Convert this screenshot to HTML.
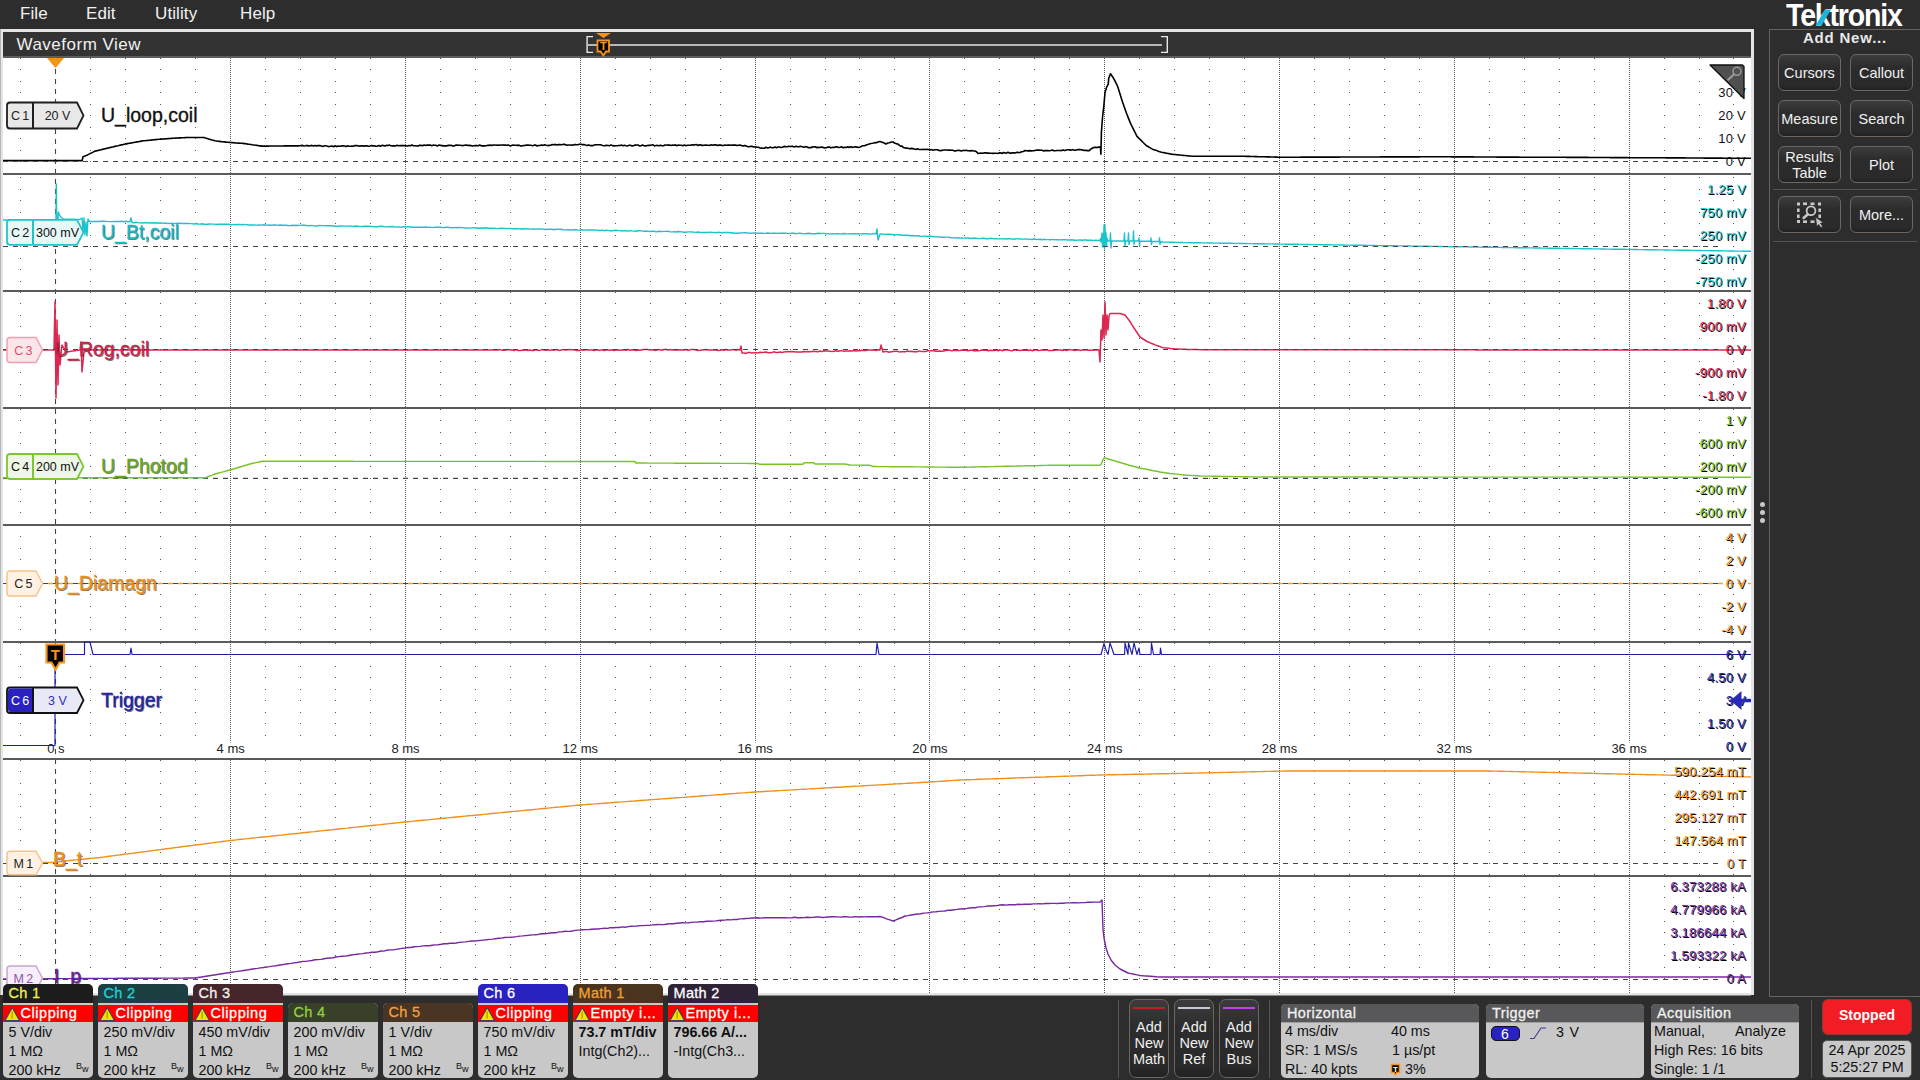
<!DOCTYPE html>
<html><head><meta charset="utf-8"><style>
*{margin:0;padding:0;box-sizing:border-box}
html,body{width:1920px;height:1080px;overflow:hidden;background:#2d2d2d;font-family:"Liberation Sans", sans-serif}
.a{position:absolute}
.menu{position:absolute;top:3px;color:#f2f2f2;font-size:17px;line-height:22px;letter-spacing:0.1px}
</style></head><body>

<div class="menu" style="left:20px">File</div>
<div class="menu" style="left:86px">Edit</div>
<div class="menu" style="left:155px">Utility</div>
<div class="menu" style="left:240px">Help</div>
<div class="a" style="left:0;top:29px;width:1754px;height:966px;background:#e4e4e6;border-left:1px solid #b4b6ba"></div>
<div class="a" style="left:3px;top:32px;width:1748px;height:24px;background:#333"></div>
<div class="a" style="left:3px;top:56px;width:1748px;height:2px;background:#5c5c60"></div>
<div class="a" style="left:16.5px;top:35px;color:#f0f0f0;font-size:17px;line-height:20px;letter-spacing:0.5px">Waveform View</div>
<div class="a" style="left:3px;top:58px;width:1748px;height:937px;background:#fff"></div>
<svg class="a" style="left:0;top:0" width="1920" height="1080" viewBox="0 0 1920 1080" font-family='Liberation Sans, sans-serif'>
<defs><clipPath id="pc"><rect x="3" y="58" width="1748" height="937"/></clipPath></defs>
<g clip-path="url(#pc)">
<path d="M20 58h1v1h-1zM90 58h1v1h-1zM125 58h1v1h-1zM160 58h1v1h-1zM195 58h1v1h-1zM265 58h1v1h-1zM300 58h1v1h-1zM335 58h1v1h-1zM370 58h1v1h-1zM440 58h1v1h-1zM475 58h1v1h-1zM510 58h1v1h-1zM545 58h1v1h-1zM615 58h1v1h-1zM650 58h1v1h-1zM685 58h1v1h-1zM720 58h1v1h-1zM790 58h1v1h-1zM825 58h1v1h-1zM859 58h1v1h-1zM894 58h1v1h-1zM964 58h1v1h-1zM999 58h1v1h-1zM1034 58h1v1h-1zM1069 58h1v1h-1zM1139 58h1v1h-1zM1174 58h1v1h-1zM1209 58h1v1h-1zM1244 58h1v1h-1zM1314 58h1v1h-1zM1349 58h1v1h-1zM1384 58h1v1h-1zM1419 58h1v1h-1zM1489 58h1v1h-1zM1524 58h1v1h-1zM1559 58h1v1h-1zM1594 58h1v1h-1zM1664 58h1v1h-1zM1699 58h1v1h-1zM1733 58h1v1h-1zM20 69h1v1h-1zM90 69h1v1h-1zM125 69h1v1h-1zM160 69h1v1h-1zM195 69h1v1h-1zM265 69h1v1h-1zM300 69h1v1h-1zM335 69h1v1h-1zM370 69h1v1h-1zM440 69h1v1h-1zM475 69h1v1h-1zM510 69h1v1h-1zM545 69h1v1h-1zM615 69h1v1h-1zM650 69h1v1h-1zM685 69h1v1h-1zM720 69h1v1h-1zM790 69h1v1h-1zM825 69h1v1h-1zM859 69h1v1h-1zM894 69h1v1h-1zM964 69h1v1h-1zM999 69h1v1h-1zM1034 69h1v1h-1zM1069 69h1v1h-1zM1139 69h1v1h-1zM1174 69h1v1h-1zM1209 69h1v1h-1zM1244 69h1v1h-1zM1314 69h1v1h-1zM1349 69h1v1h-1zM1384 69h1v1h-1zM1419 69h1v1h-1zM1489 69h1v1h-1zM1524 69h1v1h-1zM1559 69h1v1h-1zM1594 69h1v1h-1zM1664 69h1v1h-1zM1699 69h1v1h-1zM1733 69h1v1h-1zM20 81h1v1h-1zM90 81h1v1h-1zM125 81h1v1h-1zM160 81h1v1h-1zM195 81h1v1h-1zM265 81h1v1h-1zM300 81h1v1h-1zM335 81h1v1h-1zM370 81h1v1h-1zM440 81h1v1h-1zM475 81h1v1h-1zM510 81h1v1h-1zM545 81h1v1h-1zM615 81h1v1h-1zM650 81h1v1h-1zM685 81h1v1h-1zM720 81h1v1h-1zM790 81h1v1h-1zM825 81h1v1h-1zM859 81h1v1h-1zM894 81h1v1h-1zM964 81h1v1h-1zM999 81h1v1h-1zM1034 81h1v1h-1zM1069 81h1v1h-1zM1139 81h1v1h-1zM1174 81h1v1h-1zM1209 81h1v1h-1zM1244 81h1v1h-1zM1314 81h1v1h-1zM1349 81h1v1h-1zM1384 81h1v1h-1zM1419 81h1v1h-1zM1489 81h1v1h-1zM1524 81h1v1h-1zM1559 81h1v1h-1zM1594 81h1v1h-1zM1664 81h1v1h-1zM1699 81h1v1h-1zM1733 81h1v1h-1zM20 92h1v1h-1zM90 92h1v1h-1zM125 92h1v1h-1zM160 92h1v1h-1zM195 92h1v1h-1zM265 92h1v1h-1zM300 92h1v1h-1zM335 92h1v1h-1zM370 92h1v1h-1zM440 92h1v1h-1zM475 92h1v1h-1zM510 92h1v1h-1zM545 92h1v1h-1zM615 92h1v1h-1zM650 92h1v1h-1zM685 92h1v1h-1zM720 92h1v1h-1zM790 92h1v1h-1zM825 92h1v1h-1zM859 92h1v1h-1zM894 92h1v1h-1zM964 92h1v1h-1zM999 92h1v1h-1zM1034 92h1v1h-1zM1069 92h1v1h-1zM1139 92h1v1h-1zM1174 92h1v1h-1zM1209 92h1v1h-1zM1244 92h1v1h-1zM1314 92h1v1h-1zM1349 92h1v1h-1zM1384 92h1v1h-1zM1419 92h1v1h-1zM1489 92h1v1h-1zM1524 92h1v1h-1zM1559 92h1v1h-1zM1594 92h1v1h-1zM1664 92h1v1h-1zM1699 92h1v1h-1zM1733 92h1v1h-1zM20 104h1v1h-1zM90 104h1v1h-1zM125 104h1v1h-1zM160 104h1v1h-1zM195 104h1v1h-1zM265 104h1v1h-1zM300 104h1v1h-1zM335 104h1v1h-1zM370 104h1v1h-1zM440 104h1v1h-1zM475 104h1v1h-1zM510 104h1v1h-1zM545 104h1v1h-1zM615 104h1v1h-1zM650 104h1v1h-1zM685 104h1v1h-1zM720 104h1v1h-1zM790 104h1v1h-1zM825 104h1v1h-1zM859 104h1v1h-1zM894 104h1v1h-1zM964 104h1v1h-1zM999 104h1v1h-1zM1034 104h1v1h-1zM1069 104h1v1h-1zM1139 104h1v1h-1zM1174 104h1v1h-1zM1209 104h1v1h-1zM1244 104h1v1h-1zM1314 104h1v1h-1zM1349 104h1v1h-1zM1384 104h1v1h-1zM1419 104h1v1h-1zM1489 104h1v1h-1zM1524 104h1v1h-1zM1559 104h1v1h-1zM1594 104h1v1h-1zM1664 104h1v1h-1zM1699 104h1v1h-1zM1733 104h1v1h-1zM20 115h1v1h-1zM90 115h1v1h-1zM125 115h1v1h-1zM160 115h1v1h-1zM195 115h1v1h-1zM265 115h1v1h-1zM300 115h1v1h-1zM335 115h1v1h-1zM370 115h1v1h-1zM440 115h1v1h-1zM475 115h1v1h-1zM510 115h1v1h-1zM545 115h1v1h-1zM615 115h1v1h-1zM650 115h1v1h-1zM685 115h1v1h-1zM720 115h1v1h-1zM790 115h1v1h-1zM825 115h1v1h-1zM859 115h1v1h-1zM894 115h1v1h-1zM964 115h1v1h-1zM999 115h1v1h-1zM1034 115h1v1h-1zM1069 115h1v1h-1zM1139 115h1v1h-1zM1174 115h1v1h-1zM1209 115h1v1h-1zM1244 115h1v1h-1zM1314 115h1v1h-1zM1349 115h1v1h-1zM1384 115h1v1h-1zM1419 115h1v1h-1zM1489 115h1v1h-1zM1524 115h1v1h-1zM1559 115h1v1h-1zM1594 115h1v1h-1zM1664 115h1v1h-1zM1699 115h1v1h-1zM1733 115h1v1h-1zM20 127h1v1h-1zM90 127h1v1h-1zM125 127h1v1h-1zM160 127h1v1h-1zM195 127h1v1h-1zM265 127h1v1h-1zM300 127h1v1h-1zM335 127h1v1h-1zM370 127h1v1h-1zM440 127h1v1h-1zM475 127h1v1h-1zM510 127h1v1h-1zM545 127h1v1h-1zM615 127h1v1h-1zM650 127h1v1h-1zM685 127h1v1h-1zM720 127h1v1h-1zM790 127h1v1h-1zM825 127h1v1h-1zM859 127h1v1h-1zM894 127h1v1h-1zM964 127h1v1h-1zM999 127h1v1h-1zM1034 127h1v1h-1zM1069 127h1v1h-1zM1139 127h1v1h-1zM1174 127h1v1h-1zM1209 127h1v1h-1zM1244 127h1v1h-1zM1314 127h1v1h-1zM1349 127h1v1h-1zM1384 127h1v1h-1zM1419 127h1v1h-1zM1489 127h1v1h-1zM1524 127h1v1h-1zM1559 127h1v1h-1zM1594 127h1v1h-1zM1664 127h1v1h-1zM1699 127h1v1h-1zM1733 127h1v1h-1zM20 138h1v1h-1zM90 138h1v1h-1zM125 138h1v1h-1zM160 138h1v1h-1zM195 138h1v1h-1zM265 138h1v1h-1zM300 138h1v1h-1zM335 138h1v1h-1zM370 138h1v1h-1zM440 138h1v1h-1zM475 138h1v1h-1zM510 138h1v1h-1zM545 138h1v1h-1zM615 138h1v1h-1zM650 138h1v1h-1zM685 138h1v1h-1zM720 138h1v1h-1zM790 138h1v1h-1zM825 138h1v1h-1zM859 138h1v1h-1zM894 138h1v1h-1zM964 138h1v1h-1zM999 138h1v1h-1zM1034 138h1v1h-1zM1069 138h1v1h-1zM1139 138h1v1h-1zM1174 138h1v1h-1zM1209 138h1v1h-1zM1244 138h1v1h-1zM1314 138h1v1h-1zM1349 138h1v1h-1zM1384 138h1v1h-1zM1419 138h1v1h-1zM1489 138h1v1h-1zM1524 138h1v1h-1zM1559 138h1v1h-1zM1594 138h1v1h-1zM1664 138h1v1h-1zM1699 138h1v1h-1zM1733 138h1v1h-1zM20 150h1v1h-1zM90 150h1v1h-1zM125 150h1v1h-1zM160 150h1v1h-1zM195 150h1v1h-1zM265 150h1v1h-1zM300 150h1v1h-1zM335 150h1v1h-1zM370 150h1v1h-1zM440 150h1v1h-1zM475 150h1v1h-1zM510 150h1v1h-1zM545 150h1v1h-1zM615 150h1v1h-1zM650 150h1v1h-1zM685 150h1v1h-1zM720 150h1v1h-1zM790 150h1v1h-1zM825 150h1v1h-1zM859 150h1v1h-1zM894 150h1v1h-1zM964 150h1v1h-1zM999 150h1v1h-1zM1034 150h1v1h-1zM1069 150h1v1h-1zM1139 150h1v1h-1zM1174 150h1v1h-1zM1209 150h1v1h-1zM1244 150h1v1h-1zM1314 150h1v1h-1zM1349 150h1v1h-1zM1384 150h1v1h-1zM1419 150h1v1h-1zM1489 150h1v1h-1zM1524 150h1v1h-1zM1559 150h1v1h-1zM1594 150h1v1h-1zM1664 150h1v1h-1zM1699 150h1v1h-1zM1733 150h1v1h-1zM20 161h1v1h-1zM90 161h1v1h-1zM125 161h1v1h-1zM160 161h1v1h-1zM195 161h1v1h-1zM265 161h1v1h-1zM300 161h1v1h-1zM335 161h1v1h-1zM370 161h1v1h-1zM440 161h1v1h-1zM475 161h1v1h-1zM510 161h1v1h-1zM545 161h1v1h-1zM615 161h1v1h-1zM650 161h1v1h-1zM685 161h1v1h-1zM720 161h1v1h-1zM790 161h1v1h-1zM825 161h1v1h-1zM859 161h1v1h-1zM894 161h1v1h-1zM964 161h1v1h-1zM999 161h1v1h-1zM1034 161h1v1h-1zM1069 161h1v1h-1zM1139 161h1v1h-1zM1174 161h1v1h-1zM1209 161h1v1h-1zM1244 161h1v1h-1zM1314 161h1v1h-1zM1349 161h1v1h-1zM1384 161h1v1h-1zM1419 161h1v1h-1zM1489 161h1v1h-1zM1524 161h1v1h-1zM1559 161h1v1h-1zM1594 161h1v1h-1zM1664 161h1v1h-1zM1699 161h1v1h-1zM1733 161h1v1h-1zM20 177h1v1h-1zM90 177h1v1h-1zM125 177h1v1h-1zM160 177h1v1h-1zM195 177h1v1h-1zM265 177h1v1h-1zM300 177h1v1h-1zM335 177h1v1h-1zM370 177h1v1h-1zM440 177h1v1h-1zM475 177h1v1h-1zM510 177h1v1h-1zM545 177h1v1h-1zM615 177h1v1h-1zM650 177h1v1h-1zM685 177h1v1h-1zM720 177h1v1h-1zM790 177h1v1h-1zM825 177h1v1h-1zM859 177h1v1h-1zM894 177h1v1h-1zM964 177h1v1h-1zM999 177h1v1h-1zM1034 177h1v1h-1zM1069 177h1v1h-1zM1139 177h1v1h-1zM1174 177h1v1h-1zM1209 177h1v1h-1zM1244 177h1v1h-1zM1314 177h1v1h-1zM1349 177h1v1h-1zM1384 177h1v1h-1zM1419 177h1v1h-1zM1489 177h1v1h-1zM1524 177h1v1h-1zM1559 177h1v1h-1zM1594 177h1v1h-1zM1664 177h1v1h-1zM1699 177h1v1h-1zM1733 177h1v1h-1zM20 189h1v1h-1zM90 189h1v1h-1zM125 189h1v1h-1zM160 189h1v1h-1zM195 189h1v1h-1zM265 189h1v1h-1zM300 189h1v1h-1zM335 189h1v1h-1zM370 189h1v1h-1zM440 189h1v1h-1zM475 189h1v1h-1zM510 189h1v1h-1zM545 189h1v1h-1zM615 189h1v1h-1zM650 189h1v1h-1zM685 189h1v1h-1zM720 189h1v1h-1zM790 189h1v1h-1zM825 189h1v1h-1zM859 189h1v1h-1zM894 189h1v1h-1zM964 189h1v1h-1zM999 189h1v1h-1zM1034 189h1v1h-1zM1069 189h1v1h-1zM1139 189h1v1h-1zM1174 189h1v1h-1zM1209 189h1v1h-1zM1244 189h1v1h-1zM1314 189h1v1h-1zM1349 189h1v1h-1zM1384 189h1v1h-1zM1419 189h1v1h-1zM1489 189h1v1h-1zM1524 189h1v1h-1zM1559 189h1v1h-1zM1594 189h1v1h-1zM1664 189h1v1h-1zM1699 189h1v1h-1zM1733 189h1v1h-1zM20 200h1v1h-1zM90 200h1v1h-1zM125 200h1v1h-1zM160 200h1v1h-1zM195 200h1v1h-1zM265 200h1v1h-1zM300 200h1v1h-1zM335 200h1v1h-1zM370 200h1v1h-1zM440 200h1v1h-1zM475 200h1v1h-1zM510 200h1v1h-1zM545 200h1v1h-1zM615 200h1v1h-1zM650 200h1v1h-1zM685 200h1v1h-1zM720 200h1v1h-1zM790 200h1v1h-1zM825 200h1v1h-1zM859 200h1v1h-1zM894 200h1v1h-1zM964 200h1v1h-1zM999 200h1v1h-1zM1034 200h1v1h-1zM1069 200h1v1h-1zM1139 200h1v1h-1zM1174 200h1v1h-1zM1209 200h1v1h-1zM1244 200h1v1h-1zM1314 200h1v1h-1zM1349 200h1v1h-1zM1384 200h1v1h-1zM1419 200h1v1h-1zM1489 200h1v1h-1zM1524 200h1v1h-1zM1559 200h1v1h-1zM1594 200h1v1h-1zM1664 200h1v1h-1zM1699 200h1v1h-1zM1733 200h1v1h-1zM20 212h1v1h-1zM90 212h1v1h-1zM125 212h1v1h-1zM160 212h1v1h-1zM195 212h1v1h-1zM265 212h1v1h-1zM300 212h1v1h-1zM335 212h1v1h-1zM370 212h1v1h-1zM440 212h1v1h-1zM475 212h1v1h-1zM510 212h1v1h-1zM545 212h1v1h-1zM615 212h1v1h-1zM650 212h1v1h-1zM685 212h1v1h-1zM720 212h1v1h-1zM790 212h1v1h-1zM825 212h1v1h-1zM859 212h1v1h-1zM894 212h1v1h-1zM964 212h1v1h-1zM999 212h1v1h-1zM1034 212h1v1h-1zM1069 212h1v1h-1zM1139 212h1v1h-1zM1174 212h1v1h-1zM1209 212h1v1h-1zM1244 212h1v1h-1zM1314 212h1v1h-1zM1349 212h1v1h-1zM1384 212h1v1h-1zM1419 212h1v1h-1zM1489 212h1v1h-1zM1524 212h1v1h-1zM1559 212h1v1h-1zM1594 212h1v1h-1zM1664 212h1v1h-1zM1699 212h1v1h-1zM1733 212h1v1h-1zM20 223h1v1h-1zM90 223h1v1h-1zM125 223h1v1h-1zM160 223h1v1h-1zM195 223h1v1h-1zM265 223h1v1h-1zM300 223h1v1h-1zM335 223h1v1h-1zM370 223h1v1h-1zM440 223h1v1h-1zM475 223h1v1h-1zM510 223h1v1h-1zM545 223h1v1h-1zM615 223h1v1h-1zM650 223h1v1h-1zM685 223h1v1h-1zM720 223h1v1h-1zM790 223h1v1h-1zM825 223h1v1h-1zM859 223h1v1h-1zM894 223h1v1h-1zM964 223h1v1h-1zM999 223h1v1h-1zM1034 223h1v1h-1zM1069 223h1v1h-1zM1139 223h1v1h-1zM1174 223h1v1h-1zM1209 223h1v1h-1zM1244 223h1v1h-1zM1314 223h1v1h-1zM1349 223h1v1h-1zM1384 223h1v1h-1zM1419 223h1v1h-1zM1489 223h1v1h-1zM1524 223h1v1h-1zM1559 223h1v1h-1zM1594 223h1v1h-1zM1664 223h1v1h-1zM1699 223h1v1h-1zM1733 223h1v1h-1zM20 235h1v1h-1zM90 235h1v1h-1zM125 235h1v1h-1zM160 235h1v1h-1zM195 235h1v1h-1zM265 235h1v1h-1zM300 235h1v1h-1zM335 235h1v1h-1zM370 235h1v1h-1zM440 235h1v1h-1zM475 235h1v1h-1zM510 235h1v1h-1zM545 235h1v1h-1zM615 235h1v1h-1zM650 235h1v1h-1zM685 235h1v1h-1zM720 235h1v1h-1zM790 235h1v1h-1zM825 235h1v1h-1zM859 235h1v1h-1zM894 235h1v1h-1zM964 235h1v1h-1zM999 235h1v1h-1zM1034 235h1v1h-1zM1069 235h1v1h-1zM1139 235h1v1h-1zM1174 235h1v1h-1zM1209 235h1v1h-1zM1244 235h1v1h-1zM1314 235h1v1h-1zM1349 235h1v1h-1zM1384 235h1v1h-1zM1419 235h1v1h-1zM1489 235h1v1h-1zM1524 235h1v1h-1zM1559 235h1v1h-1zM1594 235h1v1h-1zM1664 235h1v1h-1zM1699 235h1v1h-1zM1733 235h1v1h-1zM20 246h1v1h-1zM90 246h1v1h-1zM125 246h1v1h-1zM160 246h1v1h-1zM195 246h1v1h-1zM265 246h1v1h-1zM300 246h1v1h-1zM335 246h1v1h-1zM370 246h1v1h-1zM440 246h1v1h-1zM475 246h1v1h-1zM510 246h1v1h-1zM545 246h1v1h-1zM615 246h1v1h-1zM650 246h1v1h-1zM685 246h1v1h-1zM720 246h1v1h-1zM790 246h1v1h-1zM825 246h1v1h-1zM859 246h1v1h-1zM894 246h1v1h-1zM964 246h1v1h-1zM999 246h1v1h-1zM1034 246h1v1h-1zM1069 246h1v1h-1zM1139 246h1v1h-1zM1174 246h1v1h-1zM1209 246h1v1h-1zM1244 246h1v1h-1zM1314 246h1v1h-1zM1349 246h1v1h-1zM1384 246h1v1h-1zM1419 246h1v1h-1zM1489 246h1v1h-1zM1524 246h1v1h-1zM1559 246h1v1h-1zM1594 246h1v1h-1zM1664 246h1v1h-1zM1699 246h1v1h-1zM1733 246h1v1h-1zM20 258h1v1h-1zM90 258h1v1h-1zM125 258h1v1h-1zM160 258h1v1h-1zM195 258h1v1h-1zM265 258h1v1h-1zM300 258h1v1h-1zM335 258h1v1h-1zM370 258h1v1h-1zM440 258h1v1h-1zM475 258h1v1h-1zM510 258h1v1h-1zM545 258h1v1h-1zM615 258h1v1h-1zM650 258h1v1h-1zM685 258h1v1h-1zM720 258h1v1h-1zM790 258h1v1h-1zM825 258h1v1h-1zM859 258h1v1h-1zM894 258h1v1h-1zM964 258h1v1h-1zM999 258h1v1h-1zM1034 258h1v1h-1zM1069 258h1v1h-1zM1139 258h1v1h-1zM1174 258h1v1h-1zM1209 258h1v1h-1zM1244 258h1v1h-1zM1314 258h1v1h-1zM1349 258h1v1h-1zM1384 258h1v1h-1zM1419 258h1v1h-1zM1489 258h1v1h-1zM1524 258h1v1h-1zM1559 258h1v1h-1zM1594 258h1v1h-1zM1664 258h1v1h-1zM1699 258h1v1h-1zM1733 258h1v1h-1zM20 269h1v1h-1zM90 269h1v1h-1zM125 269h1v1h-1zM160 269h1v1h-1zM195 269h1v1h-1zM265 269h1v1h-1zM300 269h1v1h-1zM335 269h1v1h-1zM370 269h1v1h-1zM440 269h1v1h-1zM475 269h1v1h-1zM510 269h1v1h-1zM545 269h1v1h-1zM615 269h1v1h-1zM650 269h1v1h-1zM685 269h1v1h-1zM720 269h1v1h-1zM790 269h1v1h-1zM825 269h1v1h-1zM859 269h1v1h-1zM894 269h1v1h-1zM964 269h1v1h-1zM999 269h1v1h-1zM1034 269h1v1h-1zM1069 269h1v1h-1zM1139 269h1v1h-1zM1174 269h1v1h-1zM1209 269h1v1h-1zM1244 269h1v1h-1zM1314 269h1v1h-1zM1349 269h1v1h-1zM1384 269h1v1h-1zM1419 269h1v1h-1zM1489 269h1v1h-1zM1524 269h1v1h-1zM1559 269h1v1h-1zM1594 269h1v1h-1zM1664 269h1v1h-1zM1699 269h1v1h-1zM1733 269h1v1h-1zM20 281h1v1h-1zM90 281h1v1h-1zM125 281h1v1h-1zM160 281h1v1h-1zM195 281h1v1h-1zM265 281h1v1h-1zM300 281h1v1h-1zM335 281h1v1h-1zM370 281h1v1h-1zM440 281h1v1h-1zM475 281h1v1h-1zM510 281h1v1h-1zM545 281h1v1h-1zM615 281h1v1h-1zM650 281h1v1h-1zM685 281h1v1h-1zM720 281h1v1h-1zM790 281h1v1h-1zM825 281h1v1h-1zM859 281h1v1h-1zM894 281h1v1h-1zM964 281h1v1h-1zM999 281h1v1h-1zM1034 281h1v1h-1zM1069 281h1v1h-1zM1139 281h1v1h-1zM1174 281h1v1h-1zM1209 281h1v1h-1zM1244 281h1v1h-1zM1314 281h1v1h-1zM1349 281h1v1h-1zM1384 281h1v1h-1zM1419 281h1v1h-1zM1489 281h1v1h-1zM1524 281h1v1h-1zM1559 281h1v1h-1zM1594 281h1v1h-1zM1664 281h1v1h-1zM1699 281h1v1h-1zM1733 281h1v1h-1zM20 292h1v1h-1zM90 292h1v1h-1zM125 292h1v1h-1zM160 292h1v1h-1zM195 292h1v1h-1zM265 292h1v1h-1zM300 292h1v1h-1zM335 292h1v1h-1zM370 292h1v1h-1zM440 292h1v1h-1zM475 292h1v1h-1zM510 292h1v1h-1zM545 292h1v1h-1zM615 292h1v1h-1zM650 292h1v1h-1zM685 292h1v1h-1zM720 292h1v1h-1zM790 292h1v1h-1zM825 292h1v1h-1zM859 292h1v1h-1zM894 292h1v1h-1zM964 292h1v1h-1zM999 292h1v1h-1zM1034 292h1v1h-1zM1069 292h1v1h-1zM1139 292h1v1h-1zM1174 292h1v1h-1zM1209 292h1v1h-1zM1244 292h1v1h-1zM1314 292h1v1h-1zM1349 292h1v1h-1zM1384 292h1v1h-1zM1419 292h1v1h-1zM1489 292h1v1h-1zM1524 292h1v1h-1zM1559 292h1v1h-1zM1594 292h1v1h-1zM1664 292h1v1h-1zM1699 292h1v1h-1zM1733 292h1v1h-1zM20 303h1v1h-1zM90 303h1v1h-1zM125 303h1v1h-1zM160 303h1v1h-1zM195 303h1v1h-1zM265 303h1v1h-1zM300 303h1v1h-1zM335 303h1v1h-1zM370 303h1v1h-1zM440 303h1v1h-1zM475 303h1v1h-1zM510 303h1v1h-1zM545 303h1v1h-1zM615 303h1v1h-1zM650 303h1v1h-1zM685 303h1v1h-1zM720 303h1v1h-1zM790 303h1v1h-1zM825 303h1v1h-1zM859 303h1v1h-1zM894 303h1v1h-1zM964 303h1v1h-1zM999 303h1v1h-1zM1034 303h1v1h-1zM1069 303h1v1h-1zM1139 303h1v1h-1zM1174 303h1v1h-1zM1209 303h1v1h-1zM1244 303h1v1h-1zM1314 303h1v1h-1zM1349 303h1v1h-1zM1384 303h1v1h-1zM1419 303h1v1h-1zM1489 303h1v1h-1zM1524 303h1v1h-1zM1559 303h1v1h-1zM1594 303h1v1h-1zM1664 303h1v1h-1zM1699 303h1v1h-1zM1733 303h1v1h-1zM20 315h1v1h-1zM90 315h1v1h-1zM125 315h1v1h-1zM160 315h1v1h-1zM195 315h1v1h-1zM265 315h1v1h-1zM300 315h1v1h-1zM335 315h1v1h-1zM370 315h1v1h-1zM440 315h1v1h-1zM475 315h1v1h-1zM510 315h1v1h-1zM545 315h1v1h-1zM615 315h1v1h-1zM650 315h1v1h-1zM685 315h1v1h-1zM720 315h1v1h-1zM790 315h1v1h-1zM825 315h1v1h-1zM859 315h1v1h-1zM894 315h1v1h-1zM964 315h1v1h-1zM999 315h1v1h-1zM1034 315h1v1h-1zM1069 315h1v1h-1zM1139 315h1v1h-1zM1174 315h1v1h-1zM1209 315h1v1h-1zM1244 315h1v1h-1zM1314 315h1v1h-1zM1349 315h1v1h-1zM1384 315h1v1h-1zM1419 315h1v1h-1zM1489 315h1v1h-1zM1524 315h1v1h-1zM1559 315h1v1h-1zM1594 315h1v1h-1zM1664 315h1v1h-1zM1699 315h1v1h-1zM1733 315h1v1h-1zM20 326h1v1h-1zM90 326h1v1h-1zM125 326h1v1h-1zM160 326h1v1h-1zM195 326h1v1h-1zM265 326h1v1h-1zM300 326h1v1h-1zM335 326h1v1h-1zM370 326h1v1h-1zM440 326h1v1h-1zM475 326h1v1h-1zM510 326h1v1h-1zM545 326h1v1h-1zM615 326h1v1h-1zM650 326h1v1h-1zM685 326h1v1h-1zM720 326h1v1h-1zM790 326h1v1h-1zM825 326h1v1h-1zM859 326h1v1h-1zM894 326h1v1h-1zM964 326h1v1h-1zM999 326h1v1h-1zM1034 326h1v1h-1zM1069 326h1v1h-1zM1139 326h1v1h-1zM1174 326h1v1h-1zM1209 326h1v1h-1zM1244 326h1v1h-1zM1314 326h1v1h-1zM1349 326h1v1h-1zM1384 326h1v1h-1zM1419 326h1v1h-1zM1489 326h1v1h-1zM1524 326h1v1h-1zM1559 326h1v1h-1zM1594 326h1v1h-1zM1664 326h1v1h-1zM1699 326h1v1h-1zM1733 326h1v1h-1zM20 338h1v1h-1zM90 338h1v1h-1zM125 338h1v1h-1zM160 338h1v1h-1zM195 338h1v1h-1zM265 338h1v1h-1zM300 338h1v1h-1zM335 338h1v1h-1zM370 338h1v1h-1zM440 338h1v1h-1zM475 338h1v1h-1zM510 338h1v1h-1zM545 338h1v1h-1zM615 338h1v1h-1zM650 338h1v1h-1zM685 338h1v1h-1zM720 338h1v1h-1zM790 338h1v1h-1zM825 338h1v1h-1zM859 338h1v1h-1zM894 338h1v1h-1zM964 338h1v1h-1zM999 338h1v1h-1zM1034 338h1v1h-1zM1069 338h1v1h-1zM1139 338h1v1h-1zM1174 338h1v1h-1zM1209 338h1v1h-1zM1244 338h1v1h-1zM1314 338h1v1h-1zM1349 338h1v1h-1zM1384 338h1v1h-1zM1419 338h1v1h-1zM1489 338h1v1h-1zM1524 338h1v1h-1zM1559 338h1v1h-1zM1594 338h1v1h-1zM1664 338h1v1h-1zM1699 338h1v1h-1zM1733 338h1v1h-1zM20 349h1v1h-1zM90 349h1v1h-1zM125 349h1v1h-1zM160 349h1v1h-1zM195 349h1v1h-1zM265 349h1v1h-1zM300 349h1v1h-1zM335 349h1v1h-1zM370 349h1v1h-1zM440 349h1v1h-1zM475 349h1v1h-1zM510 349h1v1h-1zM545 349h1v1h-1zM615 349h1v1h-1zM650 349h1v1h-1zM685 349h1v1h-1zM720 349h1v1h-1zM790 349h1v1h-1zM825 349h1v1h-1zM859 349h1v1h-1zM894 349h1v1h-1zM964 349h1v1h-1zM999 349h1v1h-1zM1034 349h1v1h-1zM1069 349h1v1h-1zM1139 349h1v1h-1zM1174 349h1v1h-1zM1209 349h1v1h-1zM1244 349h1v1h-1zM1314 349h1v1h-1zM1349 349h1v1h-1zM1384 349h1v1h-1zM1419 349h1v1h-1zM1489 349h1v1h-1zM1524 349h1v1h-1zM1559 349h1v1h-1zM1594 349h1v1h-1zM1664 349h1v1h-1zM1699 349h1v1h-1zM1733 349h1v1h-1zM20 361h1v1h-1zM90 361h1v1h-1zM125 361h1v1h-1zM160 361h1v1h-1zM195 361h1v1h-1zM265 361h1v1h-1zM300 361h1v1h-1zM335 361h1v1h-1zM370 361h1v1h-1zM440 361h1v1h-1zM475 361h1v1h-1zM510 361h1v1h-1zM545 361h1v1h-1zM615 361h1v1h-1zM650 361h1v1h-1zM685 361h1v1h-1zM720 361h1v1h-1zM790 361h1v1h-1zM825 361h1v1h-1zM859 361h1v1h-1zM894 361h1v1h-1zM964 361h1v1h-1zM999 361h1v1h-1zM1034 361h1v1h-1zM1069 361h1v1h-1zM1139 361h1v1h-1zM1174 361h1v1h-1zM1209 361h1v1h-1zM1244 361h1v1h-1zM1314 361h1v1h-1zM1349 361h1v1h-1zM1384 361h1v1h-1zM1419 361h1v1h-1zM1489 361h1v1h-1zM1524 361h1v1h-1zM1559 361h1v1h-1zM1594 361h1v1h-1zM1664 361h1v1h-1zM1699 361h1v1h-1zM1733 361h1v1h-1zM20 372h1v1h-1zM90 372h1v1h-1zM125 372h1v1h-1zM160 372h1v1h-1zM195 372h1v1h-1zM265 372h1v1h-1zM300 372h1v1h-1zM335 372h1v1h-1zM370 372h1v1h-1zM440 372h1v1h-1zM475 372h1v1h-1zM510 372h1v1h-1zM545 372h1v1h-1zM615 372h1v1h-1zM650 372h1v1h-1zM685 372h1v1h-1zM720 372h1v1h-1zM790 372h1v1h-1zM825 372h1v1h-1zM859 372h1v1h-1zM894 372h1v1h-1zM964 372h1v1h-1zM999 372h1v1h-1zM1034 372h1v1h-1zM1069 372h1v1h-1zM1139 372h1v1h-1zM1174 372h1v1h-1zM1209 372h1v1h-1zM1244 372h1v1h-1zM1314 372h1v1h-1zM1349 372h1v1h-1zM1384 372h1v1h-1zM1419 372h1v1h-1zM1489 372h1v1h-1zM1524 372h1v1h-1zM1559 372h1v1h-1zM1594 372h1v1h-1zM1664 372h1v1h-1zM1699 372h1v1h-1zM1733 372h1v1h-1zM20 384h1v1h-1zM90 384h1v1h-1zM125 384h1v1h-1zM160 384h1v1h-1zM195 384h1v1h-1zM265 384h1v1h-1zM300 384h1v1h-1zM335 384h1v1h-1zM370 384h1v1h-1zM440 384h1v1h-1zM475 384h1v1h-1zM510 384h1v1h-1zM545 384h1v1h-1zM615 384h1v1h-1zM650 384h1v1h-1zM685 384h1v1h-1zM720 384h1v1h-1zM790 384h1v1h-1zM825 384h1v1h-1zM859 384h1v1h-1zM894 384h1v1h-1zM964 384h1v1h-1zM999 384h1v1h-1zM1034 384h1v1h-1zM1069 384h1v1h-1zM1139 384h1v1h-1zM1174 384h1v1h-1zM1209 384h1v1h-1zM1244 384h1v1h-1zM1314 384h1v1h-1zM1349 384h1v1h-1zM1384 384h1v1h-1zM1419 384h1v1h-1zM1489 384h1v1h-1zM1524 384h1v1h-1zM1559 384h1v1h-1zM1594 384h1v1h-1zM1664 384h1v1h-1zM1699 384h1v1h-1zM1733 384h1v1h-1zM20 395h1v1h-1zM90 395h1v1h-1zM125 395h1v1h-1zM160 395h1v1h-1zM195 395h1v1h-1zM265 395h1v1h-1zM300 395h1v1h-1zM335 395h1v1h-1zM370 395h1v1h-1zM440 395h1v1h-1zM475 395h1v1h-1zM510 395h1v1h-1zM545 395h1v1h-1zM615 395h1v1h-1zM650 395h1v1h-1zM685 395h1v1h-1zM720 395h1v1h-1zM790 395h1v1h-1zM825 395h1v1h-1zM859 395h1v1h-1zM894 395h1v1h-1zM964 395h1v1h-1zM999 395h1v1h-1zM1034 395h1v1h-1zM1069 395h1v1h-1zM1139 395h1v1h-1zM1174 395h1v1h-1zM1209 395h1v1h-1zM1244 395h1v1h-1zM1314 395h1v1h-1zM1349 395h1v1h-1zM1384 395h1v1h-1zM1419 395h1v1h-1zM1489 395h1v1h-1zM1524 395h1v1h-1zM1559 395h1v1h-1zM1594 395h1v1h-1zM1664 395h1v1h-1zM1699 395h1v1h-1zM1733 395h1v1h-1zM20 409h1v1h-1zM90 409h1v1h-1zM125 409h1v1h-1zM160 409h1v1h-1zM195 409h1v1h-1zM265 409h1v1h-1zM300 409h1v1h-1zM335 409h1v1h-1zM370 409h1v1h-1zM440 409h1v1h-1zM475 409h1v1h-1zM510 409h1v1h-1zM545 409h1v1h-1zM615 409h1v1h-1zM650 409h1v1h-1zM685 409h1v1h-1zM720 409h1v1h-1zM790 409h1v1h-1zM825 409h1v1h-1zM859 409h1v1h-1zM894 409h1v1h-1zM964 409h1v1h-1zM999 409h1v1h-1zM1034 409h1v1h-1zM1069 409h1v1h-1zM1139 409h1v1h-1zM1174 409h1v1h-1zM1209 409h1v1h-1zM1244 409h1v1h-1zM1314 409h1v1h-1zM1349 409h1v1h-1zM1384 409h1v1h-1zM1419 409h1v1h-1zM1489 409h1v1h-1zM1524 409h1v1h-1zM1559 409h1v1h-1zM1594 409h1v1h-1zM1664 409h1v1h-1zM1699 409h1v1h-1zM1733 409h1v1h-1zM20 420h1v1h-1zM90 420h1v1h-1zM125 420h1v1h-1zM160 420h1v1h-1zM195 420h1v1h-1zM265 420h1v1h-1zM300 420h1v1h-1zM335 420h1v1h-1zM370 420h1v1h-1zM440 420h1v1h-1zM475 420h1v1h-1zM510 420h1v1h-1zM545 420h1v1h-1zM615 420h1v1h-1zM650 420h1v1h-1zM685 420h1v1h-1zM720 420h1v1h-1zM790 420h1v1h-1zM825 420h1v1h-1zM859 420h1v1h-1zM894 420h1v1h-1zM964 420h1v1h-1zM999 420h1v1h-1zM1034 420h1v1h-1zM1069 420h1v1h-1zM1139 420h1v1h-1zM1174 420h1v1h-1zM1209 420h1v1h-1zM1244 420h1v1h-1zM1314 420h1v1h-1zM1349 420h1v1h-1zM1384 420h1v1h-1zM1419 420h1v1h-1zM1489 420h1v1h-1zM1524 420h1v1h-1zM1559 420h1v1h-1zM1594 420h1v1h-1zM1664 420h1v1h-1zM1699 420h1v1h-1zM1733 420h1v1h-1zM20 432h1v1h-1zM90 432h1v1h-1zM125 432h1v1h-1zM160 432h1v1h-1zM195 432h1v1h-1zM265 432h1v1h-1zM300 432h1v1h-1zM335 432h1v1h-1zM370 432h1v1h-1zM440 432h1v1h-1zM475 432h1v1h-1zM510 432h1v1h-1zM545 432h1v1h-1zM615 432h1v1h-1zM650 432h1v1h-1zM685 432h1v1h-1zM720 432h1v1h-1zM790 432h1v1h-1zM825 432h1v1h-1zM859 432h1v1h-1zM894 432h1v1h-1zM964 432h1v1h-1zM999 432h1v1h-1zM1034 432h1v1h-1zM1069 432h1v1h-1zM1139 432h1v1h-1zM1174 432h1v1h-1zM1209 432h1v1h-1zM1244 432h1v1h-1zM1314 432h1v1h-1zM1349 432h1v1h-1zM1384 432h1v1h-1zM1419 432h1v1h-1zM1489 432h1v1h-1zM1524 432h1v1h-1zM1559 432h1v1h-1zM1594 432h1v1h-1zM1664 432h1v1h-1zM1699 432h1v1h-1zM1733 432h1v1h-1zM20 443h1v1h-1zM90 443h1v1h-1zM125 443h1v1h-1zM160 443h1v1h-1zM195 443h1v1h-1zM265 443h1v1h-1zM300 443h1v1h-1zM335 443h1v1h-1zM370 443h1v1h-1zM440 443h1v1h-1zM475 443h1v1h-1zM510 443h1v1h-1zM545 443h1v1h-1zM615 443h1v1h-1zM650 443h1v1h-1zM685 443h1v1h-1zM720 443h1v1h-1zM790 443h1v1h-1zM825 443h1v1h-1zM859 443h1v1h-1zM894 443h1v1h-1zM964 443h1v1h-1zM999 443h1v1h-1zM1034 443h1v1h-1zM1069 443h1v1h-1zM1139 443h1v1h-1zM1174 443h1v1h-1zM1209 443h1v1h-1zM1244 443h1v1h-1zM1314 443h1v1h-1zM1349 443h1v1h-1zM1384 443h1v1h-1zM1419 443h1v1h-1zM1489 443h1v1h-1zM1524 443h1v1h-1zM1559 443h1v1h-1zM1594 443h1v1h-1zM1664 443h1v1h-1zM1699 443h1v1h-1zM1733 443h1v1h-1zM20 455h1v1h-1zM90 455h1v1h-1zM125 455h1v1h-1zM160 455h1v1h-1zM195 455h1v1h-1zM265 455h1v1h-1zM300 455h1v1h-1zM335 455h1v1h-1zM370 455h1v1h-1zM440 455h1v1h-1zM475 455h1v1h-1zM510 455h1v1h-1zM545 455h1v1h-1zM615 455h1v1h-1zM650 455h1v1h-1zM685 455h1v1h-1zM720 455h1v1h-1zM790 455h1v1h-1zM825 455h1v1h-1zM859 455h1v1h-1zM894 455h1v1h-1zM964 455h1v1h-1zM999 455h1v1h-1zM1034 455h1v1h-1zM1069 455h1v1h-1zM1139 455h1v1h-1zM1174 455h1v1h-1zM1209 455h1v1h-1zM1244 455h1v1h-1zM1314 455h1v1h-1zM1349 455h1v1h-1zM1384 455h1v1h-1zM1419 455h1v1h-1zM1489 455h1v1h-1zM1524 455h1v1h-1zM1559 455h1v1h-1zM1594 455h1v1h-1zM1664 455h1v1h-1zM1699 455h1v1h-1zM1733 455h1v1h-1zM20 466h1v1h-1zM90 466h1v1h-1zM125 466h1v1h-1zM160 466h1v1h-1zM195 466h1v1h-1zM265 466h1v1h-1zM300 466h1v1h-1zM335 466h1v1h-1zM370 466h1v1h-1zM440 466h1v1h-1zM475 466h1v1h-1zM510 466h1v1h-1zM545 466h1v1h-1zM615 466h1v1h-1zM650 466h1v1h-1zM685 466h1v1h-1zM720 466h1v1h-1zM790 466h1v1h-1zM825 466h1v1h-1zM859 466h1v1h-1zM894 466h1v1h-1zM964 466h1v1h-1zM999 466h1v1h-1zM1034 466h1v1h-1zM1069 466h1v1h-1zM1139 466h1v1h-1zM1174 466h1v1h-1zM1209 466h1v1h-1zM1244 466h1v1h-1zM1314 466h1v1h-1zM1349 466h1v1h-1zM1384 466h1v1h-1zM1419 466h1v1h-1zM1489 466h1v1h-1zM1524 466h1v1h-1zM1559 466h1v1h-1zM1594 466h1v1h-1zM1664 466h1v1h-1zM1699 466h1v1h-1zM1733 466h1v1h-1zM20 478h1v1h-1zM90 478h1v1h-1zM125 478h1v1h-1zM160 478h1v1h-1zM195 478h1v1h-1zM265 478h1v1h-1zM300 478h1v1h-1zM335 478h1v1h-1zM370 478h1v1h-1zM440 478h1v1h-1zM475 478h1v1h-1zM510 478h1v1h-1zM545 478h1v1h-1zM615 478h1v1h-1zM650 478h1v1h-1zM685 478h1v1h-1zM720 478h1v1h-1zM790 478h1v1h-1zM825 478h1v1h-1zM859 478h1v1h-1zM894 478h1v1h-1zM964 478h1v1h-1zM999 478h1v1h-1zM1034 478h1v1h-1zM1069 478h1v1h-1zM1139 478h1v1h-1zM1174 478h1v1h-1zM1209 478h1v1h-1zM1244 478h1v1h-1zM1314 478h1v1h-1zM1349 478h1v1h-1zM1384 478h1v1h-1zM1419 478h1v1h-1zM1489 478h1v1h-1zM1524 478h1v1h-1zM1559 478h1v1h-1zM1594 478h1v1h-1zM1664 478h1v1h-1zM1699 478h1v1h-1zM1733 478h1v1h-1zM20 489h1v1h-1zM90 489h1v1h-1zM125 489h1v1h-1zM160 489h1v1h-1zM195 489h1v1h-1zM265 489h1v1h-1zM300 489h1v1h-1zM335 489h1v1h-1zM370 489h1v1h-1zM440 489h1v1h-1zM475 489h1v1h-1zM510 489h1v1h-1zM545 489h1v1h-1zM615 489h1v1h-1zM650 489h1v1h-1zM685 489h1v1h-1zM720 489h1v1h-1zM790 489h1v1h-1zM825 489h1v1h-1zM859 489h1v1h-1zM894 489h1v1h-1zM964 489h1v1h-1zM999 489h1v1h-1zM1034 489h1v1h-1zM1069 489h1v1h-1zM1139 489h1v1h-1zM1174 489h1v1h-1zM1209 489h1v1h-1zM1244 489h1v1h-1zM1314 489h1v1h-1zM1349 489h1v1h-1zM1384 489h1v1h-1zM1419 489h1v1h-1zM1489 489h1v1h-1zM1524 489h1v1h-1zM1559 489h1v1h-1zM1594 489h1v1h-1zM1664 489h1v1h-1zM1699 489h1v1h-1zM1733 489h1v1h-1zM20 501h1v1h-1zM90 501h1v1h-1zM125 501h1v1h-1zM160 501h1v1h-1zM195 501h1v1h-1zM265 501h1v1h-1zM300 501h1v1h-1zM335 501h1v1h-1zM370 501h1v1h-1zM440 501h1v1h-1zM475 501h1v1h-1zM510 501h1v1h-1zM545 501h1v1h-1zM615 501h1v1h-1zM650 501h1v1h-1zM685 501h1v1h-1zM720 501h1v1h-1zM790 501h1v1h-1zM825 501h1v1h-1zM859 501h1v1h-1zM894 501h1v1h-1zM964 501h1v1h-1zM999 501h1v1h-1zM1034 501h1v1h-1zM1069 501h1v1h-1zM1139 501h1v1h-1zM1174 501h1v1h-1zM1209 501h1v1h-1zM1244 501h1v1h-1zM1314 501h1v1h-1zM1349 501h1v1h-1zM1384 501h1v1h-1zM1419 501h1v1h-1zM1489 501h1v1h-1zM1524 501h1v1h-1zM1559 501h1v1h-1zM1594 501h1v1h-1zM1664 501h1v1h-1zM1699 501h1v1h-1zM1733 501h1v1h-1zM20 512h1v1h-1zM90 512h1v1h-1zM125 512h1v1h-1zM160 512h1v1h-1zM195 512h1v1h-1zM265 512h1v1h-1zM300 512h1v1h-1zM335 512h1v1h-1zM370 512h1v1h-1zM440 512h1v1h-1zM475 512h1v1h-1zM510 512h1v1h-1zM545 512h1v1h-1zM615 512h1v1h-1zM650 512h1v1h-1zM685 512h1v1h-1zM720 512h1v1h-1zM790 512h1v1h-1zM825 512h1v1h-1zM859 512h1v1h-1zM894 512h1v1h-1zM964 512h1v1h-1zM999 512h1v1h-1zM1034 512h1v1h-1zM1069 512h1v1h-1zM1139 512h1v1h-1zM1174 512h1v1h-1zM1209 512h1v1h-1zM1244 512h1v1h-1zM1314 512h1v1h-1zM1349 512h1v1h-1zM1384 512h1v1h-1zM1419 512h1v1h-1zM1489 512h1v1h-1zM1524 512h1v1h-1zM1559 512h1v1h-1zM1594 512h1v1h-1zM1664 512h1v1h-1zM1699 512h1v1h-1zM1733 512h1v1h-1zM20 525h1v1h-1zM90 525h1v1h-1zM125 525h1v1h-1zM160 525h1v1h-1zM195 525h1v1h-1zM265 525h1v1h-1zM300 525h1v1h-1zM335 525h1v1h-1zM370 525h1v1h-1zM440 525h1v1h-1zM475 525h1v1h-1zM510 525h1v1h-1zM545 525h1v1h-1zM615 525h1v1h-1zM650 525h1v1h-1zM685 525h1v1h-1zM720 525h1v1h-1zM790 525h1v1h-1zM825 525h1v1h-1zM859 525h1v1h-1zM894 525h1v1h-1zM964 525h1v1h-1zM999 525h1v1h-1zM1034 525h1v1h-1zM1069 525h1v1h-1zM1139 525h1v1h-1zM1174 525h1v1h-1zM1209 525h1v1h-1zM1244 525h1v1h-1zM1314 525h1v1h-1zM1349 525h1v1h-1zM1384 525h1v1h-1zM1419 525h1v1h-1zM1489 525h1v1h-1zM1524 525h1v1h-1zM1559 525h1v1h-1zM1594 525h1v1h-1zM1664 525h1v1h-1zM1699 525h1v1h-1zM1733 525h1v1h-1zM20 536h1v1h-1zM90 536h1v1h-1zM125 536h1v1h-1zM160 536h1v1h-1zM195 536h1v1h-1zM265 536h1v1h-1zM300 536h1v1h-1zM335 536h1v1h-1zM370 536h1v1h-1zM440 536h1v1h-1zM475 536h1v1h-1zM510 536h1v1h-1zM545 536h1v1h-1zM615 536h1v1h-1zM650 536h1v1h-1zM685 536h1v1h-1zM720 536h1v1h-1zM790 536h1v1h-1zM825 536h1v1h-1zM859 536h1v1h-1zM894 536h1v1h-1zM964 536h1v1h-1zM999 536h1v1h-1zM1034 536h1v1h-1zM1069 536h1v1h-1zM1139 536h1v1h-1zM1174 536h1v1h-1zM1209 536h1v1h-1zM1244 536h1v1h-1zM1314 536h1v1h-1zM1349 536h1v1h-1zM1384 536h1v1h-1zM1419 536h1v1h-1zM1489 536h1v1h-1zM1524 536h1v1h-1zM1559 536h1v1h-1zM1594 536h1v1h-1zM1664 536h1v1h-1zM1699 536h1v1h-1zM1733 536h1v1h-1zM20 548h1v1h-1zM90 548h1v1h-1zM125 548h1v1h-1zM160 548h1v1h-1zM195 548h1v1h-1zM265 548h1v1h-1zM300 548h1v1h-1zM335 548h1v1h-1zM370 548h1v1h-1zM440 548h1v1h-1zM475 548h1v1h-1zM510 548h1v1h-1zM545 548h1v1h-1zM615 548h1v1h-1zM650 548h1v1h-1zM685 548h1v1h-1zM720 548h1v1h-1zM790 548h1v1h-1zM825 548h1v1h-1zM859 548h1v1h-1zM894 548h1v1h-1zM964 548h1v1h-1zM999 548h1v1h-1zM1034 548h1v1h-1zM1069 548h1v1h-1zM1139 548h1v1h-1zM1174 548h1v1h-1zM1209 548h1v1h-1zM1244 548h1v1h-1zM1314 548h1v1h-1zM1349 548h1v1h-1zM1384 548h1v1h-1zM1419 548h1v1h-1zM1489 548h1v1h-1zM1524 548h1v1h-1zM1559 548h1v1h-1zM1594 548h1v1h-1zM1664 548h1v1h-1zM1699 548h1v1h-1zM1733 548h1v1h-1zM20 559h1v1h-1zM90 559h1v1h-1zM125 559h1v1h-1zM160 559h1v1h-1zM195 559h1v1h-1zM265 559h1v1h-1zM300 559h1v1h-1zM335 559h1v1h-1zM370 559h1v1h-1zM440 559h1v1h-1zM475 559h1v1h-1zM510 559h1v1h-1zM545 559h1v1h-1zM615 559h1v1h-1zM650 559h1v1h-1zM685 559h1v1h-1zM720 559h1v1h-1zM790 559h1v1h-1zM825 559h1v1h-1zM859 559h1v1h-1zM894 559h1v1h-1zM964 559h1v1h-1zM999 559h1v1h-1zM1034 559h1v1h-1zM1069 559h1v1h-1zM1139 559h1v1h-1zM1174 559h1v1h-1zM1209 559h1v1h-1zM1244 559h1v1h-1zM1314 559h1v1h-1zM1349 559h1v1h-1zM1384 559h1v1h-1zM1419 559h1v1h-1zM1489 559h1v1h-1zM1524 559h1v1h-1zM1559 559h1v1h-1zM1594 559h1v1h-1zM1664 559h1v1h-1zM1699 559h1v1h-1zM1733 559h1v1h-1zM20 571h1v1h-1zM90 571h1v1h-1zM125 571h1v1h-1zM160 571h1v1h-1zM195 571h1v1h-1zM265 571h1v1h-1zM300 571h1v1h-1zM335 571h1v1h-1zM370 571h1v1h-1zM440 571h1v1h-1zM475 571h1v1h-1zM510 571h1v1h-1zM545 571h1v1h-1zM615 571h1v1h-1zM650 571h1v1h-1zM685 571h1v1h-1zM720 571h1v1h-1zM790 571h1v1h-1zM825 571h1v1h-1zM859 571h1v1h-1zM894 571h1v1h-1zM964 571h1v1h-1zM999 571h1v1h-1zM1034 571h1v1h-1zM1069 571h1v1h-1zM1139 571h1v1h-1zM1174 571h1v1h-1zM1209 571h1v1h-1zM1244 571h1v1h-1zM1314 571h1v1h-1zM1349 571h1v1h-1zM1384 571h1v1h-1zM1419 571h1v1h-1zM1489 571h1v1h-1zM1524 571h1v1h-1zM1559 571h1v1h-1zM1594 571h1v1h-1zM1664 571h1v1h-1zM1699 571h1v1h-1zM1733 571h1v1h-1zM20 583h1v1h-1zM90 583h1v1h-1zM125 583h1v1h-1zM160 583h1v1h-1zM195 583h1v1h-1zM265 583h1v1h-1zM300 583h1v1h-1zM335 583h1v1h-1zM370 583h1v1h-1zM440 583h1v1h-1zM475 583h1v1h-1zM510 583h1v1h-1zM545 583h1v1h-1zM615 583h1v1h-1zM650 583h1v1h-1zM685 583h1v1h-1zM720 583h1v1h-1zM790 583h1v1h-1zM825 583h1v1h-1zM859 583h1v1h-1zM894 583h1v1h-1zM964 583h1v1h-1zM999 583h1v1h-1zM1034 583h1v1h-1zM1069 583h1v1h-1zM1139 583h1v1h-1zM1174 583h1v1h-1zM1209 583h1v1h-1zM1244 583h1v1h-1zM1314 583h1v1h-1zM1349 583h1v1h-1zM1384 583h1v1h-1zM1419 583h1v1h-1zM1489 583h1v1h-1zM1524 583h1v1h-1zM1559 583h1v1h-1zM1594 583h1v1h-1zM1664 583h1v1h-1zM1699 583h1v1h-1zM1733 583h1v1h-1zM20 594h1v1h-1zM90 594h1v1h-1zM125 594h1v1h-1zM160 594h1v1h-1zM195 594h1v1h-1zM265 594h1v1h-1zM300 594h1v1h-1zM335 594h1v1h-1zM370 594h1v1h-1zM440 594h1v1h-1zM475 594h1v1h-1zM510 594h1v1h-1zM545 594h1v1h-1zM615 594h1v1h-1zM650 594h1v1h-1zM685 594h1v1h-1zM720 594h1v1h-1zM790 594h1v1h-1zM825 594h1v1h-1zM859 594h1v1h-1zM894 594h1v1h-1zM964 594h1v1h-1zM999 594h1v1h-1zM1034 594h1v1h-1zM1069 594h1v1h-1zM1139 594h1v1h-1zM1174 594h1v1h-1zM1209 594h1v1h-1zM1244 594h1v1h-1zM1314 594h1v1h-1zM1349 594h1v1h-1zM1384 594h1v1h-1zM1419 594h1v1h-1zM1489 594h1v1h-1zM1524 594h1v1h-1zM1559 594h1v1h-1zM1594 594h1v1h-1zM1664 594h1v1h-1zM1699 594h1v1h-1zM1733 594h1v1h-1zM20 606h1v1h-1zM90 606h1v1h-1zM125 606h1v1h-1zM160 606h1v1h-1zM195 606h1v1h-1zM265 606h1v1h-1zM300 606h1v1h-1zM335 606h1v1h-1zM370 606h1v1h-1zM440 606h1v1h-1zM475 606h1v1h-1zM510 606h1v1h-1zM545 606h1v1h-1zM615 606h1v1h-1zM650 606h1v1h-1zM685 606h1v1h-1zM720 606h1v1h-1zM790 606h1v1h-1zM825 606h1v1h-1zM859 606h1v1h-1zM894 606h1v1h-1zM964 606h1v1h-1zM999 606h1v1h-1zM1034 606h1v1h-1zM1069 606h1v1h-1zM1139 606h1v1h-1zM1174 606h1v1h-1zM1209 606h1v1h-1zM1244 606h1v1h-1zM1314 606h1v1h-1zM1349 606h1v1h-1zM1384 606h1v1h-1zM1419 606h1v1h-1zM1489 606h1v1h-1zM1524 606h1v1h-1zM1559 606h1v1h-1zM1594 606h1v1h-1zM1664 606h1v1h-1zM1699 606h1v1h-1zM1733 606h1v1h-1zM20 617h1v1h-1zM90 617h1v1h-1zM125 617h1v1h-1zM160 617h1v1h-1zM195 617h1v1h-1zM265 617h1v1h-1zM300 617h1v1h-1zM335 617h1v1h-1zM370 617h1v1h-1zM440 617h1v1h-1zM475 617h1v1h-1zM510 617h1v1h-1zM545 617h1v1h-1zM615 617h1v1h-1zM650 617h1v1h-1zM685 617h1v1h-1zM720 617h1v1h-1zM790 617h1v1h-1zM825 617h1v1h-1zM859 617h1v1h-1zM894 617h1v1h-1zM964 617h1v1h-1zM999 617h1v1h-1zM1034 617h1v1h-1zM1069 617h1v1h-1zM1139 617h1v1h-1zM1174 617h1v1h-1zM1209 617h1v1h-1zM1244 617h1v1h-1zM1314 617h1v1h-1zM1349 617h1v1h-1zM1384 617h1v1h-1zM1419 617h1v1h-1zM1489 617h1v1h-1zM1524 617h1v1h-1zM1559 617h1v1h-1zM1594 617h1v1h-1zM1664 617h1v1h-1zM1699 617h1v1h-1zM1733 617h1v1h-1zM20 629h1v1h-1zM90 629h1v1h-1zM125 629h1v1h-1zM160 629h1v1h-1zM195 629h1v1h-1zM265 629h1v1h-1zM300 629h1v1h-1zM335 629h1v1h-1zM370 629h1v1h-1zM440 629h1v1h-1zM475 629h1v1h-1zM510 629h1v1h-1zM545 629h1v1h-1zM615 629h1v1h-1zM650 629h1v1h-1zM685 629h1v1h-1zM720 629h1v1h-1zM790 629h1v1h-1zM825 629h1v1h-1zM859 629h1v1h-1zM894 629h1v1h-1zM964 629h1v1h-1zM999 629h1v1h-1zM1034 629h1v1h-1zM1069 629h1v1h-1zM1139 629h1v1h-1zM1174 629h1v1h-1zM1209 629h1v1h-1zM1244 629h1v1h-1zM1314 629h1v1h-1zM1349 629h1v1h-1zM1384 629h1v1h-1zM1419 629h1v1h-1zM1489 629h1v1h-1zM1524 629h1v1h-1zM1559 629h1v1h-1zM1594 629h1v1h-1zM1664 629h1v1h-1zM1699 629h1v1h-1zM1733 629h1v1h-1zM20 643h1v1h-1zM90 643h1v1h-1zM125 643h1v1h-1zM160 643h1v1h-1zM195 643h1v1h-1zM265 643h1v1h-1zM300 643h1v1h-1zM335 643h1v1h-1zM370 643h1v1h-1zM440 643h1v1h-1zM475 643h1v1h-1zM510 643h1v1h-1zM545 643h1v1h-1zM615 643h1v1h-1zM650 643h1v1h-1zM685 643h1v1h-1zM720 643h1v1h-1zM790 643h1v1h-1zM825 643h1v1h-1zM859 643h1v1h-1zM894 643h1v1h-1zM964 643h1v1h-1zM999 643h1v1h-1zM1034 643h1v1h-1zM1069 643h1v1h-1zM1139 643h1v1h-1zM1174 643h1v1h-1zM1209 643h1v1h-1zM1244 643h1v1h-1zM1314 643h1v1h-1zM1349 643h1v1h-1zM1384 643h1v1h-1zM1419 643h1v1h-1zM1489 643h1v1h-1zM1524 643h1v1h-1zM1559 643h1v1h-1zM1594 643h1v1h-1zM1664 643h1v1h-1zM1699 643h1v1h-1zM1733 643h1v1h-1zM20 654h1v1h-1zM90 654h1v1h-1zM125 654h1v1h-1zM160 654h1v1h-1zM195 654h1v1h-1zM265 654h1v1h-1zM300 654h1v1h-1zM335 654h1v1h-1zM370 654h1v1h-1zM440 654h1v1h-1zM475 654h1v1h-1zM510 654h1v1h-1zM545 654h1v1h-1zM615 654h1v1h-1zM650 654h1v1h-1zM685 654h1v1h-1zM720 654h1v1h-1zM790 654h1v1h-1zM825 654h1v1h-1zM859 654h1v1h-1zM894 654h1v1h-1zM964 654h1v1h-1zM999 654h1v1h-1zM1034 654h1v1h-1zM1069 654h1v1h-1zM1139 654h1v1h-1zM1174 654h1v1h-1zM1209 654h1v1h-1zM1244 654h1v1h-1zM1314 654h1v1h-1zM1349 654h1v1h-1zM1384 654h1v1h-1zM1419 654h1v1h-1zM1489 654h1v1h-1zM1524 654h1v1h-1zM1559 654h1v1h-1zM1594 654h1v1h-1zM1664 654h1v1h-1zM1699 654h1v1h-1zM1733 654h1v1h-1zM20 666h1v1h-1zM90 666h1v1h-1zM125 666h1v1h-1zM160 666h1v1h-1zM195 666h1v1h-1zM265 666h1v1h-1zM300 666h1v1h-1zM335 666h1v1h-1zM370 666h1v1h-1zM440 666h1v1h-1zM475 666h1v1h-1zM510 666h1v1h-1zM545 666h1v1h-1zM615 666h1v1h-1zM650 666h1v1h-1zM685 666h1v1h-1zM720 666h1v1h-1zM790 666h1v1h-1zM825 666h1v1h-1zM859 666h1v1h-1zM894 666h1v1h-1zM964 666h1v1h-1zM999 666h1v1h-1zM1034 666h1v1h-1zM1069 666h1v1h-1zM1139 666h1v1h-1zM1174 666h1v1h-1zM1209 666h1v1h-1zM1244 666h1v1h-1zM1314 666h1v1h-1zM1349 666h1v1h-1zM1384 666h1v1h-1zM1419 666h1v1h-1zM1489 666h1v1h-1zM1524 666h1v1h-1zM1559 666h1v1h-1zM1594 666h1v1h-1zM1664 666h1v1h-1zM1699 666h1v1h-1zM1733 666h1v1h-1zM20 677h1v1h-1zM90 677h1v1h-1zM125 677h1v1h-1zM160 677h1v1h-1zM195 677h1v1h-1zM265 677h1v1h-1zM300 677h1v1h-1zM335 677h1v1h-1zM370 677h1v1h-1zM440 677h1v1h-1zM475 677h1v1h-1zM510 677h1v1h-1zM545 677h1v1h-1zM615 677h1v1h-1zM650 677h1v1h-1zM685 677h1v1h-1zM720 677h1v1h-1zM790 677h1v1h-1zM825 677h1v1h-1zM859 677h1v1h-1zM894 677h1v1h-1zM964 677h1v1h-1zM999 677h1v1h-1zM1034 677h1v1h-1zM1069 677h1v1h-1zM1139 677h1v1h-1zM1174 677h1v1h-1zM1209 677h1v1h-1zM1244 677h1v1h-1zM1314 677h1v1h-1zM1349 677h1v1h-1zM1384 677h1v1h-1zM1419 677h1v1h-1zM1489 677h1v1h-1zM1524 677h1v1h-1zM1559 677h1v1h-1zM1594 677h1v1h-1zM1664 677h1v1h-1zM1699 677h1v1h-1zM1733 677h1v1h-1zM20 689h1v1h-1zM90 689h1v1h-1zM125 689h1v1h-1zM160 689h1v1h-1zM195 689h1v1h-1zM265 689h1v1h-1zM300 689h1v1h-1zM335 689h1v1h-1zM370 689h1v1h-1zM440 689h1v1h-1zM475 689h1v1h-1zM510 689h1v1h-1zM545 689h1v1h-1zM615 689h1v1h-1zM650 689h1v1h-1zM685 689h1v1h-1zM720 689h1v1h-1zM790 689h1v1h-1zM825 689h1v1h-1zM859 689h1v1h-1zM894 689h1v1h-1zM964 689h1v1h-1zM999 689h1v1h-1zM1034 689h1v1h-1zM1069 689h1v1h-1zM1139 689h1v1h-1zM1174 689h1v1h-1zM1209 689h1v1h-1zM1244 689h1v1h-1zM1314 689h1v1h-1zM1349 689h1v1h-1zM1384 689h1v1h-1zM1419 689h1v1h-1zM1489 689h1v1h-1zM1524 689h1v1h-1zM1559 689h1v1h-1zM1594 689h1v1h-1zM1664 689h1v1h-1zM1699 689h1v1h-1zM1733 689h1v1h-1zM20 700h1v1h-1zM90 700h1v1h-1zM125 700h1v1h-1zM160 700h1v1h-1zM195 700h1v1h-1zM265 700h1v1h-1zM300 700h1v1h-1zM335 700h1v1h-1zM370 700h1v1h-1zM440 700h1v1h-1zM475 700h1v1h-1zM510 700h1v1h-1zM545 700h1v1h-1zM615 700h1v1h-1zM650 700h1v1h-1zM685 700h1v1h-1zM720 700h1v1h-1zM790 700h1v1h-1zM825 700h1v1h-1zM859 700h1v1h-1zM894 700h1v1h-1zM964 700h1v1h-1zM999 700h1v1h-1zM1034 700h1v1h-1zM1069 700h1v1h-1zM1139 700h1v1h-1zM1174 700h1v1h-1zM1209 700h1v1h-1zM1244 700h1v1h-1zM1314 700h1v1h-1zM1349 700h1v1h-1zM1384 700h1v1h-1zM1419 700h1v1h-1zM1489 700h1v1h-1zM1524 700h1v1h-1zM1559 700h1v1h-1zM1594 700h1v1h-1zM1664 700h1v1h-1zM1699 700h1v1h-1zM1733 700h1v1h-1zM20 712h1v1h-1zM90 712h1v1h-1zM125 712h1v1h-1zM160 712h1v1h-1zM195 712h1v1h-1zM265 712h1v1h-1zM300 712h1v1h-1zM335 712h1v1h-1zM370 712h1v1h-1zM440 712h1v1h-1zM475 712h1v1h-1zM510 712h1v1h-1zM545 712h1v1h-1zM615 712h1v1h-1zM650 712h1v1h-1zM685 712h1v1h-1zM720 712h1v1h-1zM790 712h1v1h-1zM825 712h1v1h-1zM859 712h1v1h-1zM894 712h1v1h-1zM964 712h1v1h-1zM999 712h1v1h-1zM1034 712h1v1h-1zM1069 712h1v1h-1zM1139 712h1v1h-1zM1174 712h1v1h-1zM1209 712h1v1h-1zM1244 712h1v1h-1zM1314 712h1v1h-1zM1349 712h1v1h-1zM1384 712h1v1h-1zM1419 712h1v1h-1zM1489 712h1v1h-1zM1524 712h1v1h-1zM1559 712h1v1h-1zM1594 712h1v1h-1zM1664 712h1v1h-1zM1699 712h1v1h-1zM1733 712h1v1h-1zM20 723h1v1h-1zM90 723h1v1h-1zM125 723h1v1h-1zM160 723h1v1h-1zM195 723h1v1h-1zM265 723h1v1h-1zM300 723h1v1h-1zM335 723h1v1h-1zM370 723h1v1h-1zM440 723h1v1h-1zM475 723h1v1h-1zM510 723h1v1h-1zM545 723h1v1h-1zM615 723h1v1h-1zM650 723h1v1h-1zM685 723h1v1h-1zM720 723h1v1h-1zM790 723h1v1h-1zM825 723h1v1h-1zM859 723h1v1h-1zM894 723h1v1h-1zM964 723h1v1h-1zM999 723h1v1h-1zM1034 723h1v1h-1zM1069 723h1v1h-1zM1139 723h1v1h-1zM1174 723h1v1h-1zM1209 723h1v1h-1zM1244 723h1v1h-1zM1314 723h1v1h-1zM1349 723h1v1h-1zM1384 723h1v1h-1zM1419 723h1v1h-1zM1489 723h1v1h-1zM1524 723h1v1h-1zM1559 723h1v1h-1zM1594 723h1v1h-1zM1664 723h1v1h-1zM1699 723h1v1h-1zM1733 723h1v1h-1zM20 735h1v1h-1zM90 735h1v1h-1zM125 735h1v1h-1zM160 735h1v1h-1zM195 735h1v1h-1zM265 735h1v1h-1zM300 735h1v1h-1zM335 735h1v1h-1zM370 735h1v1h-1zM440 735h1v1h-1zM475 735h1v1h-1zM510 735h1v1h-1zM545 735h1v1h-1zM615 735h1v1h-1zM650 735h1v1h-1zM685 735h1v1h-1zM720 735h1v1h-1zM790 735h1v1h-1zM825 735h1v1h-1zM859 735h1v1h-1zM894 735h1v1h-1zM964 735h1v1h-1zM999 735h1v1h-1zM1034 735h1v1h-1zM1069 735h1v1h-1zM1139 735h1v1h-1zM1174 735h1v1h-1zM1209 735h1v1h-1zM1244 735h1v1h-1zM1314 735h1v1h-1zM1349 735h1v1h-1zM1384 735h1v1h-1zM1419 735h1v1h-1zM1489 735h1v1h-1zM1524 735h1v1h-1zM1559 735h1v1h-1zM1594 735h1v1h-1zM1664 735h1v1h-1zM1699 735h1v1h-1zM1733 735h1v1h-1zM20 746h1v1h-1zM90 746h1v1h-1zM125 746h1v1h-1zM160 746h1v1h-1zM195 746h1v1h-1zM265 746h1v1h-1zM300 746h1v1h-1zM335 746h1v1h-1zM370 746h1v1h-1zM440 746h1v1h-1zM475 746h1v1h-1zM510 746h1v1h-1zM545 746h1v1h-1zM615 746h1v1h-1zM650 746h1v1h-1zM685 746h1v1h-1zM720 746h1v1h-1zM790 746h1v1h-1zM825 746h1v1h-1zM859 746h1v1h-1zM894 746h1v1h-1zM964 746h1v1h-1zM999 746h1v1h-1zM1034 746h1v1h-1zM1069 746h1v1h-1zM1139 746h1v1h-1zM1174 746h1v1h-1zM1209 746h1v1h-1zM1244 746h1v1h-1zM1314 746h1v1h-1zM1349 746h1v1h-1zM1384 746h1v1h-1zM1419 746h1v1h-1zM1489 746h1v1h-1zM1524 746h1v1h-1zM1559 746h1v1h-1zM1594 746h1v1h-1zM1664 746h1v1h-1zM1699 746h1v1h-1zM1733 746h1v1h-1zM20 760h1v1h-1zM90 760h1v1h-1zM125 760h1v1h-1zM160 760h1v1h-1zM195 760h1v1h-1zM265 760h1v1h-1zM300 760h1v1h-1zM335 760h1v1h-1zM370 760h1v1h-1zM440 760h1v1h-1zM475 760h1v1h-1zM510 760h1v1h-1zM545 760h1v1h-1zM615 760h1v1h-1zM650 760h1v1h-1zM685 760h1v1h-1zM720 760h1v1h-1zM790 760h1v1h-1zM825 760h1v1h-1zM859 760h1v1h-1zM894 760h1v1h-1zM964 760h1v1h-1zM999 760h1v1h-1zM1034 760h1v1h-1zM1069 760h1v1h-1zM1139 760h1v1h-1zM1174 760h1v1h-1zM1209 760h1v1h-1zM1244 760h1v1h-1zM1314 760h1v1h-1zM1349 760h1v1h-1zM1384 760h1v1h-1zM1419 760h1v1h-1zM1489 760h1v1h-1zM1524 760h1v1h-1zM1559 760h1v1h-1zM1594 760h1v1h-1zM1664 760h1v1h-1zM1699 760h1v1h-1zM1733 760h1v1h-1zM20 771h1v1h-1zM90 771h1v1h-1zM125 771h1v1h-1zM160 771h1v1h-1zM195 771h1v1h-1zM265 771h1v1h-1zM300 771h1v1h-1zM335 771h1v1h-1zM370 771h1v1h-1zM440 771h1v1h-1zM475 771h1v1h-1zM510 771h1v1h-1zM545 771h1v1h-1zM615 771h1v1h-1zM650 771h1v1h-1zM685 771h1v1h-1zM720 771h1v1h-1zM790 771h1v1h-1zM825 771h1v1h-1zM859 771h1v1h-1zM894 771h1v1h-1zM964 771h1v1h-1zM999 771h1v1h-1zM1034 771h1v1h-1zM1069 771h1v1h-1zM1139 771h1v1h-1zM1174 771h1v1h-1zM1209 771h1v1h-1zM1244 771h1v1h-1zM1314 771h1v1h-1zM1349 771h1v1h-1zM1384 771h1v1h-1zM1419 771h1v1h-1zM1489 771h1v1h-1zM1524 771h1v1h-1zM1559 771h1v1h-1zM1594 771h1v1h-1zM1664 771h1v1h-1zM1699 771h1v1h-1zM1733 771h1v1h-1zM20 783h1v1h-1zM90 783h1v1h-1zM125 783h1v1h-1zM160 783h1v1h-1zM195 783h1v1h-1zM265 783h1v1h-1zM300 783h1v1h-1zM335 783h1v1h-1zM370 783h1v1h-1zM440 783h1v1h-1zM475 783h1v1h-1zM510 783h1v1h-1zM545 783h1v1h-1zM615 783h1v1h-1zM650 783h1v1h-1zM685 783h1v1h-1zM720 783h1v1h-1zM790 783h1v1h-1zM825 783h1v1h-1zM859 783h1v1h-1zM894 783h1v1h-1zM964 783h1v1h-1zM999 783h1v1h-1zM1034 783h1v1h-1zM1069 783h1v1h-1zM1139 783h1v1h-1zM1174 783h1v1h-1zM1209 783h1v1h-1zM1244 783h1v1h-1zM1314 783h1v1h-1zM1349 783h1v1h-1zM1384 783h1v1h-1zM1419 783h1v1h-1zM1489 783h1v1h-1zM1524 783h1v1h-1zM1559 783h1v1h-1zM1594 783h1v1h-1zM1664 783h1v1h-1zM1699 783h1v1h-1zM1733 783h1v1h-1zM20 794h1v1h-1zM90 794h1v1h-1zM125 794h1v1h-1zM160 794h1v1h-1zM195 794h1v1h-1zM265 794h1v1h-1zM300 794h1v1h-1zM335 794h1v1h-1zM370 794h1v1h-1zM440 794h1v1h-1zM475 794h1v1h-1zM510 794h1v1h-1zM545 794h1v1h-1zM615 794h1v1h-1zM650 794h1v1h-1zM685 794h1v1h-1zM720 794h1v1h-1zM790 794h1v1h-1zM825 794h1v1h-1zM859 794h1v1h-1zM894 794h1v1h-1zM964 794h1v1h-1zM999 794h1v1h-1zM1034 794h1v1h-1zM1069 794h1v1h-1zM1139 794h1v1h-1zM1174 794h1v1h-1zM1209 794h1v1h-1zM1244 794h1v1h-1zM1314 794h1v1h-1zM1349 794h1v1h-1zM1384 794h1v1h-1zM1419 794h1v1h-1zM1489 794h1v1h-1zM1524 794h1v1h-1zM1559 794h1v1h-1zM1594 794h1v1h-1zM1664 794h1v1h-1zM1699 794h1v1h-1zM1733 794h1v1h-1zM20 806h1v1h-1zM90 806h1v1h-1zM125 806h1v1h-1zM160 806h1v1h-1zM195 806h1v1h-1zM265 806h1v1h-1zM300 806h1v1h-1zM335 806h1v1h-1zM370 806h1v1h-1zM440 806h1v1h-1zM475 806h1v1h-1zM510 806h1v1h-1zM545 806h1v1h-1zM615 806h1v1h-1zM650 806h1v1h-1zM685 806h1v1h-1zM720 806h1v1h-1zM790 806h1v1h-1zM825 806h1v1h-1zM859 806h1v1h-1zM894 806h1v1h-1zM964 806h1v1h-1zM999 806h1v1h-1zM1034 806h1v1h-1zM1069 806h1v1h-1zM1139 806h1v1h-1zM1174 806h1v1h-1zM1209 806h1v1h-1zM1244 806h1v1h-1zM1314 806h1v1h-1zM1349 806h1v1h-1zM1384 806h1v1h-1zM1419 806h1v1h-1zM1489 806h1v1h-1zM1524 806h1v1h-1zM1559 806h1v1h-1zM1594 806h1v1h-1zM1664 806h1v1h-1zM1699 806h1v1h-1zM1733 806h1v1h-1zM20 817h1v1h-1zM90 817h1v1h-1zM125 817h1v1h-1zM160 817h1v1h-1zM195 817h1v1h-1zM265 817h1v1h-1zM300 817h1v1h-1zM335 817h1v1h-1zM370 817h1v1h-1zM440 817h1v1h-1zM475 817h1v1h-1zM510 817h1v1h-1zM545 817h1v1h-1zM615 817h1v1h-1zM650 817h1v1h-1zM685 817h1v1h-1zM720 817h1v1h-1zM790 817h1v1h-1zM825 817h1v1h-1zM859 817h1v1h-1zM894 817h1v1h-1zM964 817h1v1h-1zM999 817h1v1h-1zM1034 817h1v1h-1zM1069 817h1v1h-1zM1139 817h1v1h-1zM1174 817h1v1h-1zM1209 817h1v1h-1zM1244 817h1v1h-1zM1314 817h1v1h-1zM1349 817h1v1h-1zM1384 817h1v1h-1zM1419 817h1v1h-1zM1489 817h1v1h-1zM1524 817h1v1h-1zM1559 817h1v1h-1zM1594 817h1v1h-1zM1664 817h1v1h-1zM1699 817h1v1h-1zM1733 817h1v1h-1zM20 829h1v1h-1zM90 829h1v1h-1zM125 829h1v1h-1zM160 829h1v1h-1zM195 829h1v1h-1zM265 829h1v1h-1zM300 829h1v1h-1zM335 829h1v1h-1zM370 829h1v1h-1zM440 829h1v1h-1zM475 829h1v1h-1zM510 829h1v1h-1zM545 829h1v1h-1zM615 829h1v1h-1zM650 829h1v1h-1zM685 829h1v1h-1zM720 829h1v1h-1zM790 829h1v1h-1zM825 829h1v1h-1zM859 829h1v1h-1zM894 829h1v1h-1zM964 829h1v1h-1zM999 829h1v1h-1zM1034 829h1v1h-1zM1069 829h1v1h-1zM1139 829h1v1h-1zM1174 829h1v1h-1zM1209 829h1v1h-1zM1244 829h1v1h-1zM1314 829h1v1h-1zM1349 829h1v1h-1zM1384 829h1v1h-1zM1419 829h1v1h-1zM1489 829h1v1h-1zM1524 829h1v1h-1zM1559 829h1v1h-1zM1594 829h1v1h-1zM1664 829h1v1h-1zM1699 829h1v1h-1zM1733 829h1v1h-1zM20 840h1v1h-1zM90 840h1v1h-1zM125 840h1v1h-1zM160 840h1v1h-1zM195 840h1v1h-1zM265 840h1v1h-1zM300 840h1v1h-1zM335 840h1v1h-1zM370 840h1v1h-1zM440 840h1v1h-1zM475 840h1v1h-1zM510 840h1v1h-1zM545 840h1v1h-1zM615 840h1v1h-1zM650 840h1v1h-1zM685 840h1v1h-1zM720 840h1v1h-1zM790 840h1v1h-1zM825 840h1v1h-1zM859 840h1v1h-1zM894 840h1v1h-1zM964 840h1v1h-1zM999 840h1v1h-1zM1034 840h1v1h-1zM1069 840h1v1h-1zM1139 840h1v1h-1zM1174 840h1v1h-1zM1209 840h1v1h-1zM1244 840h1v1h-1zM1314 840h1v1h-1zM1349 840h1v1h-1zM1384 840h1v1h-1zM1419 840h1v1h-1zM1489 840h1v1h-1zM1524 840h1v1h-1zM1559 840h1v1h-1zM1594 840h1v1h-1zM1664 840h1v1h-1zM1699 840h1v1h-1zM1733 840h1v1h-1zM20 852h1v1h-1zM90 852h1v1h-1zM125 852h1v1h-1zM160 852h1v1h-1zM195 852h1v1h-1zM265 852h1v1h-1zM300 852h1v1h-1zM335 852h1v1h-1zM370 852h1v1h-1zM440 852h1v1h-1zM475 852h1v1h-1zM510 852h1v1h-1zM545 852h1v1h-1zM615 852h1v1h-1zM650 852h1v1h-1zM685 852h1v1h-1zM720 852h1v1h-1zM790 852h1v1h-1zM825 852h1v1h-1zM859 852h1v1h-1zM894 852h1v1h-1zM964 852h1v1h-1zM999 852h1v1h-1zM1034 852h1v1h-1zM1069 852h1v1h-1zM1139 852h1v1h-1zM1174 852h1v1h-1zM1209 852h1v1h-1zM1244 852h1v1h-1zM1314 852h1v1h-1zM1349 852h1v1h-1zM1384 852h1v1h-1zM1419 852h1v1h-1zM1489 852h1v1h-1zM1524 852h1v1h-1zM1559 852h1v1h-1zM1594 852h1v1h-1zM1664 852h1v1h-1zM1699 852h1v1h-1zM1733 852h1v1h-1zM20 863h1v1h-1zM90 863h1v1h-1zM125 863h1v1h-1zM160 863h1v1h-1zM195 863h1v1h-1zM265 863h1v1h-1zM300 863h1v1h-1zM335 863h1v1h-1zM370 863h1v1h-1zM440 863h1v1h-1zM475 863h1v1h-1zM510 863h1v1h-1zM545 863h1v1h-1zM615 863h1v1h-1zM650 863h1v1h-1zM685 863h1v1h-1zM720 863h1v1h-1zM790 863h1v1h-1zM825 863h1v1h-1zM859 863h1v1h-1zM894 863h1v1h-1zM964 863h1v1h-1zM999 863h1v1h-1zM1034 863h1v1h-1zM1069 863h1v1h-1zM1139 863h1v1h-1zM1174 863h1v1h-1zM1209 863h1v1h-1zM1244 863h1v1h-1zM1314 863h1v1h-1zM1349 863h1v1h-1zM1384 863h1v1h-1zM1419 863h1v1h-1zM1489 863h1v1h-1zM1524 863h1v1h-1zM1559 863h1v1h-1zM1594 863h1v1h-1zM1664 863h1v1h-1zM1699 863h1v1h-1zM1733 863h1v1h-1zM20 874h1v1h-1zM90 874h1v1h-1zM125 874h1v1h-1zM160 874h1v1h-1zM195 874h1v1h-1zM265 874h1v1h-1zM300 874h1v1h-1zM335 874h1v1h-1zM370 874h1v1h-1zM440 874h1v1h-1zM475 874h1v1h-1zM510 874h1v1h-1zM545 874h1v1h-1zM615 874h1v1h-1zM650 874h1v1h-1zM685 874h1v1h-1zM720 874h1v1h-1zM790 874h1v1h-1zM825 874h1v1h-1zM859 874h1v1h-1zM894 874h1v1h-1zM964 874h1v1h-1zM999 874h1v1h-1zM1034 874h1v1h-1zM1069 874h1v1h-1zM1139 874h1v1h-1zM1174 874h1v1h-1zM1209 874h1v1h-1zM1244 874h1v1h-1zM1314 874h1v1h-1zM1349 874h1v1h-1zM1384 874h1v1h-1zM1419 874h1v1h-1zM1489 874h1v1h-1zM1524 874h1v1h-1zM1559 874h1v1h-1zM1594 874h1v1h-1zM1664 874h1v1h-1zM1699 874h1v1h-1zM1733 874h1v1h-1zM20 886h1v1h-1zM90 886h1v1h-1zM125 886h1v1h-1zM160 886h1v1h-1zM195 886h1v1h-1zM265 886h1v1h-1zM300 886h1v1h-1zM335 886h1v1h-1zM370 886h1v1h-1zM440 886h1v1h-1zM475 886h1v1h-1zM510 886h1v1h-1zM545 886h1v1h-1zM615 886h1v1h-1zM650 886h1v1h-1zM685 886h1v1h-1zM720 886h1v1h-1zM790 886h1v1h-1zM825 886h1v1h-1zM859 886h1v1h-1zM894 886h1v1h-1zM964 886h1v1h-1zM999 886h1v1h-1zM1034 886h1v1h-1zM1069 886h1v1h-1zM1139 886h1v1h-1zM1174 886h1v1h-1zM1209 886h1v1h-1zM1244 886h1v1h-1zM1314 886h1v1h-1zM1349 886h1v1h-1zM1384 886h1v1h-1zM1419 886h1v1h-1zM1489 886h1v1h-1zM1524 886h1v1h-1zM1559 886h1v1h-1zM1594 886h1v1h-1zM1664 886h1v1h-1zM1699 886h1v1h-1zM1733 886h1v1h-1zM20 897h1v1h-1zM90 897h1v1h-1zM125 897h1v1h-1zM160 897h1v1h-1zM195 897h1v1h-1zM265 897h1v1h-1zM300 897h1v1h-1zM335 897h1v1h-1zM370 897h1v1h-1zM440 897h1v1h-1zM475 897h1v1h-1zM510 897h1v1h-1zM545 897h1v1h-1zM615 897h1v1h-1zM650 897h1v1h-1zM685 897h1v1h-1zM720 897h1v1h-1zM790 897h1v1h-1zM825 897h1v1h-1zM859 897h1v1h-1zM894 897h1v1h-1zM964 897h1v1h-1zM999 897h1v1h-1zM1034 897h1v1h-1zM1069 897h1v1h-1zM1139 897h1v1h-1zM1174 897h1v1h-1zM1209 897h1v1h-1zM1244 897h1v1h-1zM1314 897h1v1h-1zM1349 897h1v1h-1zM1384 897h1v1h-1zM1419 897h1v1h-1zM1489 897h1v1h-1zM1524 897h1v1h-1zM1559 897h1v1h-1zM1594 897h1v1h-1zM1664 897h1v1h-1zM1699 897h1v1h-1zM1733 897h1v1h-1zM20 909h1v1h-1zM90 909h1v1h-1zM125 909h1v1h-1zM160 909h1v1h-1zM195 909h1v1h-1zM265 909h1v1h-1zM300 909h1v1h-1zM335 909h1v1h-1zM370 909h1v1h-1zM440 909h1v1h-1zM475 909h1v1h-1zM510 909h1v1h-1zM545 909h1v1h-1zM615 909h1v1h-1zM650 909h1v1h-1zM685 909h1v1h-1zM720 909h1v1h-1zM790 909h1v1h-1zM825 909h1v1h-1zM859 909h1v1h-1zM894 909h1v1h-1zM964 909h1v1h-1zM999 909h1v1h-1zM1034 909h1v1h-1zM1069 909h1v1h-1zM1139 909h1v1h-1zM1174 909h1v1h-1zM1209 909h1v1h-1zM1244 909h1v1h-1zM1314 909h1v1h-1zM1349 909h1v1h-1zM1384 909h1v1h-1zM1419 909h1v1h-1zM1489 909h1v1h-1zM1524 909h1v1h-1zM1559 909h1v1h-1zM1594 909h1v1h-1zM1664 909h1v1h-1zM1699 909h1v1h-1zM1733 909h1v1h-1zM20 921h1v1h-1zM90 921h1v1h-1zM125 921h1v1h-1zM160 921h1v1h-1zM195 921h1v1h-1zM265 921h1v1h-1zM300 921h1v1h-1zM335 921h1v1h-1zM370 921h1v1h-1zM440 921h1v1h-1zM475 921h1v1h-1zM510 921h1v1h-1zM545 921h1v1h-1zM615 921h1v1h-1zM650 921h1v1h-1zM685 921h1v1h-1zM720 921h1v1h-1zM790 921h1v1h-1zM825 921h1v1h-1zM859 921h1v1h-1zM894 921h1v1h-1zM964 921h1v1h-1zM999 921h1v1h-1zM1034 921h1v1h-1zM1069 921h1v1h-1zM1139 921h1v1h-1zM1174 921h1v1h-1zM1209 921h1v1h-1zM1244 921h1v1h-1zM1314 921h1v1h-1zM1349 921h1v1h-1zM1384 921h1v1h-1zM1419 921h1v1h-1zM1489 921h1v1h-1zM1524 921h1v1h-1zM1559 921h1v1h-1zM1594 921h1v1h-1zM1664 921h1v1h-1zM1699 921h1v1h-1zM1733 921h1v1h-1zM20 932h1v1h-1zM90 932h1v1h-1zM125 932h1v1h-1zM160 932h1v1h-1zM195 932h1v1h-1zM265 932h1v1h-1zM300 932h1v1h-1zM335 932h1v1h-1zM370 932h1v1h-1zM440 932h1v1h-1zM475 932h1v1h-1zM510 932h1v1h-1zM545 932h1v1h-1zM615 932h1v1h-1zM650 932h1v1h-1zM685 932h1v1h-1zM720 932h1v1h-1zM790 932h1v1h-1zM825 932h1v1h-1zM859 932h1v1h-1zM894 932h1v1h-1zM964 932h1v1h-1zM999 932h1v1h-1zM1034 932h1v1h-1zM1069 932h1v1h-1zM1139 932h1v1h-1zM1174 932h1v1h-1zM1209 932h1v1h-1zM1244 932h1v1h-1zM1314 932h1v1h-1zM1349 932h1v1h-1zM1384 932h1v1h-1zM1419 932h1v1h-1zM1489 932h1v1h-1zM1524 932h1v1h-1zM1559 932h1v1h-1zM1594 932h1v1h-1zM1664 932h1v1h-1zM1699 932h1v1h-1zM1733 932h1v1h-1zM20 944h1v1h-1zM90 944h1v1h-1zM125 944h1v1h-1zM160 944h1v1h-1zM195 944h1v1h-1zM265 944h1v1h-1zM300 944h1v1h-1zM335 944h1v1h-1zM370 944h1v1h-1zM440 944h1v1h-1zM475 944h1v1h-1zM510 944h1v1h-1zM545 944h1v1h-1zM615 944h1v1h-1zM650 944h1v1h-1zM685 944h1v1h-1zM720 944h1v1h-1zM790 944h1v1h-1zM825 944h1v1h-1zM859 944h1v1h-1zM894 944h1v1h-1zM964 944h1v1h-1zM999 944h1v1h-1zM1034 944h1v1h-1zM1069 944h1v1h-1zM1139 944h1v1h-1zM1174 944h1v1h-1zM1209 944h1v1h-1zM1244 944h1v1h-1zM1314 944h1v1h-1zM1349 944h1v1h-1zM1384 944h1v1h-1zM1419 944h1v1h-1zM1489 944h1v1h-1zM1524 944h1v1h-1zM1559 944h1v1h-1zM1594 944h1v1h-1zM1664 944h1v1h-1zM1699 944h1v1h-1zM1733 944h1v1h-1zM20 955h1v1h-1zM90 955h1v1h-1zM125 955h1v1h-1zM160 955h1v1h-1zM195 955h1v1h-1zM265 955h1v1h-1zM300 955h1v1h-1zM335 955h1v1h-1zM370 955h1v1h-1zM440 955h1v1h-1zM475 955h1v1h-1zM510 955h1v1h-1zM545 955h1v1h-1zM615 955h1v1h-1zM650 955h1v1h-1zM685 955h1v1h-1zM720 955h1v1h-1zM790 955h1v1h-1zM825 955h1v1h-1zM859 955h1v1h-1zM894 955h1v1h-1zM964 955h1v1h-1zM999 955h1v1h-1zM1034 955h1v1h-1zM1069 955h1v1h-1zM1139 955h1v1h-1zM1174 955h1v1h-1zM1209 955h1v1h-1zM1244 955h1v1h-1zM1314 955h1v1h-1zM1349 955h1v1h-1zM1384 955h1v1h-1zM1419 955h1v1h-1zM1489 955h1v1h-1zM1524 955h1v1h-1zM1559 955h1v1h-1zM1594 955h1v1h-1zM1664 955h1v1h-1zM1699 955h1v1h-1zM1733 955h1v1h-1zM20 967h1v1h-1zM90 967h1v1h-1zM125 967h1v1h-1zM160 967h1v1h-1zM195 967h1v1h-1zM265 967h1v1h-1zM300 967h1v1h-1zM335 967h1v1h-1zM370 967h1v1h-1zM440 967h1v1h-1zM475 967h1v1h-1zM510 967h1v1h-1zM545 967h1v1h-1zM615 967h1v1h-1zM650 967h1v1h-1zM685 967h1v1h-1zM720 967h1v1h-1zM790 967h1v1h-1zM825 967h1v1h-1zM859 967h1v1h-1zM894 967h1v1h-1zM964 967h1v1h-1zM999 967h1v1h-1zM1034 967h1v1h-1zM1069 967h1v1h-1zM1139 967h1v1h-1zM1174 967h1v1h-1zM1209 967h1v1h-1zM1244 967h1v1h-1zM1314 967h1v1h-1zM1349 967h1v1h-1zM1384 967h1v1h-1zM1419 967h1v1h-1zM1489 967h1v1h-1zM1524 967h1v1h-1zM1559 967h1v1h-1zM1594 967h1v1h-1zM1664 967h1v1h-1zM1699 967h1v1h-1zM1733 967h1v1h-1zM20 978h1v1h-1zM90 978h1v1h-1zM125 978h1v1h-1zM160 978h1v1h-1zM195 978h1v1h-1zM265 978h1v1h-1zM300 978h1v1h-1zM335 978h1v1h-1zM370 978h1v1h-1zM440 978h1v1h-1zM475 978h1v1h-1zM510 978h1v1h-1zM545 978h1v1h-1zM615 978h1v1h-1zM650 978h1v1h-1zM685 978h1v1h-1zM720 978h1v1h-1zM790 978h1v1h-1zM825 978h1v1h-1zM859 978h1v1h-1zM894 978h1v1h-1zM964 978h1v1h-1zM999 978h1v1h-1zM1034 978h1v1h-1zM1069 978h1v1h-1zM1139 978h1v1h-1zM1174 978h1v1h-1zM1209 978h1v1h-1zM1244 978h1v1h-1zM1314 978h1v1h-1zM1349 978h1v1h-1zM1384 978h1v1h-1zM1419 978h1v1h-1zM1489 978h1v1h-1zM1524 978h1v1h-1zM1559 978h1v1h-1zM1594 978h1v1h-1zM1664 978h1v1h-1zM1699 978h1v1h-1zM1733 978h1v1h-1z" fill="#555"/>
<line x1="230.5" y1="58" x2="230.5" y2="995" stroke="#555" stroke-width="1" stroke-dasharray="1 1"/>
<line x1="405.5" y1="58" x2="405.5" y2="995" stroke="#555" stroke-width="1" stroke-dasharray="1 1"/>
<line x1="580.5" y1="58" x2="580.5" y2="995" stroke="#555" stroke-width="1" stroke-dasharray="1 1"/>
<line x1="755.5" y1="58" x2="755.5" y2="995" stroke="#555" stroke-width="1" stroke-dasharray="1 1"/>
<line x1="929.5" y1="58" x2="929.5" y2="995" stroke="#555" stroke-width="1" stroke-dasharray="1 1"/>
<line x1="1104.5" y1="58" x2="1104.5" y2="995" stroke="#555" stroke-width="1" stroke-dasharray="1 1"/>
<line x1="1279.5" y1="58" x2="1279.5" y2="995" stroke="#555" stroke-width="1" stroke-dasharray="1 1"/>
<line x1="1454.5" y1="58" x2="1454.5" y2="995" stroke="#555" stroke-width="1" stroke-dasharray="1 1"/>
<line x1="1629.5" y1="58" x2="1629.5" y2="995" stroke="#555" stroke-width="1" stroke-dasharray="1 1"/>
<rect x="3" y="742.5" width="1748" height="15" fill="#fff"/>
<line x1="55.5" y1="58" x2="55.5" y2="995" stroke="#444" stroke-width="1.1" stroke-dasharray="5 5" stroke-dashoffset="-1"/>
<rect x="3" y="173" width="1748" height="2" fill="#5a5a5a"/>
<rect x="3" y="290" width="1748" height="2" fill="#5a5a5a"/>
<rect x="3" y="407" width="1748" height="2" fill="#5a5a5a"/>
<rect x="3" y="524" width="1748" height="2" fill="#5a5a5a"/>
<rect x="3" y="641" width="1748" height="2" fill="#5a5a5a"/>
<rect x="3" y="758" width="1748" height="2" fill="#5a5a5a"/>
<rect x="3" y="875" width="1748" height="2" fill="#5a5a5a"/>
</g>
<g clip-path="url(#pc)">
<line x1="3" y1="478.3" x2="1720" y2="478.3" stroke="#444" stroke-width="1.2" stroke-dasharray="5 5"/>
<path d="M3.0 160.6 L4.5 160.6 L6.0 160.6 L7.6 160.6 L9.1 160.6 L10.6 160.6 L12.1 160.6 L13.7 160.6 L15.2 160.6 L16.7 160.6 L18.2 160.6 L19.8 160.6 L21.3 160.6 L22.8 160.6 L24.3 160.6 L25.8 160.6 L27.4 160.6 L28.9 160.6 L30.4 160.6 L31.9 160.6 L33.5 160.6 L35.0 160.6 L36.5 160.6 L38.0 160.6 L39.6 160.6 L41.1 160.6 L42.6 160.6 L44.1 160.6 L45.6 160.6 L47.2 160.6 L48.7 160.6 L50.2 160.6 L51.7 160.6 L53.3 160.6 L54.8 160.6 L56.3 160.6 L57.8 160.6 L59.4 160.6 L60.9 160.6 L62.4 160.6 L63.9 160.6 L65.4 160.6 L67.0 160.6 L68.5 160.6 L70.0 160.6 L71.5 160.6 L73.1 160.6 L74.6 160.6 L76.1 160.6 L77.6 160.6 L79.2 160.6 L80.7 160.6 L82.2 160.6 L83.0 156.7 L85.0 155.9 L86.9 155.2 L88.5 154.4 L90.0 153.6 L91.6 152.9 L93.1 152.1 L94.7 151.3 L96.3 150.9 L97.8 150.5 L99.4 150.1 L100.9 149.8 L102.5 149.4 L104.0 149.0 L105.6 148.6 L107.2 148.2 L108.7 147.9 L110.3 147.5 L111.9 147.1 L113.4 146.8 L115.0 146.4 L116.6 146.0 L118.1 145.7 L119.7 145.3 L121.3 144.9 L122.8 144.6 L124.4 144.2 L126.0 143.9 L127.5 143.6 L129.1 143.3 L130.6 143.1 L132.2 142.8 L133.8 142.5 L135.3 142.2 L136.9 141.9 L138.4 141.7 L140.0 141.4 L141.5 141.1 L143.1 140.8 L144.7 140.7 L146.2 140.5 L147.8 140.4 L149.4 140.2 L150.9 140.1 L152.5 139.9 L154.0 139.8 L155.6 139.6 L157.2 139.5 L158.7 139.3 L160.3 139.2 L161.9 139.1 L163.4 139.0 L165.0 138.9 L166.6 138.8 L168.1 138.6 L169.7 138.5 L171.2 138.4 L172.8 138.3 L174.4 138.2 L175.9 138.1 L177.5 138.0 L179.1 137.9 L180.6 137.9 L182.2 137.8 L183.8 137.7 L185.3 137.6 L186.9 137.5 L188.5 137.5 L190.0 137.5 L191.6 137.5 L193.1 137.5 L194.7 137.5 L196.2 137.5 L197.8 137.5 L199.3 137.5 L200.9 137.5 L202.4 137.5 L204.0 137.5 L205.6 138.0 L207.1 138.4 L208.7 138.9 L210.3 139.4 L211.9 139.9 L213.4 140.3 L215.0 140.8 L216.6 141.0 L218.1 141.2 L219.7 141.4 L221.2 141.6 L222.8 141.7 L224.4 141.9 L225.9 142.1 L227.5 142.3 L229.1 142.4 L230.6 142.5 L232.2 142.6 L233.7 142.7 L235.2 142.9 L236.8 143.0 L238.3 143.1 L239.9 143.2 L241.4 143.3 L243.0 143.4 L244.6 143.6 L246.2 143.8 L247.7 144.1 L249.3 144.3 L250.9 144.5 L252.4 144.8 L254.0 145.0 L255.6 145.2 L257.2 145.4 L258.8 145.7 L260.3 145.9 L261.9 146.1 L263.4 146.1 L264.9 146.1 L266.4 146.1 L267.9 146.1 L269.4 146.0 L270.9 146.0 L272.4 146.0 L274.0 146.0 L275.5 146.0 L277.0 146.0 L278.5 146.0 L280.0 146.0 L281.5 146.0 L283.0 146.0 L284.5 145.9 L286.0 145.9 L287.5 145.9 L289.0 145.9 L290.5 145.9 L292.0 145.9 L293.5 145.9 L295.1 145.9 L296.6 145.9 L298.1 145.9 L299.6 145.8 L301.1 145.6 L302.6 145.4 L304.1 146.0 L305.6 145.8 L307.2 145.4 L308.7 145.9 L310.3 145.7 L311.9 145.4 L313.4 145.9 L315.0 145.4 L316.5 145.9 L318.1 145.5 L319.7 145.6 L321.2 145.9 L322.8 146.4 L324.4 145.7 L325.9 145.8 L327.5 146.3 L329.1 146.6 L330.6 146.2 L332.2 146.1 L333.7 146.7 L335.3 145.7 L336.9 146.6 L338.4 146.0 L340.0 146.3 L341.5 145.9 L343.0 145.8 L344.5 146.0 L346.0 146.6 L347.5 145.8 L349.0 146.3 L350.5 146.3 L352.0 146.0 L353.5 146.2 L355.0 145.6 L356.5 145.6 L358.0 145.7 L359.5 146.2 L361.0 145.9 L362.5 145.8 L364.0 146.1 L365.5 145.9 L367.0 145.7 L368.5 146.2 L370.0 146.1 L371.5 145.6 L373.0 145.9 L374.5 145.9 L376.0 146.2 L377.5 146.1 L379.0 145.5 L380.5 146.3 L382.0 145.3 L383.5 145.6 L385.0 146.0 L386.5 145.3 L388.0 145.6 L389.5 145.1 L391.0 145.8 L392.5 145.9 L394.0 145.7 L395.5 146.0 L397.0 145.3 L398.5 145.7 L400.0 145.5 L401.5 145.6 L403.0 145.6 L404.5 145.5 L406.0 145.9 L407.5 146.0 L409.0 145.5 L410.5 145.7 L412.0 145.0 L413.5 145.7 L415.1 145.7 L416.6 146.0 L418.1 145.9 L419.6 145.3 L421.1 145.4 L422.6 145.7 L424.1 145.0 L425.6 145.5 L427.1 145.1 L428.6 145.1 L430.1 145.0 L431.6 145.8 L433.1 145.1 L434.6 145.2 L436.1 145.4 L437.6 145.9 L439.1 145.0 L440.6 145.4 L442.2 145.6 L443.7 145.9 L445.2 145.9 L446.7 145.9 L448.2 145.3 L449.7 145.4 L451.2 145.3 L452.7 145.9 L454.2 146.0 L455.7 145.1 L457.2 145.1 L458.7 145.2 L460.2 145.2 L461.7 145.5 L463.2 145.6 L464.7 145.2 L466.2 145.0 L467.7 145.4 L469.2 145.4 L470.8 145.6 L472.3 146.0 L473.8 145.7 L475.3 145.5 L476.8 145.6 L478.3 145.7 L479.8 145.0 L481.3 145.9 L482.8 145.8 L484.3 145.9 L485.8 145.8 L487.3 145.4 L488.8 145.4 L490.3 145.1 L491.8 145.6 L493.3 145.0 L494.8 145.0 L496.3 145.2 L497.8 145.1 L499.4 145.3 L500.9 145.0 L502.4 145.0 L503.9 145.1 L505.4 145.1 L506.9 145.3 L508.4 145.0 L509.9 145.9 L511.4 145.6 L512.9 145.1 L514.4 145.2 L515.9 145.3 L517.4 145.4 L518.9 145.1 L520.4 145.9 L521.9 146.0 L523.4 145.5 L524.9 145.5 L526.5 145.0 L528.0 145.1 L529.5 145.3 L531.0 145.2 L532.5 145.9 L534.0 145.1 L535.5 145.0 L537.0 146.0 L538.5 145.5 L540.0 145.5 L541.5 145.0 L543.1 145.4 L544.6 144.7 L546.2 145.2 L547.7 145.6 L549.2 145.4 L550.8 145.2 L552.3 144.6 L553.8 144.7 L555.4 144.4 L556.9 145.0 L558.5 144.6 L560.0 144.5 L561.5 144.8 L563.0 144.4 L564.5 144.3 L566.0 144.9 L567.5 145.2 L569.0 145.0 L570.5 145.0 L572.0 145.1 L573.5 145.0 L575.0 144.4 L576.5 144.8 L578.0 144.6 L579.5 144.3 L581.0 144.3 L582.5 144.6 L584.0 144.6 L585.5 145.1 L587.0 145.5 L588.5 144.9 L590.0 145.5 L591.5 145.6 L593.0 145.6 L594.5 144.9 L596.0 144.8 L597.5 144.8 L599.0 144.8 L600.5 144.8 L602.0 145.3 L603.5 145.7 L605.0 145.6 L606.5 145.3 L608.0 145.5 L609.5 145.7 L611.0 144.9 L612.5 145.6 L614.0 145.9 L615.5 145.7 L617.0 145.7 L618.5 145.5 L620.0 145.5 L621.5 145.1 L623.0 145.8 L624.5 145.3 L626.0 145.8 L627.5 146.0 L629.0 145.3 L630.5 145.3 L632.0 145.9 L633.5 145.7 L635.0 145.1 L636.5 145.0 L638.0 145.0 L639.5 145.9 L641.0 145.7 L642.5 145.0 L644.0 145.8 L645.5 145.9 L647.0 145.6 L648.5 145.2 L650.0 145.4 L651.5 145.0 L653.0 144.8 L654.5 145.9 L656.0 145.5 L657.5 145.4 L659.0 145.8 L660.5 145.3 L662.0 145.7 L663.5 145.7 L665.0 145.0 L666.5 145.0 L668.0 145.1 L669.5 145.0 L671.0 145.4 L672.5 145.0 L674.0 145.2 L675.5 144.9 L677.0 145.7 L678.5 145.1 L680.0 145.2 L681.5 145.3 L683.0 145.7 L684.5 145.1 L686.0 145.7 L687.5 145.2 L689.0 145.2 L690.5 145.2 L692.0 144.7 L693.5 145.1 L695.0 144.8 L696.5 144.6 L698.0 145.5 L699.5 144.8 L701.0 145.1 L702.5 145.4 L704.0 145.2 L705.5 145.0 L707.0 145.2 L708.5 145.2 L710.0 145.4 L711.5 144.7 L713.0 145.2 L714.5 144.8 L716.0 144.9 L717.5 145.4 L719.0 145.1 L720.5 145.1 L722.0 145.4 L723.5 145.5 L725.0 145.0 L726.5 145.2 L728.0 145.1 L729.5 145.1 L731.0 145.2 L732.5 145.0 L734.0 145.1 L735.5 145.0 L737.0 145.5 L738.5 145.2 L740.0 145.0 L741.5 145.6 L743.1 145.9 L744.6 145.4 L746.2 146.0 L747.7 146.6 L749.2 146.8 L750.8 146.2 L752.3 146.4 L753.8 147.0 L755.4 146.8 L756.9 147.3 L758.5 147.3 L760.0 148.0 L761.5 148.1 L763.0 148.2 L764.5 148.2 L766.0 147.3 L767.5 147.9 L769.0 147.7 L770.5 147.1 L772.0 147.8 L773.5 147.8 L775.0 146.9 L776.5 147.7 L778.0 147.0 L779.5 147.0 L781.0 147.5 L782.5 147.2 L784.0 146.4 L785.5 146.6 L787.0 146.7 L788.5 146.4 L790.0 146.5 L791.5 146.2 L793.0 146.4 L794.5 146.9 L796.0 146.2 L797.5 146.8 L799.0 146.7 L800.5 146.3 L802.0 146.7 L803.5 147.1 L805.0 147.0 L806.5 146.6 L808.0 147.6 L809.5 147.5 L811.0 147.7 L812.5 146.8 L814.0 147.0 L815.5 146.8 L817.0 147.7 L818.5 147.2 L820.0 147.5 L821.5 147.1 L823.1 147.4 L824.6 147.9 L826.2 147.8 L827.7 147.1 L829.2 147.0 L830.8 147.8 L832.3 147.4 L833.8 147.5 L835.4 146.9 L836.9 146.8 L838.5 147.5 L840.0 147.2 L841.5 146.8 L843.1 147.7 L844.6 147.3 L846.2 147.5 L847.7 146.7 L849.2 147.5 L850.8 146.6 L852.3 147.5 L853.8 147.0 L855.4 146.9 L856.9 147.1 L858.5 147.5 L860.0 147.0 L861.5 146.3 L863.1 145.7 L864.6 145.8 L866.2 145.0 L867.7 144.5 L869.2 144.1 L870.8 143.5 L872.3 143.3 L873.8 143.0 L875.4 142.6 L876.9 142.6 L878.5 141.7 L880.0 141.5 L881.5 142.1 L883.0 142.4 L884.5 143.2 L886.0 144.0 L887.8 143.0 L889.5 142.7 L891.2 142.0 L893.0 142.0 L894.5 143.0 L896.0 143.6 L897.5 143.9 L899.0 145.0 L900.5 146.2 L902.0 146.1 L903.5 147.6 L905.0 148.0 L906.6 148.1 L908.1 148.2 L909.7 148.7 L911.2 148.4 L912.8 148.6 L914.4 149.0 L915.9 149.4 L917.5 148.8 L919.1 149.5 L920.6 149.5 L922.2 149.5 L923.8 149.4 L925.3 149.5 L926.9 149.3 L928.4 149.5 L930.0 150.0 L931.5 149.6 L933.0 150.3 L934.5 149.8 L936.0 149.7 L937.5 149.7 L939.0 150.5 L940.5 150.6 L942.0 150.4 L943.5 150.0 L945.0 150.0 L946.5 150.0 L948.0 150.3 L949.5 149.9 L951.0 150.3 L952.5 150.1 L954.0 150.9 L955.5 150.9 L957.0 150.5 L958.5 150.2 L960.0 150.5 L961.5 151.1 L963.0 150.4 L964.5 150.5 L966.0 150.2 L967.5 150.6 L969.0 150.8 L970.5 150.9 L972.0 150.6 L973.5 151.0 L975.0 151.0 L976.5 151.7 L978.0 153.5 L979.5 153.2 L981.0 153.0 L982.5 153.3 L984.0 152.9 L985.5 152.8 L987.0 153.1 L988.5 153.0 L990.0 153.3 L991.5 153.2 L993.0 153.4 L994.5 153.3 L996.0 153.3 L997.5 153.5 L999.0 152.9 L1000.5 152.8 L1002.0 153.5 L1003.5 152.5 L1005.0 153.1 L1006.5 153.0 L1008.0 152.3 L1009.5 153.1 L1011.0 153.1 L1012.5 152.8 L1014.0 152.9 L1015.5 153.0 L1017.0 152.2 L1018.5 152.6 L1020.0 152.5 L1021.7 151.8 L1023.3 151.5 L1025.0 150.5 L1026.5 150.8 L1028.0 150.9 L1029.6 150.6 L1031.1 150.9 L1032.6 150.7 L1034.1 150.7 L1035.7 150.2 L1037.2 150.0 L1038.7 150.1 L1040.2 150.3 L1041.7 150.1 L1043.3 150.9 L1044.8 150.6 L1046.3 150.6 L1047.8 150.6 L1049.3 150.7 L1050.9 150.5 L1052.4 150.0 L1053.9 150.8 L1055.4 150.8 L1057.0 150.5 L1058.5 150.5 L1060.0 150.5 L1061.5 150.6 L1063.1 149.9 L1064.6 150.6 L1066.2 150.0 L1067.7 149.7 L1069.2 149.8 L1070.8 150.3 L1072.3 149.6 L1073.8 150.1 L1075.4 150.3 L1076.9 149.7 L1078.5 149.5 L1080.0 149.6 L1081.5 149.7 L1083.1 150.1 L1084.6 150.4 L1086.1 150.4 L1087.7 150.6 L1089.2 150.6 L1090.7 149.1 L1092.2 148.2 L1093.7 147.6 L1095.4 147.2 L1097.1 147.6 L1098.7 147.0 L1100.4 147.1 L1100.9 154.2 L1101.4 132.3 L1102.6 116.5 L1103.9 105.3 L1105.0 92.6 L1106.5 87.5 L1108.3 83.9 L1108.7 78.3 L1110.5 73.7 L1112.0 76.0 L1113.6 78.3 L1115.7 82.4 L1117.7 86.5 L1119.4 91.9 L1121.1 97.4 L1122.8 102.8 L1124.8 108.4 L1126.8 114.0 L1128.8 119.1 L1130.9 124.2 L1132.4 127.2 L1134.0 130.3 L1135.5 133.3 L1137.0 136.4 L1138.5 137.9 L1140.1 139.4 L1141.6 140.9 L1143.1 142.5 L1144.7 144.0 L1146.2 145.5 L1148.0 146.5 L1149.8 147.6 L1151.5 148.6 L1153.3 149.6 L1154.9 150.1 L1156.6 150.6 L1158.2 151.2 L1159.9 151.7 L1161.5 152.2 L1163.2 152.5 L1164.9 152.9 L1166.6 153.2 L1168.3 153.5 L1170.0 153.9 L1171.7 154.2 L1173.4 154.4 L1175.1 154.5 L1176.8 154.7 L1178.4 154.9 L1180.1 155.0 L1181.8 155.2 L1183.5 155.4 L1185.2 155.5 L1186.9 155.7 L1188.6 155.9 L1190.3 156.0 L1192.0 156.2 L1193.5 156.2 L1195.0 156.2 L1196.5 156.2 L1198.0 156.2 L1199.5 156.2 L1201.0 156.2 L1202.5 156.2 L1204.0 156.2 L1205.5 156.2 L1207.0 156.2 L1208.5 156.2 L1210.0 156.2 L1211.5 156.2 L1213.0 156.2 L1214.5 156.2 L1216.0 156.2 L1217.5 156.2 L1219.0 156.2 L1220.5 156.2 L1222.0 156.2 L1223.5 156.2 L1225.0 156.2 L1226.5 156.2 L1228.0 156.2 L1229.5 156.2 L1231.0 156.2 L1232.5 156.2 L1234.0 156.2 L1235.5 156.2 L1237.0 156.2 L1238.5 156.2 L1240.0 156.2 L1241.5 156.2 L1243.1 156.3 L1244.6 156.3 L1246.2 156.4 L1247.7 156.4 L1249.2 156.4 L1250.8 156.5 L1252.3 156.5 L1253.8 156.5 L1255.4 156.6 L1256.9 156.6 L1258.5 156.7 L1260.0 156.7 L1261.5 156.7 L1263.1 156.8 L1264.6 156.8 L1266.2 156.9 L1267.7 156.9 L1269.2 156.9 L1270.8 157.0 L1272.3 157.0 L1273.8 157.0 L1275.4 157.1 L1276.9 157.1 L1278.5 157.2 L1280.0 157.2 L1281.5 157.2 L1283.0 157.2 L1284.5 157.2 L1286.0 157.2 L1287.5 157.2 L1289.1 157.2 L1290.6 157.2 L1292.1 157.2 L1293.6 157.2 L1295.1 157.2 L1296.6 157.2 L1298.1 157.2 L1299.6 157.2 L1301.1 157.1 L1302.6 157.1 L1304.2 157.1 L1305.7 157.1 L1307.2 157.1 L1308.7 157.1 L1310.2 157.1 L1311.7 157.1 L1313.2 157.1 L1314.7 157.1 L1316.2 157.1 L1317.7 157.1 L1319.2 157.1 L1320.8 157.1 L1322.3 157.1 L1323.8 157.1 L1325.3 157.1 L1326.8 157.1 L1328.3 157.1 L1329.8 157.1 L1331.3 157.1 L1332.8 157.1 L1334.3 157.1 L1335.8 157.1 L1337.4 157.1 L1338.9 157.1 L1340.4 157.0 L1341.9 157.0 L1343.4 157.0 L1344.9 157.0 L1346.4 157.0 L1347.9 157.0 L1349.4 157.0 L1350.9 157.0 L1352.5 157.0 L1354.0 157.0 L1355.5 157.0 L1357.0 157.0 L1358.5 157.0 L1360.0 157.0 L1361.5 157.0 L1363.0 157.0 L1364.5 157.0 L1366.0 157.0 L1367.5 157.0 L1369.1 157.0 L1370.6 157.0 L1372.1 157.0 L1373.6 157.0 L1375.1 157.0 L1376.6 157.0 L1378.1 157.0 L1379.6 157.0 L1381.1 156.9 L1382.6 156.9 L1384.2 156.9 L1385.7 156.9 L1387.2 156.9 L1388.7 156.9 L1390.2 156.9 L1391.7 156.9 L1393.2 156.9 L1394.7 156.9 L1396.2 156.9 L1397.7 156.9 L1399.2 156.9 L1400.8 156.9 L1402.3 156.9 L1403.8 156.9 L1405.3 156.9 L1406.8 156.9 L1408.3 156.9 L1409.8 156.9 L1411.3 156.9 L1412.8 156.9 L1414.3 156.9 L1415.8 156.9 L1417.4 156.9 L1418.9 156.9 L1420.4 156.8 L1421.9 156.8 L1423.4 156.8 L1424.9 156.8 L1426.4 156.8 L1427.9 156.8 L1429.4 156.8 L1430.9 156.8 L1432.5 156.8 L1434.0 156.8 L1435.5 156.8 L1437.0 156.8 L1438.5 156.8 L1440.0 156.8 L1441.5 156.8 L1443.0 156.8 L1444.5 156.8 L1446.0 156.8 L1447.5 156.8 L1449.1 156.8 L1450.6 156.8 L1452.1 156.9 L1453.6 156.9 L1455.1 156.9 L1456.6 156.9 L1458.1 156.9 L1459.6 156.9 L1461.1 156.9 L1462.6 156.9 L1464.2 156.9 L1465.7 156.9 L1467.2 156.9 L1468.7 156.9 L1470.2 156.9 L1471.7 156.9 L1473.2 156.9 L1474.7 157.0 L1476.2 157.0 L1477.7 157.0 L1479.2 157.0 L1480.8 157.0 L1482.3 157.0 L1483.8 157.0 L1485.3 157.0 L1486.8 157.0 L1488.3 157.0 L1489.8 157.0 L1491.3 157.0 L1492.8 157.0 L1494.3 157.0 L1495.8 157.0 L1497.4 157.1 L1498.9 157.1 L1500.4 157.1 L1501.9 157.1 L1503.4 157.1 L1504.9 157.1 L1506.4 157.1 L1507.9 157.1 L1509.4 157.1 L1510.9 157.1 L1512.5 157.1 L1514.0 157.1 L1515.5 157.1 L1517.0 157.1 L1518.5 157.1 L1520.0 157.2 L1521.5 157.2 L1523.0 157.2 L1524.5 157.2 L1526.0 157.2 L1527.5 157.2 L1529.1 157.2 L1530.6 157.2 L1532.1 157.2 L1533.6 157.2 L1535.1 157.2 L1536.6 157.2 L1538.1 157.2 L1539.6 157.2 L1541.1 157.2 L1542.6 157.2 L1544.2 157.3 L1545.7 157.3 L1547.2 157.3 L1548.7 157.3 L1550.2 157.3 L1551.7 157.3 L1553.2 157.3 L1554.7 157.3 L1556.2 157.3 L1557.7 157.3 L1559.2 157.3 L1560.8 157.3 L1562.3 157.3 L1563.8 157.3 L1565.3 157.3 L1566.8 157.4 L1568.3 157.4 L1569.8 157.4 L1571.3 157.4 L1572.8 157.4 L1574.3 157.4 L1575.8 157.4 L1577.4 157.4 L1578.9 157.4 L1580.4 157.4 L1581.9 157.4 L1583.4 157.4 L1584.9 157.4 L1586.4 157.4 L1587.9 157.4 L1589.4 157.5 L1590.9 157.5 L1592.5 157.5 L1594.0 157.5 L1595.5 157.5 L1597.0 157.5 L1598.5 157.5 L1600.0 157.5 L1601.5 157.5 L1603.0 157.5 L1604.5 157.5 L1606.0 157.5 L1607.5 157.5 L1609.1 157.5 L1610.6 157.6 L1612.1 157.6 L1613.6 157.6 L1615.1 157.6 L1616.6 157.6 L1618.1 157.6 L1619.6 157.6 L1621.1 157.6 L1622.7 157.6 L1624.2 157.6 L1625.7 157.6 L1627.2 157.6 L1628.7 157.7 L1630.2 157.7 L1631.7 157.7 L1633.2 157.7 L1634.7 157.7 L1636.2 157.7 L1637.8 157.7 L1639.3 157.7 L1640.8 157.7 L1642.3 157.7 L1643.8 157.7 L1645.3 157.7 L1646.8 157.7 L1648.3 157.8 L1649.8 157.8 L1651.3 157.8 L1652.8 157.8 L1654.4 157.8 L1655.9 157.8 L1657.4 157.8 L1658.9 157.8 L1660.4 157.8 L1661.9 157.8 L1663.4 157.8 L1664.9 157.8 L1666.4 157.9 L1668.0 157.9 L1669.5 157.9 L1671.0 157.9 L1672.5 157.9 L1674.0 157.9 L1675.5 157.9 L1677.0 157.9 L1678.5 157.9 L1680.0 157.9 L1681.5 157.9 L1683.0 157.9 L1684.6 157.9 L1686.1 158.0 L1687.6 158.0 L1689.1 158.0 L1690.6 158.0 L1692.1 158.0 L1693.6 158.0 L1695.1 158.0 L1696.6 158.0 L1698.2 158.0 L1699.7 158.0 L1701.2 158.0 L1702.7 158.0 L1704.2 158.1 L1705.7 158.1 L1707.2 158.1 L1708.7 158.1 L1710.2 158.1 L1711.7 158.1 L1713.2 158.1 L1714.8 158.1 L1716.3 158.1 L1717.8 158.1 L1719.3 158.1 L1720.8 158.1 L1722.3 158.1 L1723.8 158.2 L1725.3 158.2 L1726.8 158.2 L1728.3 158.2 L1729.9 158.2 L1731.4 158.2 L1732.9 158.2 L1734.4 158.2 L1735.9 158.2 L1737.4 158.2 L1738.9 158.2 L1740.4 158.2 L1741.9 158.3 L1743.5 158.3 L1745.0 158.3 L1746.5 158.3 L1748.0 158.3 L1749.5 158.3 L1751.0 158.3" fill="none" stroke="#000" stroke-width="1.60" stroke-linejoin="round"/>
<path d="M3.0 220.0 L5.0 220.0 L7.1 220.0 L9.1 220.0 L11.2 220.0 L13.2 220.0 L15.2 220.0 L17.3 220.0 L19.3 220.0 L21.3 220.0 L23.4 220.0 L25.4 220.0 L27.5 220.0 L29.5 220.0 L31.5 220.0 L33.6 220.0 L35.6 220.0 L37.7 220.0 L39.7 220.0 L41.7 220.0 L43.8 220.0 L45.8 220.0 L47.8 220.0 L49.9 220.0 L51.9 220.0 L54.0 220.0 L56.0 220.0 L56.3 184.0 L56.7 220.0 L58.0 220.0 L58.3 212.0 L60.0 216.0 L63.0 219.0 L65.1 219.1 L67.2 219.1 L69.4 219.2 L71.5 219.2 L73.6 219.3 L75.8 219.4 L77.9 219.4 L80.0 219.5 L82.0 218.0 L83.0 232.0 L84.0 218.0 L85.0 235.0 L86.0 222.0 L87.0 236.0 L88.0 219.0 L89.0 221.0 L90.0 221.5 L92.0 221.5 L94.0 221.5 L96.0 221.5 L98.0 221.5 L100.0 221.5 L102.0 221.2 L104.0 221.2 L106.0 221.4 L108.0 221.6 L110.0 221.6 L112.0 221.6 L114.0 221.4 L116.0 221.5 L118.0 221.5 L120.0 221.5 L122.0 221.3 L124.0 221.7 L126.0 221.3 L128.0 221.8 L130.0 221.5 L131.0 218.0 L132.0 222.5 L134.0 222.8 L136.0 222.3 L138.0 222.6 L140.0 222.9 L142.0 223.0 L144.0 222.7 L146.0 222.6 L148.0 222.7 L150.0 223.1 L152.0 222.7 L154.0 223.0 L156.0 222.8 L158.0 223.0 L160.0 223.3 L162.0 222.9 L164.0 223.3 L166.0 223.2 L168.0 223.5 L170.0 223.4 L172.0 223.2 L174.0 223.6 L176.0 223.4 L178.0 223.2 L180.0 223.2 L182.0 223.5 L184.0 223.5 L186.0 223.5 L188.0 223.4 L190.0 223.6 L192.0 223.6 L194.0 224.0 L196.0 223.5 L198.0 224.0 L200.0 224.1 L202.0 223.7 L204.0 224.2 L206.0 224.1 L208.0 224.3 L210.0 224.0 L212.0 224.1 L214.0 224.1 L216.0 224.5 L218.0 224.3 L220.0 224.2 L222.0 224.3 L224.0 224.2 L226.0 224.1 L228.0 224.2 L230.0 224.5 L232.0 224.7 L234.0 224.4 L236.0 224.8 L238.0 224.5 L240.0 224.5 L242.0 224.7 L244.0 224.5 L246.0 224.6 L248.0 225.0 L250.0 225.0 L252.0 225.0 L254.0 224.9 L256.0 225.1 L258.0 225.2 L260.0 224.9 L262.0 225.1 L264.0 224.7 L266.0 225.1 L268.0 225.0 L270.0 225.2 L272.0 225.2 L274.0 225.0 L276.0 224.9 L278.0 225.4 L280.0 225.0 L282.0 225.2 L284.0 225.2 L286.0 225.2 L288.0 225.5 L290.0 225.6 L292.0 225.2 L294.0 225.5 L296.0 225.3 L298.0 225.5 L300.0 225.4 L302.0 225.3 L304.0 225.3 L306.0 225.4 L308.0 225.8 L310.0 225.6 L312.0 225.5 L314.0 225.9 L316.0 226.0 L318.0 225.7 L320.0 225.5 L322.0 225.6 L324.0 225.6 L326.0 225.7 L328.0 225.6 L330.0 225.7 L332.0 225.8 L334.0 226.0 L336.0 226.2 L338.0 226.2 L340.0 226.0 L342.0 226.0 L344.0 226.1 L346.0 226.1 L348.0 226.1 L350.0 225.9 L352.0 226.1 L354.0 226.5 L356.0 226.0 L358.0 226.3 L360.0 226.4 L362.0 226.6 L364.0 226.2 L366.0 226.3 L368.0 226.3 L370.0 226.4 L372.0 226.5 L374.0 226.8 L376.0 226.8 L378.0 226.8 L380.0 226.3 L382.0 226.3 L384.0 226.8 L386.0 226.9 L388.0 226.7 L390.0 226.8 L392.0 226.5 L394.0 226.7 L396.0 227.1 L398.0 227.0 L400.0 227.1 L402.0 227.2 L404.0 226.8 L406.0 226.7 L408.0 226.8 L410.0 227.0 L412.0 227.2 L414.0 227.3 L416.0 227.2 L418.0 227.2 L420.0 227.3 L422.0 227.2 L424.0 227.2 L426.0 227.0 L428.0 227.4 L430.0 227.1 L432.0 227.6 L434.0 227.4 L436.0 227.3 L438.0 227.2 L440.0 227.3 L442.0 227.5 L444.0 227.6 L446.0 227.3 L448.0 227.3 L450.0 227.6 L452.0 227.7 L454.0 227.6 L456.0 227.5 L458.0 227.8 L460.0 227.4 L462.0 227.6 L464.0 227.8 L466.0 228.1 L468.0 227.9 L470.0 228.1 L472.0 227.9 L474.0 227.8 L476.0 227.8 L478.0 228.2 L480.0 228.0 L482.0 228.2 L484.0 228.0 L486.0 227.8 L488.0 228.2 L490.0 228.3 L492.0 228.2 L494.0 228.1 L496.0 228.4 L498.0 228.6 L500.0 228.2 L502.0 228.1 L504.0 228.4 L506.0 228.5 L508.0 228.6 L510.0 228.4 L512.0 228.8 L514.0 228.8 L516.0 228.7 L518.0 228.6 L520.0 229.1 L522.0 228.7 L524.0 229.0 L526.0 228.7 L528.0 228.8 L530.0 229.1 L532.0 228.9 L534.0 229.3 L536.0 229.1 L538.0 228.9 L540.0 229.0 L542.0 229.1 L544.0 229.3 L546.0 229.5 L548.0 229.1 L550.0 229.3 L552.0 229.2 L554.0 229.7 L556.0 229.2 L558.0 229.2 L560.0 229.3 L562.0 229.5 L564.0 229.9 L566.0 229.9 L568.0 229.8 L570.0 230.0 L572.0 230.0 L574.0 229.7 L576.0 229.7 L578.0 230.1 L580.0 230.1 L582.0 229.7 L584.0 230.1 L586.0 230.0 L588.0 230.0 L590.0 230.0 L592.0 230.0 L594.0 229.9 L596.0 230.1 L598.0 230.2 L600.0 230.6 L602.0 230.1 L604.0 230.7 L606.0 230.2 L608.0 230.4 L610.0 230.7 L612.0 230.7 L614.0 230.5 L616.0 230.3 L618.0 230.6 L620.0 230.6 L622.0 231.0 L624.0 230.6 L626.0 230.7 L628.0 231.1 L630.0 230.6 L632.0 230.9 L634.0 231.1 L636.0 231.2 L638.0 230.8 L640.0 230.8 L642.0 230.9 L644.0 231.4 L646.0 231.0 L648.0 231.4 L650.0 231.5 L652.0 231.2 L654.0 231.2 L656.0 231.7 L658.0 231.5 L660.0 231.3 L662.0 231.6 L664.0 231.4 L666.0 231.4 L668.0 231.3 L670.0 231.8 L672.0 231.9 L674.0 231.8 L676.0 232.0 L678.0 231.5 L680.0 231.7 L682.0 231.9 L684.0 232.2 L686.0 232.2 L688.0 231.9 L690.0 231.9 L692.0 232.0 L694.0 232.1 L696.0 232.4 L698.0 232.0 L700.0 232.4 L702.0 232.4 L704.0 232.5 L706.0 232.5 L708.0 232.4 L710.0 232.3 L712.0 232.4 L714.0 232.4 L716.0 232.7 L718.0 232.3 L720.0 232.4 L722.0 232.8 L724.0 232.5 L726.0 232.5 L728.0 232.5 L730.0 232.8 L732.0 232.7 L734.0 233.2 L736.0 233.2 L738.0 233.3 L740.0 233.0 L742.0 232.9 L744.0 232.8 L746.0 232.8 L748.0 233.1 L750.0 233.2 L752.0 233.1 L754.0 232.9 L756.0 233.1 L758.0 233.2 L760.0 233.3 L762.0 233.3 L764.0 233.4 L766.0 233.3 L768.0 233.0 L770.0 233.4 L772.0 233.1 L774.0 233.3 L776.0 233.2 L778.0 233.4 L780.0 233.1 L782.0 233.2 L784.0 233.2 L786.0 233.1 L788.0 233.6 L790.0 233.4 L792.0 233.3 L794.0 233.3 L796.0 233.7 L798.0 233.4 L800.0 233.3 L802.0 233.6 L804.0 233.6 L806.0 233.8 L808.0 233.3 L810.0 233.5 L812.0 233.7 L814.0 233.7 L816.0 233.8 L818.0 233.3 L820.0 233.5 L822.0 233.4 L824.0 233.4 L826.0 233.9 L828.0 233.7 L830.0 233.9 L832.0 233.6 L834.0 233.9 L836.0 233.7 L838.0 233.6 L840.0 233.9 L842.0 234.0 L844.0 233.5 L846.0 233.8 L848.0 233.9 L850.0 233.6 L852.0 233.7 L854.0 233.6 L856.0 233.7 L858.0 233.7 L860.0 233.9 L862.0 234.0 L864.0 233.7 L866.0 233.6 L868.0 233.8 L870.0 234.1 L872.0 233.8 L874.0 233.9 L876.0 234.0 L877.0 229.0 L878.0 240.0 L880.0 234.0 L882.0 233.9 L884.0 234.4 L886.0 234.3 L888.0 234.1 L890.0 234.3 L892.0 234.5 L894.0 234.7 L896.0 234.9 L898.0 234.7 L900.0 234.8 L902.0 235.2 L904.0 235.1 L906.0 235.2 L908.0 235.3 L910.0 235.8 L912.0 235.5 L914.0 235.7 L916.0 235.7 L918.0 235.8 L920.0 236.2 L922.0 236.4 L924.0 236.1 L926.0 236.1 L928.0 236.5 L930.0 236.3 L932.0 236.3 L934.0 236.9 L936.0 236.8 L938.0 237.1 L940.0 236.9 L942.0 237.3 L944.0 237.2 L946.0 237.1 L948.0 237.1 L950.0 237.5 L952.0 237.7 L954.0 237.9 L956.0 237.6 L958.0 238.0 L960.0 238.0 L962.0 238.0 L964.0 238.1 L966.0 237.9 L968.0 238.0 L970.0 238.2 L972.0 238.5 L974.0 238.0 L976.0 238.3 L978.0 238.5 L980.0 238.6 L982.0 238.2 L984.0 238.2 L986.0 238.7 L988.0 238.8 L990.0 238.5 L992.0 238.3 L994.0 238.9 L996.0 238.6 L998.0 238.9 L1000.0 238.8 L1002.0 238.9 L1004.0 238.6 L1006.0 239.0 L1008.0 238.7 L1010.0 238.8 L1012.0 239.1 L1014.0 239.2 L1016.0 238.8 L1018.0 238.9 L1020.0 239.0 L1022.0 239.1 L1024.0 239.1 L1026.0 239.0 L1028.0 239.1 L1030.0 239.4 L1032.0 239.5 L1034.0 239.0 L1036.0 239.4 L1038.0 239.5 L1040.0 239.2 L1042.0 239.7 L1044.0 239.3 L1046.0 239.6 L1048.0 239.6 L1050.0 239.7 L1052.0 239.5 L1054.0 239.6 L1056.0 239.8 L1058.0 239.7 L1060.0 239.9 L1062.0 239.8 L1064.0 239.8 L1066.0 239.6 L1068.0 240.0 L1070.0 240.0 L1072.0 239.8 L1074.0 240.2 L1076.0 240.2 L1078.0 240.1 L1080.0 240.0 L1082.0 240.2 L1084.0 240.0 L1086.0 240.0 L1088.0 240.2 L1090.0 240.1 L1092.0 240.3 L1094.0 240.4 L1096.0 240.2 L1098.0 240.5 L1100.0 240.5 L1100.5 238.5 L1101.0 242.0 L1101.5 240.5 L1102.0 233.0 L1102.5 247.0 L1103.0 234.0 L1103.5 246.0 L1104.0 225.0 L1104.5 249.0 L1105.0 225.0 L1105.5 245.0 L1106.0 233.0 L1106.5 246.0 L1107.0 238.0 L1108.0 241.0 L1110.0 241.0 L1110.5 233.0 L1111.0 248.0 L1111.5 241.0 L1113.6 241.0 L1115.7 241.0 L1117.8 241.0 L1119.8 241.0 L1121.9 241.0 L1124.0 241.0 L1124.5 233.0 L1125.0 246.0 L1125.5 241.0 L1128.0 241.0 L1128.5 233.0 L1129.0 244.5 L1129.5 241.0 L1133.0 241.0 L1133.5 231.0 L1134.0 244.5 L1134.5 241.0 L1136.5 241.0 L1138.5 241.0 L1139.0 238.0 L1139.5 246.0 L1140.0 241.2 L1142.1 241.2 L1144.2 241.2 L1146.3 241.3 L1148.4 241.3 L1150.5 241.3 L1151.0 238.0 L1151.5 244.5 L1152.0 241.5 L1154.3 241.5 L1156.7 241.5 L1159.0 241.5 L1159.5 238.0 L1160.0 244.5 L1160.5 241.8 L1163.0 242.0 L1165.1 242.1 L1167.2 242.1 L1169.4 242.2 L1171.5 242.2 L1173.6 242.3 L1175.8 242.4 L1177.9 242.4 L1180.0 242.5 L1182.0 242.5 L1184.0 242.6 L1186.0 242.6 L1188.0 242.6 L1190.0 242.7 L1192.0 242.7 L1194.0 242.7 L1196.0 242.8 L1198.0 242.8 L1200.0 242.8 L1202.0 242.9 L1204.0 242.9 L1206.0 242.9 L1208.0 243.0 L1210.0 243.0 L1212.0 243.0 L1214.0 243.1 L1216.0 243.1 L1218.0 243.1 L1220.0 243.2 L1222.0 243.2 L1224.0 243.2 L1226.0 243.2 L1228.0 243.3 L1230.0 243.3 L1232.0 243.3 L1234.0 243.4 L1236.0 243.4 L1238.0 243.4 L1240.0 243.5 L1242.0 243.5 L1244.0 243.5 L1246.0 243.5 L1248.0 243.6 L1250.0 243.6 L1252.0 243.6 L1254.0 243.7 L1256.0 243.7 L1258.0 243.7 L1260.0 243.8 L1262.0 243.8 L1264.0 243.8 L1266.0 243.9 L1268.0 243.9 L1270.0 243.9 L1272.0 243.9 L1274.0 244.0 L1276.0 244.0 L1278.0 244.0 L1280.0 244.1 L1282.0 244.1 L1284.0 244.1 L1286.0 244.2 L1288.0 244.2 L1290.0 244.2 L1292.0 244.2 L1294.0 244.3 L1296.0 244.3 L1298.0 244.3 L1300.0 244.4 L1302.0 244.4 L1304.0 244.4 L1306.0 244.5 L1308.0 244.5 L1310.0 244.5 L1312.0 244.6 L1314.0 244.6 L1316.0 244.6 L1318.0 244.6 L1320.0 244.7 L1322.0 244.7 L1324.0 244.7 L1326.0 244.8 L1328.0 244.8 L1330.0 244.8 L1332.0 244.9 L1334.0 244.9 L1336.0 244.9 L1338.0 244.9 L1340.0 245.0 L1342.0 245.0 L1344.0 245.0 L1346.0 245.1 L1348.0 245.1 L1350.0 245.1 L1352.0 245.2 L1354.0 245.2 L1356.0 245.2 L1358.0 245.3 L1360.0 245.3 L1362.0 245.3 L1364.0 245.3 L1366.0 245.4 L1368.0 245.4 L1370.0 245.4 L1372.0 245.5 L1374.0 245.5 L1376.0 245.5 L1378.0 245.6 L1380.0 245.6 L1382.0 245.6 L1384.0 245.6 L1386.0 245.7 L1388.0 245.7 L1390.0 245.7 L1392.0 245.8 L1394.0 245.8 L1396.0 245.8 L1398.0 245.9 L1400.0 245.9 L1402.0 245.9 L1404.0 246.0 L1406.0 246.0 L1408.0 246.0 L1410.0 246.0 L1412.0 246.1 L1414.0 246.1 L1416.0 246.1 L1418.0 246.2 L1420.0 246.2 L1422.0 246.2 L1424.0 246.3 L1426.0 246.3 L1428.0 246.3 L1430.0 246.3 L1432.0 246.4 L1434.0 246.4 L1436.0 246.4 L1438.0 246.5 L1440.0 246.5 L1442.0 246.5 L1444.0 246.6 L1446.0 246.6 L1448.0 246.6 L1450.0 246.7 L1452.0 246.7 L1454.0 246.7 L1456.1 246.7 L1458.1 246.8 L1460.1 246.8 L1462.1 246.8 L1464.1 246.9 L1466.1 246.9 L1468.1 246.9 L1470.1 247.0 L1472.1 247.0 L1474.1 247.0 L1476.1 247.1 L1478.1 247.1 L1480.1 247.1 L1482.1 247.2 L1484.1 247.2 L1486.1 247.2 L1488.2 247.2 L1490.2 247.3 L1492.2 247.3 L1494.2 247.3 L1496.2 247.4 L1498.2 247.4 L1500.2 247.4 L1502.2 247.5 L1504.2 247.5 L1506.2 247.5 L1508.2 247.6 L1510.2 247.6 L1512.2 247.6 L1514.2 247.6 L1516.2 247.7 L1518.3 247.7 L1520.3 247.7 L1522.3 247.8 L1524.3 247.8 L1526.3 247.8 L1528.3 247.9 L1530.3 247.9 L1532.3 247.9 L1534.3 248.0 L1536.3 248.0 L1538.3 248.0 L1540.3 248.0 L1542.3 248.1 L1544.3 248.1 L1546.3 248.1 L1548.3 248.2 L1550.4 248.2 L1552.4 248.2 L1554.4 248.3 L1556.4 248.3 L1558.4 248.3 L1560.4 248.4 L1562.4 248.4 L1564.4 248.4 L1566.4 248.5 L1568.4 248.5 L1570.4 248.5 L1572.4 248.5 L1574.4 248.6 L1576.4 248.6 L1578.4 248.6 L1580.5 248.7 L1582.5 248.7 L1584.5 248.7 L1586.5 248.8 L1588.5 248.8 L1590.5 248.8 L1592.5 248.9 L1594.5 248.9 L1596.5 248.9 L1598.5 248.9 L1600.5 249.0 L1602.5 249.0 L1604.5 249.0 L1606.5 249.1 L1608.5 249.1 L1610.5 249.1 L1612.6 249.2 L1614.6 249.2 L1616.6 249.2 L1618.6 249.3 L1620.6 249.3 L1622.6 249.3 L1624.6 249.3 L1626.6 249.4 L1628.6 249.4 L1630.6 249.4 L1632.6 249.5 L1634.6 249.5 L1636.6 249.5 L1638.6 249.6 L1640.6 249.6 L1642.7 249.6 L1644.7 249.7 L1646.7 249.7 L1648.7 249.7 L1650.7 249.8 L1652.7 249.8 L1654.7 249.8 L1656.7 249.8 L1658.7 249.9 L1660.7 249.9 L1662.7 249.9 L1664.7 250.0 L1666.7 250.0 L1668.7 250.0 L1670.7 250.1 L1672.7 250.1 L1674.8 250.1 L1676.8 250.2 L1678.8 250.2 L1680.8 250.2 L1682.8 250.2 L1684.8 250.3 L1686.8 250.3 L1688.8 250.3 L1690.8 250.4 L1692.8 250.4 L1694.8 250.4 L1696.8 250.5 L1698.8 250.5 L1700.8 250.5 L1702.8 250.6 L1704.9 250.6 L1706.9 250.6 L1708.9 250.6 L1710.9 250.7 L1712.9 250.7 L1714.9 250.7 L1716.9 250.8 L1718.9 250.8 L1720.9 250.8 L1722.9 250.9 L1724.9 250.9 L1726.9 250.9 L1728.9 251.0 L1730.9 251.0 L1732.9 251.0 L1734.9 251.1 L1737.0 251.1 L1739.0 251.1 L1741.0 251.1 L1743.0 251.2 L1745.0 251.2 L1747.0 251.2 L1749.0 251.3 L1751.0 251.3" fill="none" stroke="#1cc3cc" stroke-width="1.40" stroke-linejoin="round"/>
<path d="M3.0 350.0 L5.0 350.0 L7.1 350.0 L9.1 350.0 L11.2 350.0 L13.2 350.0 L15.2 350.0 L17.3 350.0 L19.3 350.0 L21.4 350.0 L23.4 350.0 L25.4 350.0 L27.5 350.0 L29.5 350.0 L31.6 350.0 L33.6 350.0 L35.6 350.0 L37.7 350.0 L39.7 350.0 L41.8 350.0 L43.8 350.0 L45.8 350.0 L47.9 350.0 L49.9 350.0 L52.0 350.0 L54.0 350.0 L55.0 302.0 L56.0 398.0 L57.0 320.0 L58.0 385.0 L59.0 335.0 L60.0 365.0 L62.0 345.0 L64.0 348.5 L66.0 352.0 L68.0 351.7 L70.0 351.4 L72.0 351.1 L74.0 350.9 L76.0 350.6 L78.0 350.3 L80.0 350.0 L81.0 342.0 L82.0 372.0 L84.0 352.0 L86.0 351.3 L88.0 350.7 L90.0 350.0 L92.0 350.0 L94.0 350.0 L96.0 350.0 L98.0 350.0 L100.0 350.0 L102.0 350.0 L104.0 350.0 L106.0 350.0 L108.0 350.0 L110.0 350.0 L112.0 350.0 L114.0 350.0 L116.0 350.0 L118.0 350.0 L120.0 350.0 L122.0 350.0 L124.0 350.0 L126.0 350.0 L128.0 350.0 L130.0 350.0 L132.0 350.0 L134.0 350.0 L136.0 350.0 L138.0 350.0 L140.0 350.0 L142.0 350.0 L144.0 350.0 L146.0 350.0 L148.0 350.0 L150.0 350.0 L152.0 350.0 L154.0 350.0 L156.0 350.0 L158.0 350.0 L160.0 350.0 L162.0 350.0 L164.0 350.0 L166.0 350.0 L168.0 350.0 L170.0 350.0 L172.0 350.0 L174.0 350.0 L176.0 350.0 L178.0 350.0 L180.0 350.0 L182.0 350.0 L184.0 350.0 L186.0 350.0 L188.0 350.0 L190.0 350.0 L192.0 350.0 L194.0 350.0 L196.0 350.0 L198.0 350.0 L200.0 350.0 L202.0 350.0 L204.0 350.0 L206.0 350.0 L208.0 350.0 L210.0 350.0 L212.0 350.0 L214.0 350.0 L216.0 350.0 L218.0 350.0 L220.0 350.0 L222.0 350.0 L224.0 350.0 L226.0 350.0 L228.0 350.0 L230.0 350.0 L232.0 350.0 L234.0 350.0 L236.0 350.0 L238.0 350.0 L240.0 350.0 L242.0 350.0 L244.0 350.0 L246.0 350.0 L248.0 350.0 L250.0 350.0 L252.0 350.0 L254.0 350.0 L256.0 350.0 L258.0 350.0 L260.0 350.0 L262.0 350.0 L264.0 350.0 L266.0 350.0 L268.0 350.0 L270.0 350.0 L272.0 350.0 L274.0 350.0 L276.0 350.0 L278.0 350.0 L280.0 350.0 L282.0 350.0 L284.0 350.0 L286.0 350.0 L288.0 350.0 L290.0 350.0 L292.0 350.0 L294.0 350.0 L296.0 350.0 L298.0 350.0 L300.0 350.0 L302.0 350.0 L304.0 350.0 L306.0 350.0 L308.0 350.0 L310.0 350.0 L312.0 350.0 L314.0 350.0 L316.0 350.0 L318.0 350.0 L320.0 350.0 L322.0 350.0 L324.0 350.0 L326.0 350.0 L328.0 350.0 L330.0 350.0 L332.0 350.0 L334.0 350.0 L336.0 350.0 L338.0 350.0 L340.0 350.0 L342.0 350.0 L344.0 350.0 L346.0 350.0 L348.0 350.0 L350.0 350.0 L352.0 350.0 L354.0 350.0 L356.0 350.0 L358.0 350.0 L360.0 350.0 L362.0 350.0 L364.0 350.0 L366.0 350.0 L368.0 350.0 L370.0 350.0 L372.0 350.0 L374.0 350.0 L376.0 350.0 L378.0 350.0 L380.0 350.0 L382.0 350.0 L384.0 350.0 L386.0 350.0 L388.0 350.0 L390.0 350.0 L392.0 350.0 L394.0 350.0 L396.0 350.0 L398.0 350.0 L400.0 350.0 L402.0 350.0 L404.0 350.0 L406.0 350.0 L408.0 350.0 L410.0 350.0 L412.0 350.0 L414.0 350.0 L416.0 350.0 L418.0 350.0 L420.0 350.0 L422.0 350.0 L424.0 350.0 L426.0 350.0 L428.0 350.0 L430.0 350.0 L432.0 350.0 L434.0 350.0 L436.0 350.0 L438.0 350.0 L440.0 350.0 L442.0 350.0 L444.0 350.0 L446.0 350.0 L448.0 350.0 L450.0 350.0 L452.0 350.0 L454.0 350.0 L456.0 350.0 L458.0 350.0 L460.0 350.0 L462.0 350.0 L464.0 350.0 L466.0 350.0 L468.0 350.0 L470.0 350.0 L472.0 350.0 L474.0 350.0 L476.0 350.0 L478.0 350.0 L480.0 350.0 L482.0 350.0 L484.0 350.0 L486.0 350.0 L488.0 350.0 L490.0 350.0 L492.0 350.0 L494.0 350.0 L496.0 350.0 L498.0 350.0 L500.0 349.6 L502.0 350.2 L504.0 350.3 L506.0 350.0 L508.0 349.6 L510.0 350.0 L512.0 349.9 L514.0 350.5 L516.0 349.6 L518.0 350.4 L520.0 350.5 L522.0 350.2 L524.0 350.3 L526.0 349.7 L528.0 350.5 L530.0 350.0 L532.0 350.5 L534.0 350.4 L536.0 349.7 L538.0 350.3 L540.0 350.4 L542.0 349.6 L544.0 349.9 L546.0 350.3 L548.0 349.7 L550.0 350.4 L552.0 349.8 L554.0 350.3 L556.0 349.6 L558.0 350.0 L560.0 350.4 L562.0 349.7 L564.0 349.8 L566.0 350.0 L568.0 349.8 L570.0 349.5 L572.0 349.7 L574.0 349.7 L576.0 350.4 L578.0 350.2 L580.0 350.4 L582.0 349.7 L584.0 350.3 L586.0 349.6 L588.0 350.0 L590.0 350.1 L592.0 349.9 L594.0 350.4 L596.0 350.1 L598.0 350.1 L600.0 350.4 L602.0 349.6 L604.0 350.5 L606.0 350.1 L608.0 349.9 L610.0 350.3 L612.0 349.8 L614.0 350.5 L616.0 350.1 L618.0 349.9 L620.0 350.3 L622.0 349.9 L624.0 349.7 L626.0 350.2 L628.0 349.5 L630.0 350.3 L632.0 349.8 L634.0 350.1 L636.0 350.5 L638.0 350.1 L640.0 350.2 L642.0 349.8 L644.0 349.5 L646.0 349.5 L648.0 349.6 L650.0 350.1 L652.0 349.9 L654.0 350.0 L656.0 350.4 L658.0 349.6 L660.0 349.7 L662.0 350.2 L664.0 349.5 L666.0 349.5 L668.0 349.9 L670.0 349.6 L672.0 349.9 L674.0 349.7 L676.0 350.1 L678.0 350.1 L680.0 349.7 L682.0 350.1 L684.0 350.0 L686.0 349.6 L688.0 350.4 L690.0 349.7 L692.0 349.6 L694.0 349.6 L696.0 350.1 L698.0 350.4 L700.0 350.3 L702.0 349.9 L704.0 349.8 L706.0 349.5 L708.0 350.1 L710.0 350.1 L712.0 349.9 L714.0 350.1 L716.0 349.9 L718.0 350.4 L720.0 350.2 L722.0 349.7 L724.0 350.4 L726.0 349.5 L728.0 350.0 L730.0 349.9 L732.0 349.7 L734.0 349.6 L736.0 350.3 L738.0 349.5 L740.0 350.0 L741.0 346.0 L742.0 353.0 L744.0 353.0 L746.0 353.4 L748.0 352.5 L750.0 352.5 L752.0 352.9 L754.0 352.7 L756.0 352.8 L758.0 353.0 L760.0 352.3 L762.0 352.4 L764.0 352.3 L766.0 352.0 L768.0 352.8 L770.0 352.7 L772.0 352.6 L774.0 351.8 L776.0 352.6 L778.0 352.5 L780.0 352.1 L782.0 352.4 L784.0 352.0 L786.0 351.8 L788.0 351.6 L790.0 351.7 L792.0 351.5 L794.0 351.7 L796.0 352.1 L798.0 352.0 L800.0 352.1 L802.0 351.9 L804.0 351.4 L806.0 351.7 L808.0 351.5 L810.0 351.8 L812.0 351.5 L814.0 351.2 L816.0 351.5 L818.0 351.8 L820.0 351.0 L822.0 351.6 L824.0 350.7 L826.0 350.9 L828.0 350.9 L830.0 351.3 L832.0 351.5 L834.0 351.2 L836.0 350.8 L838.0 351.3 L840.0 350.7 L842.0 350.6 L844.0 351.2 L846.0 350.9 L848.0 350.9 L850.0 350.8 L852.0 351.1 L854.0 350.5 L856.0 350.9 L858.0 350.7 L860.0 350.8 L862.0 350.3 L864.0 350.6 L866.0 350.4 L868.0 350.1 L870.0 349.9 L872.0 350.3 L874.0 349.7 L876.0 350.5 L878.0 349.7 L880.0 350.0 L881.0 345.0 L883.0 352.0 L885.0 351.5 L887.1 351.5 L889.1 352.3 L891.1 351.7 L893.1 351.4 L895.2 351.3 L897.2 351.3 L899.2 351.9 L901.2 351.8 L903.3 351.8 L905.3 351.8 L907.3 351.1 L909.3 351.6 L911.4 351.3 L913.4 351.7 L915.4 351.7 L917.4 351.7 L919.5 350.9 L921.5 351.6 L923.5 351.6 L925.6 351.6 L927.6 350.7 L929.6 350.8 L931.6 350.7 L933.7 350.5 L935.7 351.3 L937.7 351.2 L939.7 351.0 L941.8 351.2 L943.8 350.9 L945.8 350.6 L947.8 350.3 L949.9 350.3 L951.9 350.9 L953.9 350.3 L955.9 350.4 L958.0 350.5 L960.0 350.5 L962.0 350.0 L964.0 350.2 L966.0 350.3 L968.1 350.7 L970.1 350.3 L972.1 350.3 L974.1 350.9 L976.1 350.4 L978.1 350.8 L980.1 350.5 L982.2 350.0 L984.2 350.3 L986.2 350.3 L988.2 350.7 L990.2 350.2 L992.2 350.6 L994.2 350.4 L996.3 350.1 L998.3 350.7 L1000.3 349.9 L1002.3 350.7 L1004.3 350.0 L1006.3 349.8 L1008.3 350.0 L1010.4 350.6 L1012.4 350.8 L1014.4 349.8 L1016.4 350.3 L1018.4 350.3 L1020.4 350.6 L1022.4 350.0 L1024.5 350.3 L1026.5 350.1 L1028.5 350.6 L1030.5 350.0 L1032.5 350.7 L1034.5 350.0 L1036.6 349.9 L1038.6 350.4 L1040.6 350.2 L1042.6 349.8 L1044.6 350.3 L1046.6 349.8 L1048.6 350.5 L1050.7 350.4 L1052.7 350.5 L1054.7 350.3 L1056.7 350.0 L1058.7 350.0 L1060.7 350.0 L1062.7 350.5 L1064.8 349.7 L1066.8 350.5 L1068.8 349.6 L1070.8 349.8 L1072.8 349.9 L1074.8 350.5 L1076.8 350.1 L1078.9 350.0 L1080.9 350.4 L1082.9 349.8 L1084.9 350.0 L1086.9 350.1 L1088.9 350.3 L1090.9 350.3 L1093.0 350.2 L1095.0 349.9 L1097.0 349.8 L1099.0 350.0 L1100.0 362.0 L1101.0 330.0 L1102.0 340.0 L1103.0 315.0 L1104.0 338.0 L1105.0 302.0 L1106.0 335.0 L1107.0 315.0 L1108.0 330.0 L1109.0 316.0 L1110.0 313.5 L1112.0 313.5 L1114.0 313.5 L1116.0 313.5 L1118.0 313.5 L1120.0 313.5 L1122.5 314.2 L1125.0 315.0 L1127.5 318.2 L1130.0 321.5 L1132.0 324.8 L1134.0 328.0 L1136.0 331.0 L1138.0 334.0 L1140.0 337.0 L1142.3 338.5 L1144.7 340.0 L1147.0 341.5 L1149.0 342.3 L1151.0 343.2 L1153.0 344.0 L1155.2 344.9 L1157.5 345.7 L1159.8 346.5 L1162.0 347.4 L1164.2 347.7 L1166.3 347.9 L1168.5 348.2 L1170.7 348.5 L1172.8 348.7 L1175.0 349.0 L1177.1 349.1 L1179.2 349.1 L1181.2 349.2 L1183.3 349.2 L1185.4 349.3 L1187.5 349.4 L1189.6 349.4 L1191.7 349.5 L1193.8 349.5 L1195.8 349.6 L1197.9 349.6 L1200.0 349.7 L1202.0 349.7 L1204.0 349.7 L1206.0 349.7 L1208.0 349.7 L1210.0 349.7 L1212.0 349.7 L1214.0 349.7 L1216.0 349.7 L1218.0 349.7 L1220.0 349.7 L1222.0 349.7 L1224.0 349.7 L1226.0 349.7 L1228.1 349.7 L1230.1 349.7 L1232.1 349.7 L1234.1 349.7 L1236.1 349.7 L1238.1 349.7 L1240.1 349.7 L1242.1 349.7 L1244.1 349.7 L1246.1 349.7 L1248.1 349.7 L1250.1 349.7 L1252.1 349.7 L1254.1 349.7 L1256.1 349.7 L1258.1 349.7 L1260.1 349.7 L1262.1 349.7 L1264.1 349.7 L1266.1 349.7 L1268.1 349.7 L1270.1 349.7 L1272.1 349.7 L1274.1 349.7 L1276.1 349.7 L1278.1 349.7 L1280.1 349.7 L1282.1 349.7 L1284.2 349.7 L1286.2 349.7 L1288.2 349.7 L1290.2 349.7 L1292.2 349.8 L1294.2 349.8 L1296.2 349.8 L1298.2 349.8 L1300.2 349.8 L1302.2 349.8 L1304.2 349.8 L1306.2 349.8 L1308.2 349.8 L1310.2 349.8 L1312.2 349.8 L1314.2 349.8 L1316.2 349.8 L1318.2 349.8 L1320.2 349.8 L1322.2 349.8 L1324.2 349.8 L1326.2 349.8 L1328.2 349.8 L1330.2 349.8 L1332.2 349.8 L1334.2 349.8 L1336.2 349.8 L1338.3 349.8 L1340.3 349.8 L1342.3 349.8 L1344.3 349.8 L1346.3 349.8 L1348.3 349.8 L1350.3 349.8 L1352.3 349.8 L1354.3 349.8 L1356.3 349.8 L1358.3 349.8 L1360.3 349.8 L1362.3 349.8 L1364.3 349.8 L1366.3 349.8 L1368.3 349.8 L1370.3 349.8 L1372.3 349.8 L1374.3 349.8 L1376.3 349.8 L1378.3 349.8 L1380.3 349.8 L1382.3 349.8 L1384.3 349.8 L1386.3 349.8 L1388.3 349.8 L1390.3 349.8 L1392.3 349.8 L1394.4 349.8 L1396.4 349.8 L1398.4 349.8 L1400.4 349.8 L1402.4 349.8 L1404.4 349.8 L1406.4 349.8 L1408.4 349.8 L1410.4 349.8 L1412.4 349.8 L1414.4 349.8 L1416.4 349.8 L1418.4 349.8 L1420.4 349.8 L1422.4 349.8 L1424.4 349.8 L1426.4 349.8 L1428.4 349.8 L1430.4 349.8 L1432.4 349.8 L1434.4 349.8 L1436.4 349.8 L1438.4 349.8 L1440.4 349.8 L1442.4 349.8 L1444.4 349.8 L1446.4 349.8 L1448.5 349.8 L1450.5 349.8 L1452.5 349.8 L1454.5 349.8 L1456.5 349.8 L1458.5 349.8 L1460.5 349.8 L1462.5 349.8 L1464.5 349.8 L1466.5 349.8 L1468.5 349.8 L1470.5 349.8 L1472.5 349.8 L1474.5 349.8 L1476.5 349.9 L1478.5 349.9 L1480.5 349.9 L1482.5 349.9 L1484.5 349.9 L1486.5 349.9 L1488.5 349.9 L1490.5 349.9 L1492.5 349.9 L1494.5 349.9 L1496.5 349.9 L1498.5 349.9 L1500.5 349.9 L1502.5 349.9 L1504.6 349.9 L1506.6 349.9 L1508.6 349.9 L1510.6 349.9 L1512.6 349.9 L1514.6 349.9 L1516.6 349.9 L1518.6 349.9 L1520.6 349.9 L1522.6 349.9 L1524.6 349.9 L1526.6 349.9 L1528.6 349.9 L1530.6 349.9 L1532.6 349.9 L1534.6 349.9 L1536.6 349.9 L1538.6 349.9 L1540.6 349.9 L1542.6 349.9 L1544.6 349.9 L1546.6 349.9 L1548.6 349.9 L1550.6 349.9 L1552.6 349.9 L1554.6 349.9 L1556.6 349.9 L1558.7 349.9 L1560.7 349.9 L1562.7 349.9 L1564.7 349.9 L1566.7 349.9 L1568.7 349.9 L1570.7 349.9 L1572.7 349.9 L1574.7 349.9 L1576.7 349.9 L1578.7 349.9 L1580.7 349.9 L1582.7 349.9 L1584.7 349.9 L1586.7 349.9 L1588.7 349.9 L1590.7 349.9 L1592.7 349.9 L1594.7 349.9 L1596.7 349.9 L1598.7 349.9 L1600.7 349.9 L1602.7 349.9 L1604.7 349.9 L1606.7 349.9 L1608.7 349.9 L1610.7 349.9 L1612.7 349.9 L1614.8 349.9 L1616.8 349.9 L1618.8 349.9 L1620.8 349.9 L1622.8 349.9 L1624.8 349.9 L1626.8 349.9 L1628.8 349.9 L1630.8 349.9 L1632.8 349.9 L1634.8 349.9 L1636.8 349.9 L1638.8 349.9 L1640.8 349.9 L1642.8 349.9 L1644.8 349.9 L1646.8 349.9 L1648.8 349.9 L1650.8 349.9 L1652.8 349.9 L1654.8 349.9 L1656.8 349.9 L1658.8 349.9 L1660.8 350.0 L1662.8 350.0 L1664.8 350.0 L1666.8 350.0 L1668.9 350.0 L1670.9 350.0 L1672.9 350.0 L1674.9 350.0 L1676.9 350.0 L1678.9 350.0 L1680.9 350.0 L1682.9 350.0 L1684.9 350.0 L1686.9 350.0 L1688.9 350.0 L1690.9 350.0 L1692.9 350.0 L1694.9 350.0 L1696.9 350.0 L1698.9 350.0 L1700.9 350.0 L1702.9 350.0 L1704.9 350.0 L1706.9 350.0 L1708.9 350.0 L1710.9 350.0 L1712.9 350.0 L1714.9 350.0 L1716.9 350.0 L1718.9 350.0 L1720.9 350.0 L1722.9 350.0 L1725.0 350.0 L1727.0 350.0 L1729.0 350.0 L1731.0 350.0 L1733.0 350.0 L1735.0 350.0 L1737.0 350.0 L1739.0 350.0 L1741.0 350.0 L1743.0 350.0 L1745.0 350.0 L1747.0 350.0 L1749.0 350.0 L1751.0 350.0" fill="none" stroke="#dc2850" stroke-width="1.50" stroke-linejoin="round"/>
<path d="M3.0 477.8 L6.0 477.8 L9.0 477.8 L12.0 477.8 L15.1 477.8 L18.1 477.8 L21.1 477.8 L24.1 477.8 L27.1 477.8 L30.1 477.8 L33.1 477.8 L36.2 477.8 L39.2 477.8 L42.2 477.8 L45.2 477.8 L48.2 477.8 L51.2 477.8 L54.3 477.8 L57.3 477.8 L60.3 477.8 L63.3 477.8 L66.3 477.8 L69.3 477.8 L72.3 477.8 L75.4 477.8 L78.4 477.8 L81.4 477.8 L84.4 477.8 L87.4 477.8 L90.4 477.8 L93.4 477.8 L96.5 477.8 L99.5 477.8 L102.5 477.8 L105.5 477.8 L108.5 477.8 L111.5 477.8 L114.6 477.8 L117.6 477.8 L120.6 477.8 L123.6 477.8 L126.6 477.8 L129.6 477.8 L132.6 477.8 L135.7 477.8 L138.7 477.8 L141.7 477.8 L144.7 477.8 L147.7 477.8 L150.7 477.8 L153.7 477.8 L156.8 477.8 L159.8 477.8 L162.8 477.8 L165.8 477.8 L168.8 477.8 L171.8 477.8 L174.9 477.8 L177.9 477.8 L180.9 477.8 L183.9 477.8 L186.9 477.8 L189.9 477.8 L192.9 477.8 L196.0 477.8 L199.0 477.8 L202.0 477.8 L205.0 477.8 L208.3 476.5 L211.7 475.3 L215.0 474.0 L218.0 473.2 L221.0 472.4 L224.0 471.6 L227.0 470.8 L230.0 470.0 L233.3 469.0 L236.7 468.0 L240.0 467.0 L243.3 466.0 L246.7 465.0 L250.0 464.0 L253.0 463.3 L256.0 462.6 L259.0 462.0 L262.0 461.3 L265.0 461.3 L268.0 461.3 L271.0 461.3 L274.0 461.3 L277.0 461.3 L280.0 461.3 L283.1 461.3 L286.1 461.3 L289.1 461.3 L292.1 461.3 L295.1 461.3 L298.1 461.3 L301.1 461.3 L304.1 461.3 L307.1 461.3 L310.1 461.3 L313.1 461.3 L316.1 461.3 L319.2 461.3 L322.2 461.3 L325.2 461.3 L328.2 461.3 L331.2 461.3 L334.2 461.3 L337.2 461.3 L340.2 461.3 L343.2 461.3 L346.2 461.3 L349.2 461.3 L352.2 461.3 L355.2 461.4 L358.3 461.4 L361.3 461.4 L364.3 461.4 L367.3 461.4 L370.3 461.4 L373.3 461.4 L376.3 461.4 L379.3 461.4 L382.3 461.4 L385.3 461.4 L388.3 461.4 L391.3 461.4 L394.4 461.4 L397.4 461.4 L400.4 461.4 L403.4 461.4 L406.4 461.4 L409.4 461.4 L412.4 461.4 L415.4 461.4 L418.4 461.4 L421.4 461.4 L424.4 461.4 L427.4 461.4 L430.5 461.4 L433.5 461.4 L436.5 461.4 L439.5 461.4 L442.5 461.4 L445.5 461.4 L448.5 461.4 L451.5 461.4 L454.5 461.4 L457.5 461.4 L460.5 461.4 L463.5 461.4 L466.5 461.4 L469.6 461.4 L472.6 461.4 L475.6 461.4 L478.6 461.4 L481.6 461.4 L484.6 461.4 L487.6 461.4 L490.6 461.4 L493.6 461.4 L496.6 461.4 L499.6 461.4 L502.6 461.4 L505.7 461.4 L508.7 461.4 L511.7 461.4 L514.7 461.4 L517.7 461.4 L520.7 461.4 L523.7 461.4 L526.7 461.4 L529.7 461.4 L532.7 461.4 L535.7 461.4 L538.7 461.4 L541.8 461.4 L544.8 461.5 L547.8 461.5 L550.8 461.5 L553.8 461.5 L556.8 461.5 L559.8 461.5 L562.8 461.5 L565.8 461.5 L568.8 461.5 L571.8 461.5 L574.8 461.5 L577.8 461.5 L580.9 461.5 L583.9 461.5 L586.9 461.5 L589.9 461.5 L592.9 461.5 L595.9 461.5 L598.9 461.5 L601.9 461.5 L604.9 461.5 L607.9 461.5 L610.9 461.5 L613.9 461.5 L617.0 461.5 L620.0 461.5 L623.0 461.5 L626.0 461.5 L629.0 461.5 L632.0 461.5 L635.0 461.5 L636.0 463.0 L639.0 463.0 L642.1 463.0 L645.1 463.0 L648.2 463.1 L651.2 463.1 L654.3 463.1 L657.4 463.1 L660.4 463.1 L663.5 463.1 L666.5 463.1 L669.5 463.1 L672.6 463.1 L675.6 463.2 L678.7 463.2 L681.8 463.2 L684.8 463.2 L687.9 463.2 L690.9 463.2 L694.0 463.2 L697.0 463.2 L700.0 463.3 L703.1 463.3 L706.1 463.3 L709.2 463.3 L712.2 463.3 L715.3 463.3 L718.4 463.3 L721.4 463.4 L724.5 463.4 L727.5 463.4 L730.5 463.4 L733.6 463.4 L736.6 463.4 L739.7 463.4 L742.8 463.4 L745.8 463.4 L748.9 463.5 L751.9 463.5 L755.0 463.5 L758.0 463.5 L759.0 464.2 L762.1 464.2 L765.3 464.2 L768.4 464.2 L771.6 464.2 L774.7 464.2 L777.9 464.2 L781.0 464.2 L784.1 464.2 L787.3 464.2 L790.4 464.2 L793.6 464.2 L796.7 464.2 L799.9 464.2 L803.0 464.2 L804.0 462.8 L807.3 462.8 L810.7 462.8 L814.0 462.8 L815.0 464.0 L818.0 464.0 L821.0 464.0 L824.0 464.0 L827.0 464.0 L830.0 464.0 L833.0 464.0 L836.0 464.0 L839.0 464.0 L842.0 464.0 L845.0 464.0 L850.0 465.0 L853.3 465.1 L856.7 465.1 L860.0 465.1 L863.3 465.2 L866.7 465.2 L870.0 465.3 L873.0 466.5 L876.0 466.5 L879.0 466.6 L882.0 466.6 L885.0 466.6 L888.0 466.6 L891.0 466.7 L894.0 466.7 L897.0 466.7 L900.0 466.7 L903.0 466.8 L906.0 466.8 L909.0 466.8 L912.0 466.8 L915.0 466.9 L918.0 466.9 L921.0 466.9 L924.0 466.9 L927.0 467.0 L930.0 467.0 L933.0 467.0 L936.0 467.1 L939.0 467.1 L942.0 467.1 L945.0 467.1 L948.0 467.2 L951.0 467.2 L954.0 467.2 L957.0 467.3 L960.0 467.3 L963.0 467.2 L966.0 467.2 L969.0 467.1 L972.0 467.0 L975.0 467.0 L978.0 466.9 L981.0 466.8 L984.0 466.8 L987.0 466.7 L990.0 466.6 L993.0 466.6 L996.0 466.5 L999.0 466.4 L1002.0 466.4 L1005.0 466.3 L1008.0 466.2 L1011.0 466.2 L1014.0 466.1 L1017.0 466.0 L1020.0 466.0 L1023.0 465.9 L1026.0 465.8 L1029.0 465.8 L1032.0 465.7 L1035.0 465.6 L1038.0 465.6 L1041.0 465.5 L1044.0 465.4 L1047.0 465.4 L1050.0 465.3 L1053.1 465.3 L1056.2 465.3 L1059.4 465.3 L1062.5 465.3 L1065.6 465.3 L1068.8 465.3 L1071.9 465.3 L1075.0 465.3 L1078.1 465.3 L1081.2 465.3 L1084.4 465.3 L1087.5 465.3 L1090.6 465.3 L1093.8 465.3 L1096.9 465.3 L1100.0 465.3 L1101.0 464.5 L1103.5 458.5 L1105.0 458.0 L1110.0 459.5 L1113.3 460.5 L1116.7 461.5 L1120.0 462.5 L1123.3 463.5 L1126.7 464.5 L1130.0 465.5 L1133.3 466.3 L1136.7 467.2 L1140.0 468.0 L1143.3 468.7 L1146.7 469.3 L1150.0 470.0 L1153.3 470.7 L1156.7 471.3 L1160.0 472.0 L1163.3 472.5 L1166.7 473.0 L1170.0 473.5 L1173.0 473.8 L1176.0 474.1 L1179.0 474.4 L1182.0 474.7 L1185.0 475.0 L1188.0 475.2 L1191.0 475.4 L1194.0 475.6 L1197.0 475.8 L1200.0 476.0 L1203.0 476.1 L1206.0 476.1 L1209.0 476.1 L1212.0 476.2 L1215.0 476.2 L1218.0 476.3 L1221.0 476.4 L1224.0 476.4 L1227.0 476.4 L1230.0 476.5 L1233.0 476.6 L1236.0 476.6 L1239.0 476.6 L1242.0 476.7 L1245.0 476.8 L1248.0 476.8 L1251.0 476.9 L1254.0 476.9 L1257.0 476.9 L1260.0 477.0 L1263.0 477.0 L1266.0 477.0 L1269.0 477.0 L1272.0 477.0 L1275.1 477.0 L1278.1 477.0 L1281.1 477.0 L1284.1 477.0 L1287.1 477.0 L1290.1 477.0 L1293.1 477.0 L1296.1 477.0 L1299.2 477.0 L1302.2 477.0 L1305.2 477.0 L1308.2 477.0 L1311.2 477.0 L1314.2 477.0 L1317.2 477.0 L1320.2 477.0 L1323.3 477.0 L1326.3 477.0 L1329.3 477.0 L1332.3 477.0 L1335.3 477.0 L1338.3 477.0 L1341.3 477.0 L1344.3 477.0 L1347.4 477.0 L1350.4 477.0 L1353.4 477.0 L1356.4 477.0 L1359.4 477.0 L1362.4 477.0 L1365.4 477.0 L1368.4 477.0 L1371.5 477.0 L1374.5 477.0 L1377.5 477.0 L1380.5 477.0 L1383.5 477.1 L1386.5 477.1 L1389.5 477.1 L1392.5 477.1 L1395.6 477.1 L1398.6 477.1 L1401.6 477.1 L1404.6 477.1 L1407.6 477.1 L1410.6 477.1 L1413.6 477.1 L1416.6 477.1 L1419.7 477.1 L1422.7 477.1 L1425.7 477.1 L1428.7 477.1 L1431.7 477.1 L1434.7 477.1 L1437.7 477.1 L1440.7 477.1 L1443.7 477.1 L1446.8 477.1 L1449.8 477.1 L1452.8 477.1 L1455.8 477.1 L1458.8 477.1 L1461.8 477.1 L1464.8 477.1 L1467.8 477.1 L1470.9 477.1 L1473.9 477.1 L1476.9 477.1 L1479.9 477.1 L1482.9 477.1 L1485.9 477.1 L1488.9 477.1 L1491.9 477.1 L1495.0 477.1 L1498.0 477.1 L1501.0 477.1 L1504.0 477.1 L1507.0 477.1 L1510.0 477.1 L1513.0 477.1 L1516.0 477.1 L1519.1 477.1 L1522.1 477.1 L1525.1 477.1 L1528.1 477.1 L1531.1 477.1 L1534.1 477.1 L1537.1 477.1 L1540.1 477.1 L1543.2 477.1 L1546.2 477.1 L1549.2 477.1 L1552.2 477.1 L1555.2 477.1 L1558.2 477.1 L1561.2 477.1 L1564.2 477.1 L1567.3 477.1 L1570.3 477.1 L1573.3 477.1 L1576.3 477.1 L1579.3 477.1 L1582.3 477.1 L1585.3 477.1 L1588.3 477.1 L1591.3 477.1 L1594.4 477.1 L1597.4 477.1 L1600.4 477.1 L1603.4 477.1 L1606.4 477.1 L1609.4 477.1 L1612.4 477.1 L1615.4 477.1 L1618.5 477.1 L1621.5 477.1 L1624.5 477.1 L1627.5 477.1 L1630.5 477.2 L1633.5 477.2 L1636.5 477.2 L1639.5 477.2 L1642.6 477.2 L1645.6 477.2 L1648.6 477.2 L1651.6 477.2 L1654.6 477.2 L1657.6 477.2 L1660.6 477.2 L1663.6 477.2 L1666.7 477.2 L1669.7 477.2 L1672.7 477.2 L1675.7 477.2 L1678.7 477.2 L1681.7 477.2 L1684.7 477.2 L1687.7 477.2 L1690.8 477.2 L1693.8 477.2 L1696.8 477.2 L1699.8 477.2 L1702.8 477.2 L1705.8 477.2 L1708.8 477.2 L1711.8 477.2 L1714.9 477.2 L1717.9 477.2 L1720.9 477.2 L1723.9 477.2 L1726.9 477.2 L1729.9 477.2 L1732.9 477.2 L1735.9 477.2 L1739.0 477.2 L1742.0 477.2 L1745.0 477.2 L1748.0 477.2 L1751.0 477.2" fill="none" stroke="#78c428" stroke-width="1.40" stroke-linejoin="round"/>
<line x1="3" y1="583.5" x2="1751" y2="583.5" stroke="#f0a030" stroke-width="1.3" stroke-dasharray="5 5" stroke-dashoffset="5"/>
<path d="M3.0 745.5 L6.1 745.5 L9.1 745.5 L12.2 745.5 L15.2 745.5 L18.3 745.5 L21.4 745.5 L24.4 745.5 L27.5 745.5 L30.5 745.5 L33.6 745.5 L36.6 745.5 L39.7 745.5 L42.8 745.5 L45.8 745.5 L48.9 745.5 L51.9 745.5 L55.0 745.5 L55.0 654.5 L58.3 654.5 L61.6 654.5 L64.8 654.5 L68.1 654.5 L71.4 654.5 L74.7 654.5 L77.9 654.5 L81.2 654.5 L84.5 654.5 L84.5 642.0 L90.0 642.0 L93.0 654.5 L96.1 654.5 L99.2 654.5 L102.2 654.5 L105.3 654.5 L108.4 654.5 L111.5 654.5 L114.6 654.5 L117.7 654.5 L120.8 654.5 L123.8 654.5 L126.9 654.5 L130.0 654.5 L131.0 648.0 L132.0 654.5 L135.0 654.5 L138.0 654.5 L141.0 654.5 L144.0 654.5 L147.0 654.5 L150.0 654.5 L153.0 654.5 L156.0 654.5 L159.0 654.5 L162.0 654.5 L165.0 654.5 L168.0 654.5 L171.0 654.5 L174.0 654.5 L177.0 654.5 L180.0 654.5 L183.0 654.5 L186.0 654.5 L189.0 654.5 L192.0 654.5 L195.0 654.5 L198.0 654.5 L201.0 654.5 L204.0 654.5 L207.0 654.5 L210.0 654.5 L213.0 654.5 L216.0 654.5 L219.0 654.5 L222.0 654.5 L225.0 654.5 L228.0 654.5 L231.0 654.5 L234.0 654.5 L237.0 654.5 L240.0 654.5 L243.0 654.5 L246.0 654.5 L249.0 654.5 L252.0 654.5 L255.0 654.5 L258.0 654.5 L261.0 654.5 L264.0 654.5 L267.0 654.5 L270.0 654.5 L273.0 654.5 L276.0 654.5 L279.0 654.5 L282.0 654.5 L285.0 654.5 L288.0 654.5 L291.0 654.5 L294.0 654.5 L297.0 654.5 L300.0 654.5 L303.0 654.5 L306.0 654.5 L309.0 654.5 L312.0 654.5 L315.0 654.5 L318.0 654.5 L321.0 654.5 L324.0 654.5 L327.0 654.5 L330.0 654.5 L333.0 654.5 L336.0 654.5 L339.0 654.5 L342.0 654.5 L345.0 654.5 L348.0 654.5 L351.0 654.5 L354.0 654.5 L357.0 654.5 L360.0 654.5 L363.0 654.5 L366.0 654.5 L369.0 654.5 L372.0 654.5 L375.0 654.5 L378.0 654.5 L381.0 654.5 L384.0 654.5 L387.0 654.5 L390.0 654.5 L393.0 654.5 L396.0 654.5 L399.0 654.5 L402.0 654.5 L405.0 654.5 L408.0 654.5 L411.0 654.5 L414.0 654.5 L417.0 654.5 L420.0 654.5 L423.0 654.5 L426.0 654.5 L429.0 654.5 L432.0 654.5 L435.0 654.5 L438.0 654.5 L441.0 654.5 L444.0 654.5 L447.0 654.5 L450.0 654.5 L453.0 654.5 L456.0 654.5 L459.0 654.5 L462.0 654.5 L465.0 654.5 L468.0 654.5 L471.0 654.5 L474.0 654.5 L477.0 654.5 L480.0 654.5 L483.0 654.5 L486.0 654.5 L489.0 654.5 L492.0 654.5 L495.0 654.5 L498.0 654.5 L501.0 654.5 L504.0 654.5 L507.0 654.5 L510.0 654.5 L513.0 654.5 L516.0 654.5 L519.0 654.5 L522.0 654.5 L525.0 654.5 L528.0 654.5 L531.0 654.5 L534.0 654.5 L537.0 654.5 L540.0 654.5 L543.0 654.5 L546.0 654.5 L549.0 654.5 L552.0 654.5 L555.0 654.5 L558.0 654.5 L561.0 654.5 L564.0 654.5 L567.0 654.5 L570.0 654.5 L573.0 654.5 L576.0 654.5 L579.0 654.5 L582.0 654.5 L585.0 654.5 L588.0 654.5 L591.0 654.5 L594.0 654.5 L597.0 654.5 L600.0 654.5 L603.0 654.5 L606.0 654.5 L609.0 654.5 L612.0 654.5 L615.0 654.5 L618.0 654.5 L621.0 654.5 L624.0 654.5 L627.0 654.5 L630.0 654.5 L633.0 654.5 L636.0 654.5 L639.0 654.5 L642.0 654.5 L645.0 654.5 L648.0 654.5 L651.0 654.5 L654.0 654.5 L657.0 654.5 L660.0 654.5 L663.0 654.5 L666.0 654.5 L669.0 654.5 L672.0 654.5 L675.0 654.5 L678.0 654.5 L681.0 654.5 L684.0 654.5 L687.0 654.5 L690.0 654.5 L693.0 654.5 L696.0 654.5 L699.0 654.5 L702.0 654.5 L705.0 654.5 L708.0 654.5 L711.0 654.5 L714.0 654.5 L717.0 654.5 L720.0 654.5 L723.0 654.5 L726.0 654.5 L729.0 654.5 L732.0 654.5 L735.0 654.5 L738.0 654.5 L741.0 654.5 L744.0 654.5 L747.0 654.5 L750.0 654.5 L753.0 654.5 L756.0 654.5 L759.0 654.5 L762.0 654.5 L765.0 654.5 L768.0 654.5 L771.0 654.5 L774.0 654.5 L777.0 654.5 L780.0 654.5 L783.0 654.5 L786.0 654.5 L789.0 654.5 L792.0 654.5 L795.0 654.5 L798.0 654.5 L801.0 654.5 L804.0 654.5 L807.0 654.5 L810.0 654.5 L813.0 654.5 L816.0 654.5 L819.0 654.5 L822.0 654.5 L825.0 654.5 L828.0 654.5 L831.0 654.5 L834.0 654.5 L837.0 654.5 L840.0 654.5 L843.0 654.5 L846.0 654.5 L849.0 654.5 L852.0 654.5 L855.0 654.5 L858.0 654.5 L861.0 654.5 L864.0 654.5 L867.0 654.5 L870.0 654.5 L873.0 654.5 L876.0 654.5 L877.0 643.0 L879.0 654.5 L882.0 654.5 L885.0 654.5 L888.0 654.5 L891.0 654.5 L894.0 654.5 L897.0 654.5 L900.0 654.5 L903.0 654.5 L906.0 654.5 L909.0 654.5 L912.0 654.5 L915.0 654.5 L918.0 654.5 L921.0 654.5 L924.0 654.5 L927.0 654.5 L930.0 654.5 L933.0 654.5 L936.0 654.5 L939.0 654.5 L942.0 654.5 L945.0 654.5 L948.0 654.5 L951.0 654.5 L954.0 654.5 L957.0 654.5 L960.0 654.5 L963.0 654.5 L966.0 654.5 L969.0 654.5 L972.0 654.5 L975.0 654.5 L978.0 654.5 L981.0 654.5 L984.0 654.5 L987.0 654.5 L990.0 654.5 L993.0 654.5 L996.0 654.5 L999.0 654.5 L1002.0 654.5 L1005.0 654.5 L1008.0 654.5 L1011.0 654.5 L1014.0 654.5 L1017.0 654.5 L1020.0 654.5 L1023.0 654.5 L1026.0 654.5 L1029.0 654.5 L1032.0 654.5 L1035.0 654.5 L1038.0 654.5 L1041.0 654.5 L1044.0 654.5 L1047.0 654.5 L1050.0 654.5 L1053.0 654.5 L1056.0 654.5 L1059.0 654.5 L1062.0 654.5 L1065.0 654.5 L1068.0 654.5 L1071.0 654.5 L1074.0 654.5 L1077.0 654.5 L1080.0 654.5 L1083.0 654.5 L1086.0 654.5 L1089.0 654.5 L1092.0 654.5 L1095.0 654.5 L1098.0 654.5 L1101.0 654.5 L1104.0 643.5 L1106.0 650.0 L1108.0 654.5 L1110.0 643.0 L1114.0 654.5 L1117.5 654.5 L1121.1 654.5 L1124.6 654.5 L1125.0 643.0 L1128.0 654.5 L1128.5 643.0 L1132.0 654.5 L1134.0 643.0 L1137.0 654.5 L1139.0 648.0 L1140.0 654.5 L1143.7 654.5 L1147.3 654.5 L1151.0 654.5 L1151.5 643.0 L1153.5 654.5 L1156.8 654.5 L1160.0 654.5 L1160.5 648.0 L1161.5 654.5 L1164.5 654.5 L1167.5 654.5 L1170.5 654.5 L1173.5 654.5 L1176.5 654.5 L1179.5 654.5 L1182.6 654.5 L1185.6 654.5 L1188.6 654.5 L1191.6 654.5 L1194.6 654.5 L1197.6 654.5 L1200.6 654.5 L1203.6 654.5 L1206.6 654.5 L1209.6 654.5 L1212.6 654.5 L1215.6 654.5 L1218.6 654.5 L1221.7 654.5 L1224.7 654.5 L1227.7 654.5 L1230.7 654.5 L1233.7 654.5 L1236.7 654.5 L1239.7 654.5 L1242.7 654.5 L1245.7 654.5 L1248.7 654.5 L1251.7 654.5 L1254.7 654.5 L1257.7 654.5 L1260.8 654.5 L1263.8 654.5 L1266.8 654.5 L1269.8 654.5 L1272.8 654.5 L1275.8 654.5 L1278.8 654.5 L1281.8 654.5 L1284.8 654.5 L1287.8 654.5 L1290.8 654.5 L1293.8 654.5 L1296.8 654.5 L1299.9 654.5 L1302.9 654.5 L1305.9 654.5 L1308.9 654.5 L1311.9 654.5 L1314.9 654.5 L1317.9 654.5 L1320.9 654.5 L1323.9 654.5 L1326.9 654.5 L1329.9 654.5 L1332.9 654.5 L1335.9 654.5 L1339.0 654.5 L1342.0 654.5 L1345.0 654.5 L1348.0 654.5 L1351.0 654.5 L1354.0 654.5 L1357.0 654.5 L1360.0 654.5 L1363.0 654.5 L1366.0 654.5 L1369.0 654.5 L1372.0 654.5 L1375.0 654.5 L1378.1 654.5 L1381.1 654.5 L1384.1 654.5 L1387.1 654.5 L1390.1 654.5 L1393.1 654.5 L1396.1 654.5 L1399.1 654.5 L1402.1 654.5 L1405.1 654.5 L1408.1 654.5 L1411.1 654.5 L1414.1 654.5 L1417.2 654.5 L1420.2 654.5 L1423.2 654.5 L1426.2 654.5 L1429.2 654.5 L1432.2 654.5 L1435.2 654.5 L1438.2 654.5 L1441.2 654.5 L1444.2 654.5 L1447.2 654.5 L1450.2 654.5 L1453.2 654.5 L1456.2 654.5 L1459.3 654.5 L1462.3 654.5 L1465.3 654.5 L1468.3 654.5 L1471.3 654.5 L1474.3 654.5 L1477.3 654.5 L1480.3 654.5 L1483.3 654.5 L1486.3 654.5 L1489.3 654.5 L1492.3 654.5 L1495.3 654.5 L1498.4 654.5 L1501.4 654.5 L1504.4 654.5 L1507.4 654.5 L1510.4 654.5 L1513.4 654.5 L1516.4 654.5 L1519.4 654.5 L1522.4 654.5 L1525.4 654.5 L1528.4 654.5 L1531.4 654.5 L1534.4 654.5 L1537.5 654.5 L1540.5 654.5 L1543.5 654.5 L1546.5 654.5 L1549.5 654.5 L1552.5 654.5 L1555.5 654.5 L1558.5 654.5 L1561.5 654.5 L1564.5 654.5 L1567.5 654.5 L1570.5 654.5 L1573.5 654.5 L1576.6 654.5 L1579.6 654.5 L1582.6 654.5 L1585.6 654.5 L1588.6 654.5 L1591.6 654.5 L1594.6 654.5 L1597.6 654.5 L1600.6 654.5 L1603.6 654.5 L1606.6 654.5 L1609.6 654.5 L1612.6 654.5 L1615.7 654.5 L1618.7 654.5 L1621.7 654.5 L1624.7 654.5 L1627.7 654.5 L1630.7 654.5 L1633.7 654.5 L1636.7 654.5 L1639.7 654.5 L1642.7 654.5 L1645.7 654.5 L1648.7 654.5 L1651.7 654.5 L1654.8 654.5 L1657.8 654.5 L1660.8 654.5 L1663.8 654.5 L1666.8 654.5 L1669.8 654.5 L1672.8 654.5 L1675.8 654.5 L1678.8 654.5 L1681.8 654.5 L1684.8 654.5 L1687.8 654.5 L1690.8 654.5 L1693.9 654.5 L1696.9 654.5 L1699.9 654.5 L1702.9 654.5 L1705.9 654.5 L1708.9 654.5 L1711.9 654.5 L1714.9 654.5 L1717.9 654.5 L1720.9 654.5 L1723.9 654.5 L1726.9 654.5 L1729.9 654.5 L1733.0 654.5 L1736.0 654.5 L1739.0 654.5 L1742.0 654.5 L1745.0 654.5 L1748.0 654.5 L1751.0 654.5" fill="none" stroke="#1c1ca8" stroke-width="1.15" stroke-linejoin="round"/>
<path d="M42.0 862.5 L45.7 862.5 L49.3 862.5 L53.0 862.5 L56.4 862.1 L59.8 861.7 L63.2 861.3 L66.6 860.9 L70.0 860.5 L73.0 860.2 L76.0 859.9 L79.0 859.6 L82.0 859.3 L85.0 859.0 L88.0 858.7 L91.0 858.4 L94.0 858.1 L97.0 857.8 L100.0 857.5 L103.0 857.1 L106.0 856.7 L109.1 856.3 L112.1 855.9 L115.1 855.5 L118.1 855.1 L121.2 854.7 L124.2 854.3 L127.2 853.9 L130.2 853.5 L133.3 853.2 L136.3 852.8 L139.3 852.4 L142.3 852.0 L145.3 851.6 L148.4 851.2 L151.4 850.8 L154.4 850.4 L157.4 850.0 L160.5 849.6 L163.5 849.2 L166.5 848.8 L169.5 848.4 L172.6 848.0 L175.6 847.6 L178.6 847.2 L181.6 846.8 L184.7 846.4 L187.7 846.0 L190.7 845.6 L193.7 845.2 L196.7 844.8 L199.8 844.5 L202.8 844.1 L205.8 843.7 L208.8 843.3 L211.9 842.9 L214.9 842.5 L217.9 842.1 L220.9 841.7 L224.0 841.3 L227.0 840.9 L230.0 840.5 L233.0 840.2 L236.0 839.9 L239.1 839.5 L242.1 839.2 L245.1 838.9 L248.1 838.6 L251.1 838.3 L254.1 837.9 L257.2 837.6 L260.2 837.3 L263.2 837.0 L266.2 836.7 L269.2 836.4 L272.2 836.0 L275.3 835.7 L278.3 835.4 L281.3 835.1 L284.3 834.8 L287.3 834.4 L290.3 834.1 L293.4 833.8 L296.4 833.5 L299.4 833.2 L302.4 832.8 L305.4 832.5 L308.4 832.2 L311.5 831.9 L314.5 831.6 L317.5 831.2 L320.5 830.9 L323.5 830.6 L326.6 830.3 L329.6 830.0 L332.6 829.7 L335.6 829.3 L338.6 829.0 L341.6 828.7 L344.7 828.4 L347.7 828.1 L350.7 827.7 L353.7 827.4 L356.7 827.1 L359.7 826.8 L362.8 826.5 L365.8 826.1 L368.8 825.8 L371.8 825.5 L374.8 825.2 L377.8 824.9 L380.9 824.6 L383.9 824.2 L386.9 823.9 L389.9 823.6 L392.9 823.3 L395.9 823.0 L399.0 822.6 L402.0 822.3 L405.0 822.0 L408.0 821.7 L411.0 821.4 L414.1 821.1 L417.1 820.8 L420.1 820.5 L423.1 820.2 L426.1 819.9 L429.1 819.7 L432.2 819.4 L435.2 819.1 L438.2 818.8 L441.2 818.5 L444.2 818.2 L447.2 817.9 L450.3 817.6 L453.3 817.3 L456.3 817.0 L459.3 816.7 L462.3 816.4 L465.3 816.1 L468.4 815.8 L471.4 815.6 L474.4 815.3 L477.4 815.0 L480.4 814.7 L483.4 814.4 L486.5 814.1 L489.5 813.8 L492.5 813.5 L495.5 813.2 L498.5 812.9 L501.6 812.6 L504.6 812.3 L507.6 812.0 L510.6 811.7 L513.6 811.4 L516.6 811.2 L519.7 810.9 L522.7 810.6 L525.7 810.3 L528.7 810.0 L531.7 809.7 L534.7 809.4 L537.8 809.1 L540.8 808.8 L543.8 808.5 L546.8 808.2 L549.8 807.9 L552.8 807.6 L555.9 807.3 L558.9 807.1 L561.9 806.8 L564.9 806.5 L567.9 806.2 L570.9 805.9 L574.0 805.6 L577.0 805.3 L580.0 805.0 L583.0 804.8 L586.0 804.6 L589.1 804.3 L592.1 804.1 L595.1 803.9 L598.1 803.7 L601.1 803.4 L604.1 803.2 L607.2 803.0 L610.2 802.8 L613.2 802.5 L616.2 802.3 L619.2 802.1 L622.2 801.9 L625.3 801.6 L628.3 801.4 L631.3 801.2 L634.3 801.0 L637.3 800.7 L640.3 800.5 L643.4 800.3 L646.4 800.1 L649.4 799.8 L652.4 799.6 L655.4 799.4 L658.4 799.2 L661.5 798.9 L664.5 798.7 L667.5 798.5 L670.5 798.3 L673.5 798.1 L676.6 797.8 L679.6 797.6 L682.6 797.4 L685.6 797.2 L688.6 796.9 L691.6 796.7 L694.7 796.5 L697.7 796.3 L700.7 796.0 L703.7 795.8 L706.7 795.6 L709.7 795.4 L712.8 795.1 L715.8 794.9 L718.8 794.7 L721.8 794.5 L724.8 794.2 L727.8 794.0 L730.9 793.8 L733.9 793.6 L736.9 793.3 L739.9 793.1 L742.9 792.9 L745.9 792.7 L749.0 792.4 L752.0 792.2 L755.0 792.0 L758.0 791.8 L761.0 791.7 L764.1 791.5 L767.1 791.3 L770.1 791.1 L773.1 791.0 L776.1 790.8 L779.1 790.6 L782.2 790.4 L785.2 790.3 L788.2 790.1 L791.2 789.9 L794.2 789.8 L797.2 789.6 L800.3 789.4 L803.3 789.2 L806.3 789.1 L809.3 788.9 L812.3 788.7 L815.3 788.6 L818.4 788.4 L821.4 788.2 L824.4 788.0 L827.4 787.9 L830.4 787.7 L833.4 787.5 L836.5 787.3 L839.5 787.2 L842.5 787.0 L845.5 786.8 L848.5 786.7 L851.6 786.5 L854.6 786.3 L857.6 786.1 L860.6 786.0 L863.6 785.8 L866.6 785.6 L869.7 785.4 L872.7 785.3 L875.7 785.1 L878.7 784.9 L881.7 784.8 L884.7 784.6 L887.8 784.4 L890.8 784.2 L893.8 784.1 L896.8 783.9 L899.8 783.7 L902.8 783.6 L905.9 783.4 L908.9 783.2 L911.9 783.0 L914.9 782.9 L917.9 782.7 L920.9 782.5 L924.0 782.3 L927.0 782.2 L930.0 782.0 L933.0 781.8 L936.0 781.6 L939.0 781.4 L942.0 781.2 L945.0 781.0 L948.0 780.8 L951.0 780.6 L954.0 780.4 L957.0 780.2 L960.0 780.0 L963.0 779.9 L966.1 779.8 L969.1 779.7 L972.2 779.6 L975.2 779.5 L978.3 779.3 L981.3 779.2 L984.3 779.1 L987.4 779.0 L990.4 778.9 L993.5 778.8 L996.5 778.7 L999.6 778.6 L1002.6 778.5 L1005.7 778.4 L1008.7 778.3 L1011.7 778.2 L1014.8 778.0 L1017.8 777.9 L1020.9 777.8 L1023.9 777.7 L1027.0 777.6 L1030.0 777.5 L1033.0 777.4 L1036.1 777.3 L1039.1 777.2 L1042.2 777.1 L1045.2 777.0 L1048.3 776.8 L1051.3 776.7 L1054.3 776.6 L1057.4 776.5 L1060.4 776.4 L1063.5 776.3 L1066.5 776.2 L1069.6 776.1 L1072.6 776.0 L1075.7 775.9 L1078.7 775.8 L1081.7 775.7 L1084.8 775.5 L1087.8 775.4 L1090.9 775.3 L1093.9 775.2 L1097.0 775.1 L1100.0 775.0 L1103.0 774.9 L1106.1 774.9 L1109.1 774.8 L1112.1 774.8 L1115.2 774.7 L1118.2 774.6 L1121.2 774.6 L1124.2 774.5 L1127.3 774.5 L1130.3 774.4 L1133.3 774.3 L1136.4 774.3 L1139.4 774.2 L1142.4 774.2 L1145.5 774.1 L1148.5 774.0 L1151.5 774.0 L1154.5 773.9 L1157.6 773.8 L1160.6 773.8 L1163.6 773.7 L1166.7 773.7 L1169.7 773.6 L1172.7 773.5 L1175.8 773.5 L1178.8 773.4 L1181.8 773.4 L1184.8 773.3 L1187.9 773.2 L1190.9 773.2 L1193.9 773.1 L1197.0 773.1 L1200.0 773.0 L1203.0 772.9 L1206.1 772.9 L1209.1 772.8 L1212.1 772.7 L1215.2 772.6 L1218.2 772.6 L1221.2 772.5 L1224.3 772.4 L1227.3 772.4 L1230.4 772.3 L1233.4 772.2 L1236.4 772.1 L1239.5 772.1 L1242.5 772.0 L1245.5 771.9 L1248.6 771.9 L1251.6 771.8 L1254.6 771.7 L1257.7 771.6 L1260.7 771.6 L1263.8 771.5 L1266.8 771.4 L1269.8 771.4 L1272.9 771.3 L1275.9 771.2 L1278.9 771.1 L1282.0 771.1 L1285.0 771.0 L1288.0 771.0 L1291.0 771.0 L1294.0 771.0 L1297.1 771.0 L1300.1 771.0 L1303.1 771.0 L1306.1 771.0 L1309.1 771.0 L1312.1 771.0 L1315.1 771.0 L1318.2 771.0 L1321.2 771.0 L1324.2 771.0 L1327.2 771.0 L1330.2 771.0 L1333.2 771.0 L1336.2 771.0 L1339.3 771.0 L1342.3 771.0 L1345.3 771.0 L1348.3 771.0 L1351.3 771.0 L1354.3 771.0 L1357.4 771.0 L1360.4 771.0 L1363.4 771.0 L1366.4 771.0 L1369.4 771.0 L1372.4 771.0 L1375.4 771.0 L1378.5 771.0 L1381.5 771.0 L1384.5 771.0 L1387.5 771.0 L1390.5 771.0 L1393.5 771.0 L1396.5 771.0 L1399.6 771.0 L1402.6 771.0 L1405.6 771.0 L1408.6 771.0 L1411.6 771.0 L1414.6 771.0 L1417.6 771.0 L1420.7 771.0 L1423.7 771.0 L1426.7 771.0 L1429.7 771.0 L1432.7 771.0 L1435.7 771.0 L1438.8 771.0 L1441.8 771.0 L1444.8 771.0 L1447.8 771.0 L1450.8 771.0 L1453.8 771.0 L1456.8 771.0 L1459.9 771.0 L1462.9 771.0 L1465.9 771.0 L1468.9 771.0 L1471.9 771.0 L1474.9 771.0 L1477.9 771.0 L1481.0 771.0 L1484.0 771.0 L1487.0 771.0 L1490.0 771.0 L1493.0 771.1 L1496.1 771.1 L1499.1 771.2 L1502.1 771.3 L1505.2 771.4 L1508.2 771.4 L1511.2 771.5 L1514.3 771.6 L1517.3 771.6 L1520.4 771.7 L1523.4 771.8 L1526.4 771.9 L1529.5 771.9 L1532.5 772.0 L1535.5 772.1 L1538.6 772.1 L1541.6 772.2 L1544.6 772.3 L1547.7 772.4 L1550.7 772.4 L1553.8 772.5 L1556.8 772.6 L1559.8 772.6 L1562.9 772.7 L1565.9 772.8 L1568.9 772.9 L1572.0 772.9 L1575.0 773.0 L1578.0 773.1 L1581.1 773.1 L1584.1 773.2 L1587.1 773.3 L1590.2 773.3 L1593.2 773.4 L1596.2 773.5 L1599.3 773.6 L1602.3 773.6 L1605.3 773.7 L1608.4 773.8 L1611.4 773.8 L1614.4 773.9 L1617.5 774.0 L1620.5 774.0 L1623.6 774.1 L1626.6 774.2 L1629.6 774.2 L1632.7 774.3 L1635.7 774.4 L1638.7 774.4 L1641.8 774.5 L1644.8 774.6 L1647.8 774.7 L1650.9 774.7 L1653.9 774.8 L1656.9 774.9 L1660.0 774.9 L1663.0 775.0 L1666.0 775.1 L1669.1 775.1 L1672.1 775.2 L1675.1 775.3 L1678.2 775.3 L1681.2 775.4 L1684.2 775.5 L1687.3 775.6 L1690.3 775.6 L1693.3 775.7 L1696.4 775.8 L1699.4 775.8 L1702.4 775.9 L1705.5 776.0 L1708.5 776.0 L1711.6 776.1 L1714.6 776.2 L1717.6 776.2 L1720.7 776.3 L1723.7 776.4 L1726.7 776.4 L1729.8 776.5 L1732.8 776.6 L1735.8 776.7 L1738.9 776.7 L1741.9 776.8 L1744.9 776.9 L1748.0 776.9 L1751.0 777.0" fill="none" stroke="#f0901c" stroke-width="1.40" stroke-linejoin="round"/>
<path d="M3.0 979.0 L6.0 979.0 L9.1 979.0 L12.1 978.9 L15.2 978.9 L18.2 978.9 L21.2 978.9 L24.3 978.9 L27.3 978.8 L30.3 978.8 L33.4 978.8 L36.4 978.8 L39.5 978.8 L42.5 978.8 L45.5 978.7 L48.6 978.7 L51.6 978.7 L54.7 978.7 L57.7 978.7 L60.7 978.6 L63.8 978.6 L66.8 978.6 L69.8 978.6 L72.9 978.6 L75.9 978.5 L79.0 978.5 L82.0 978.5 L85.1 978.5 L88.1 978.5 L91.2 978.5 L94.2 978.4 L97.3 978.4 L100.3 978.4 L103.4 978.4 L106.4 978.4 L109.5 978.4 L112.5 978.4 L115.6 978.4 L118.6 978.3 L121.7 978.3 L124.8 978.3 L127.8 978.3 L130.9 978.3 L133.9 978.3 L137.0 978.3 L140.0 978.2 L143.1 978.2 L146.1 978.2 L149.2 978.2 L152.2 978.2 L155.3 978.2 L158.4 978.2 L161.4 978.1 L164.5 978.1 L167.5 978.1 L170.6 978.1 L173.6 978.1 L176.7 978.1 L179.7 978.1 L182.8 978.1 L185.8 978.0 L188.9 978.0 L191.9 978.0 L195.0 978.0 L198.2 977.5 L201.4 977.0 L204.5 976.5 L207.7 976.0 L210.9 975.5 L214.1 975.0 L217.3 974.5 L220.5 974.0 L223.6 973.5 L226.8 973.0 L230.0 972.5 L233.0 972.0 L236.1 971.6 L239.1 971.1 L242.2 970.7 L245.2 970.2 L248.3 969.8 L251.3 969.3 L254.3 968.8 L257.4 968.4 L260.4 967.9 L263.5 967.5 L266.5 967.0 L269.6 966.6 L272.6 966.1 L275.7 965.7 L278.7 965.2 L281.7 964.7 L284.8 964.3 L287.8 963.8 L290.9 963.4 L293.9 962.9 L297.0 962.5 L300.0 962.0 L303.0 961.4 L306.0 961.4 L309.0 960.9 L312.0 960.5 L315.0 959.8 L318.0 959.6 L321.0 959.4 L324.0 958.8 L327.0 958.2 L330.0 958.0 L333.0 957.8 L336.0 957.0 L339.0 956.6 L342.0 956.3 L345.0 956.1 L348.0 955.8 L351.0 955.0 L354.0 954.6 L357.0 954.2 L360.0 953.9 L363.0 953.6 L366.0 953.0 L369.0 952.7 L372.0 952.2 L375.0 952.3 L378.0 951.7 L381.0 951.0 L384.0 951.1 L387.0 950.2 L390.0 949.9 L393.0 949.9 L396.0 949.4 L399.0 948.9 L402.0 948.4 L405.0 948.0 L408.0 947.5 L411.0 947.5 L414.1 946.8 L417.1 946.6 L420.1 946.4 L423.1 945.9 L426.1 945.8 L429.1 945.7 L432.2 945.3 L435.2 944.9 L438.2 944.7 L441.2 944.3 L444.2 943.8 L447.2 943.7 L450.3 943.3 L453.3 943.2 L456.3 943.0 L459.3 942.4 L462.3 942.1 L465.3 941.9 L468.4 941.4 L471.4 941.0 L474.4 941.0 L477.4 940.8 L480.4 940.4 L483.4 940.1 L486.5 939.8 L489.5 939.4 L492.5 939.1 L495.5 938.7 L498.5 938.3 L501.6 938.1 L504.6 937.5 L507.6 937.4 L510.6 937.3 L513.6 937.0 L516.6 936.6 L519.7 936.1 L522.7 935.9 L525.7 935.6 L528.7 935.3 L531.7 934.9 L534.7 934.8 L537.8 934.6 L540.8 933.8 L543.8 933.8 L546.8 933.6 L549.8 933.0 L552.8 932.8 L555.9 932.8 L558.9 931.9 L561.9 931.9 L564.9 931.3 L567.9 931.4 L570.9 931.2 L574.0 930.6 L577.0 930.1 L580.0 930.0 L583.0 929.8 L586.0 929.6 L589.1 929.5 L592.1 929.2 L595.1 929.0 L598.1 929.0 L601.1 928.6 L604.1 928.3 L607.2 928.4 L610.2 927.8 L613.2 927.8 L616.2 927.5 L619.2 927.5 L622.2 926.9 L625.3 927.2 L628.3 926.6 L631.3 926.2 L634.3 926.1 L637.3 926.0 L640.3 925.6 L643.4 925.6 L646.4 925.4 L649.4 925.4 L652.4 924.9 L655.4 924.7 L658.4 924.5 L661.5 924.6 L664.5 924.5 L667.5 924.0 L670.5 923.6 L673.5 923.8 L676.6 923.3 L679.6 923.0 L682.6 922.7 L685.6 922.9 L688.6 922.7 L691.6 922.4 L694.7 922.1 L697.7 922.0 L700.7 921.6 L703.7 921.8 L706.7 921.2 L709.7 921.2 L712.8 921.1 L715.8 920.9 L718.8 920.5 L721.8 920.2 L724.8 920.1 L727.8 919.6 L730.9 919.9 L733.9 919.4 L736.9 919.5 L739.9 918.9 L742.9 918.8 L745.9 918.5 L749.0 918.4 L752.0 918.0 L755.0 918.0 L758.0 917.7 L761.1 918.1 L764.1 917.8 L767.2 917.7 L770.2 917.7 L773.3 917.8 L776.3 917.7 L779.4 917.8 L782.4 917.8 L785.5 917.6 L788.5 917.9 L791.6 917.8 L794.6 917.3 L797.7 917.7 L800.7 917.7 L803.8 917.6 L806.8 917.2 L809.9 917.5 L812.9 917.4 L816.0 917.0 L819.0 916.9 L822.1 917.5 L825.1 917.3 L828.2 917.0 L831.2 916.8 L834.3 916.8 L837.3 916.9 L840.4 917.1 L843.4 916.8 L846.5 916.7 L849.5 917.1 L852.6 917.0 L855.6 916.6 L858.7 917.0 L861.7 916.8 L864.8 916.9 L867.8 916.7 L870.9 916.8 L873.9 916.7 L877.0 916.7 L880.0 916.5 L883.2 917.4 L886.5 918.9 L889.8 919.9 L893.0 921.0 L896.0 919.9 L899.0 918.5 L902.0 917.5 L905.0 916.0 L908.1 915.6 L911.2 915.0 L914.4 914.5 L917.5 914.0 L920.6 913.8 L923.8 913.1 L926.9 912.9 L930.0 912.5 L933.0 911.9 L936.0 911.8 L939.0 911.4 L942.0 911.1 L945.0 911.0 L948.0 910.1 L951.0 910.3 L954.0 909.7 L957.0 909.4 L960.0 909.0 L963.1 908.8 L966.2 908.6 L969.2 908.0 L972.3 907.7 L975.4 907.7 L978.5 906.9 L981.5 906.9 L984.6 906.6 L987.7 905.9 L990.8 906.0 L993.8 905.7 L996.9 905.6 L1000.0 905.0 L1003.0 904.8 L1006.1 905.1 L1009.1 904.7 L1012.1 904.6 L1015.2 904.8 L1018.2 904.2 L1021.2 904.5 L1024.2 904.3 L1027.3 904.1 L1030.3 904.3 L1033.3 903.9 L1036.4 903.9 L1039.4 903.8 L1042.4 903.9 L1045.5 903.5 L1048.5 903.5 L1051.5 903.4 L1054.5 903.4 L1057.6 903.5 L1060.6 903.1 L1063.6 903.3 L1066.7 902.9 L1069.7 902.9 L1072.7 902.7 L1075.8 902.7 L1078.8 902.9 L1081.8 902.6 L1084.8 902.6 L1087.9 902.3 L1090.9 902.2 L1093.9 902.1 L1097.0 902.1 L1100.0 902.0 L1102.0 900.0 L1102.5 915.0 L1103.0 929.0 L1104.0 938.0 L1106.0 948.0 L1108.0 954.0 L1111.0 960.0 L1115.0 965.0 L1120.0 969.0 L1124.0 971.0 L1128.0 973.0 L1131.0 973.6 L1134.0 974.2 L1137.0 974.9 L1140.0 975.5 L1143.3 975.8 L1146.7 976.0 L1150.0 976.2 L1153.3 976.5 L1156.7 976.8 L1160.0 977.0 L1163.0 977.0 L1166.0 977.0 L1169.0 977.0 L1172.0 977.0 L1175.0 977.0 L1178.0 977.0 L1181.0 977.0 L1184.0 977.0 L1187.0 977.0 L1190.0 977.0 L1193.0 977.0 L1196.0 977.0 L1199.0 977.0 L1202.0 977.0 L1205.0 977.0 L1208.0 977.0 L1211.0 977.0 L1214.0 977.0 L1217.0 977.0 L1220.0 977.0 L1223.0 977.0 L1226.0 977.0 L1229.0 977.0 L1232.0 977.0 L1235.0 977.0 L1238.0 977.0 L1241.0 977.0 L1244.0 977.0 L1247.0 977.0 L1250.0 977.0 L1253.0 977.0 L1256.0 977.0 L1259.0 977.0 L1262.0 977.0 L1265.0 977.0 L1268.0 977.0 L1271.0 977.0 L1274.0 977.0 L1277.0 977.0 L1280.0 977.0 L1283.0 977.0 L1286.0 977.0 L1289.0 977.0 L1292.0 977.0 L1295.0 977.0 L1298.0 977.0 L1301.0 977.0 L1304.0 977.0 L1307.0 977.0 L1310.0 977.0 L1313.0 977.0 L1316.0 977.0 L1319.0 977.0 L1322.0 977.0 L1325.0 977.0 L1328.0 977.0 L1331.0 977.0 L1334.0 977.0 L1337.0 977.0 L1340.0 977.0 L1343.0 977.0 L1346.0 977.0 L1349.0 977.0 L1352.0 977.0 L1355.0 977.0 L1358.0 977.0 L1361.0 977.0 L1364.0 977.0 L1367.0 977.0 L1370.0 977.0 L1373.0 977.0 L1376.0 977.0 L1379.0 977.0 L1382.0 977.0 L1385.0 977.0 L1388.0 977.0 L1391.0 977.0 L1394.0 977.0 L1397.0 977.0 L1400.0 977.0 L1403.0 977.0 L1406.0 977.0 L1409.0 977.0 L1412.0 977.0 L1415.0 977.0 L1418.0 977.0 L1421.0 977.0 L1424.0 977.0 L1427.0 977.0 L1430.0 977.0 L1433.0 977.0 L1436.0 977.0 L1439.0 977.0 L1442.0 977.0 L1445.0 977.0 L1448.0 977.0 L1451.0 977.0 L1454.0 977.0 L1457.0 977.0 L1460.0 977.0 L1463.0 977.0 L1466.0 977.0 L1469.0 977.0 L1472.0 977.0 L1475.0 977.0 L1478.0 977.0 L1481.0 977.0 L1484.0 977.0 L1487.0 977.0 L1490.0 977.0 L1493.0 977.0 L1496.0 977.0 L1499.0 977.0 L1502.0 977.0 L1505.0 977.0 L1508.0 977.0 L1511.0 977.0 L1514.0 977.0 L1517.0 977.0 L1520.0 977.0 L1523.0 977.0 L1526.0 977.0 L1529.0 977.0 L1532.0 977.0 L1535.0 977.0 L1538.0 977.0 L1541.0 977.0 L1544.0 977.0 L1547.0 977.0 L1550.0 977.0 L1553.0 977.0 L1556.0 977.0 L1559.0 977.0 L1562.0 977.0 L1565.0 977.0 L1568.0 977.0 L1571.0 977.0 L1574.0 977.0 L1577.0 977.0 L1580.0 977.0 L1583.0 977.0 L1586.0 977.0 L1589.0 977.0 L1592.0 977.0 L1595.0 977.0 L1598.0 977.0 L1601.0 977.0 L1604.0 977.0 L1607.0 977.0 L1610.0 977.0 L1613.0 977.0 L1616.0 977.0 L1619.0 977.0 L1622.0 977.0 L1625.0 977.0 L1628.0 977.0 L1631.0 977.0 L1634.0 977.0 L1637.0 977.0 L1640.0 977.0 L1643.0 977.0 L1646.0 977.0 L1649.0 977.0 L1652.0 977.0 L1655.0 977.0 L1658.0 977.0 L1661.0 977.0 L1664.0 977.0 L1667.0 977.0 L1670.0 977.0 L1673.0 977.0 L1676.0 977.0 L1679.0 977.0 L1682.0 977.0 L1685.0 977.0 L1688.0 977.0 L1691.0 977.0 L1694.0 977.0 L1697.0 977.0 L1700.0 977.0 L1703.0 977.0 L1706.0 977.0 L1709.0 977.0 L1712.0 977.0 L1715.0 977.0 L1718.0 977.0 L1721.0 977.0 L1724.0 977.0 L1727.0 977.0 L1730.0 977.0 L1733.0 977.0 L1736.0 977.0 L1739.0 977.0 L1742.0 977.0 L1745.0 977.0 L1748.0 977.0 L1751.0 977.0" fill="none" stroke="#7828a0" stroke-width="1.40" stroke-linejoin="round"/>
<line x1="3" y1="161.5" x2="1720" y2="161.5" stroke="#444" stroke-width="1.2" stroke-dasharray="5 5"/>
<line x1="3" y1="246.5" x2="1720" y2="246.5" stroke="#444" stroke-width="1.2" stroke-dasharray="5 5"/>
<line x1="3" y1="349.5" x2="1720" y2="349.5" stroke="#444" stroke-width="1.2" stroke-dasharray="5 5"/>
<line x1="3" y1="583.5" x2="1720" y2="583.5" stroke="#444" stroke-width="1.2" stroke-dasharray="5 5"/>
<line x1="3" y1="863.5" x2="1720" y2="863.5" stroke="#444" stroke-width="1.2" stroke-dasharray="5 5"/>
<line x1="3" y1="979.5" x2="1720" y2="979.5" stroke="#444" stroke-width="1.2" stroke-dasharray="5 5"/>
</g>
<rect x="3" y="993" width="1748" height="2.5" fill="#e4e4e6"/>
<rect x="588" y="44" width="574" height="2" fill="#b8b8b8"/>
<path d="M593 36.6H587.1V52.4H593" fill="none" stroke="#e8e8e8" stroke-width="1.4"/>
<path d="M1161 36.6H1167.3V52.4H1161" fill="none" stroke="#e8e8e8" stroke-width="1.4"/>
<path d="M596 33L611 33L603.5 38Z" fill="#f7921e"/>
<path d="M597.5 40.5H609V51.5H606L603.3 55.5L600.6 51.5H597.5Z" fill="#000" stroke="#f7921e" stroke-width="1.8"/>
<text x="603.3" y="50" font-size="11" font-weight="bold" fill="#f7921e" text-anchor="middle">T</text>
<path d="M47 58H64L55.5 68Z" fill="#f7921e"/>
<path d="M46.5 644.5H64V662.5H59.5L55.5 669.5L51.5 662.5H46.5Z" fill="#000" stroke="#f7921e" stroke-width="2.2"/>
<text x="55.3" y="660" font-size="15" font-weight="bold" fill="#f7921e" text-anchor="middle">T</text>
<path d="M10.0 102.5 H77 L83.5 115.5 L77 128.5 H10.0 Q7 128.5 7 125.5 V105.5 Q7 102.5 10.0 102.5 Z" fill="#e8e8e8" stroke="#1e1e1e" stroke-width="1.8"/>
<rect x="32" y="102.5" width="2" height="26.0" fill="#1e1e1e"/>
<text x="19.8" y="120.0" font-size="12.5" fill="#222" text-anchor="middle" letter-spacing="-0.6">C 1</text>
<text x="57.5" y="120.0" font-size="12.5" fill="#222" text-anchor="middle">20 V</text>
<path d="M10.0 219.8 H77 L83.5 232.3 L77 244.8 H10.0 Q7 244.8 7 241.8 V222.8 Q7 219.8 10.0 219.8 Z" fill="#e6f8f8" stroke="#22c4cc" stroke-width="1.8"/>
<rect x="32" y="219.8" width="2" height="25.0" fill="#22c4cc"/>
<text x="19.8" y="236.8" font-size="12.5" fill="#111" text-anchor="middle" letter-spacing="-0.6">C 2</text>
<text x="57.5" y="236.8" font-size="12.5" fill="#111" text-anchor="middle">300 mV</text>
<path d="M10.0 337.5 H36 L42.5 350.0 L36 362.5 H10.0 Q7 362.5 7 359.5 V340.5 Q7 337.5 10.0 337.5 Z" fill="#fde6ea" stroke="#f0a0b4" stroke-width="1.5"/>
<text x="23" y="354.5" font-size="12.5" fill="#e0506e" text-anchor="middle" letter-spacing="-0.6">C 3</text>
<path d="M10.0 454.0 H77 L83.5 466.5 L77 479.0 H10.0 Q7 479.0 7 476.0 V457.0 Q7 454.0 10.0 454.0 Z" fill="#eef6e6" stroke="#7cc832" stroke-width="1.8"/>
<rect x="32" y="454.0" width="2" height="25.0" fill="#7cc832"/>
<text x="19.8" y="471.0" font-size="12.5" fill="#111" text-anchor="middle" letter-spacing="-0.6">C 4</text>
<text x="57.5" y="471.0" font-size="12.5" fill="#111" text-anchor="middle">200 mV</text>
<path d="M10.0 571.0 H36 L42.5 583.5 L36 596.0 H10.0 Q7 596.0 7 593.0 V574.0 Q7 571.0 10.0 571.0 Z" fill="#fff2e4" stroke="#f8c48c" stroke-width="1.5"/>
<text x="23" y="588.0" font-size="12.5" fill="#222" text-anchor="middle" letter-spacing="-0.6">C 5</text>
<path d="M10.0 687.5 H77 L83.5 700.2 L77 713.0 H10.0 Q7 713.0 7 710.0 V690.5 Q7 687.5 10.0 687.5 Z" fill="#e8e8f6" stroke="#111" stroke-width="1.8"/>
<path d="M11.0 688.5 H33 V712.0 H11.0 Q8 712.0 8 709.0 V691.5 Q8 688.5 11.0 688.5 Z" fill="#2a22c0"/>
<rect x="32" y="687.5" width="2" height="25.5" fill="#111"/>
<text x="19.8" y="704.8" font-size="12.5" fill="#fff" text-anchor="middle" letter-spacing="-0.6">C 6</text>
<text x="57.5" y="704.8" font-size="12.5" fill="#3030c0" text-anchor="middle">3 V</text>
<path d="M10.0 851.3 H36 L42.5 863.0 L36 874.8 H10.0 Q7 874.8 7 871.8 V854.3 Q7 851.3 10.0 851.3 Z" fill="#fff2e4" stroke="#f8c48c" stroke-width="1.5"/>
<text x="23" y="867.5" font-size="12.5" fill="#222" text-anchor="middle" letter-spacing="-0.6">M 1</text>
<path d="M10.0 966.0 H36 L42.5 978.2 L36 990.5 H10.0 Q7 990.5 7 987.5 V969.0 Q7 966.0 10.0 966.0 Z" fill="#f6eef8" stroke="#c8a4d8" stroke-width="1.5"/>
<text x="23" y="982.8" font-size="12.5" fill="#9050b0" text-anchor="middle" letter-spacing="-0.6">M 2</text>
<text x="101" y="122" font-size="19.5" fill="#111" stroke="#111" stroke-width="0.35">U_loop,coil</text>
<text x="101.9" y="239.9" font-size="19.5" fill="#000" fill-opacity="0.55">U_Bt,coil</text>
<text x="101" y="239" font-size="19.5" fill="#1cb8c4" stroke="#1cb8c4" stroke-width="0.35">U_Bt,coil</text>
<text x="54.9" y="356.9" font-size="19.5" fill="#000" fill-opacity="0.55">U_Rog,coil</text>
<text x="54" y="356" font-size="19.5" fill="#c8244a" stroke="#c8244a" stroke-width="0.35">U_Rog,coil</text>
<text x="101.9" y="473.9" font-size="19.5" fill="#000" fill-opacity="0.55">U_Photod</text>
<text x="101" y="473" font-size="19.5" fill="#68a820" stroke="#68a820" stroke-width="0.35">U_Photod</text>
<text x="54.9" y="590.9" font-size="19.5" fill="#000" fill-opacity="0.55">U_Diamagn</text>
<text x="54" y="590" font-size="19.5" fill="#e8901c" stroke="#e8901c" stroke-width="0.35">U_Diamagn</text>
<text x="101.9" y="707.9" font-size="19.5" fill="#000" fill-opacity="0.55">Trigger</text>
<text x="101" y="707" font-size="19.5" fill="#2424a0" stroke="#2424a0" stroke-width="0.35">Trigger</text>
<text x="53.9" y="866.9" font-size="19.5" fill="#000" fill-opacity="0.55">B_t</text>
<text x="53" y="866" font-size="19.5" fill="#e8901c" stroke="#e8901c" stroke-width="0.35">B_t</text>
<text x="54.9" y="983.9" font-size="19.5" fill="#000" fill-opacity="0.55">I_p</text>
<text x="54" y="983" font-size="19.5" fill="#6a2090" stroke="#6a2090" stroke-width="0.35">I_p</text>
<text x="1746" y="96.5" font-size="13" fill="#111" text-anchor="end" letter-spacing="0.25">30 V</text>
<text x="1746" y="119.5" font-size="13" fill="#111" text-anchor="end" letter-spacing="0.25">20 V</text>
<text x="1746" y="142.5" font-size="13" fill="#111" text-anchor="end" letter-spacing="0.25">10 V</text>
<text x="1746" y="165.5" font-size="13" fill="#111" text-anchor="end" letter-spacing="0.25">0 V</text>
<text x="1747" y="194.5" font-size="13" fill="#000" text-anchor="end" letter-spacing="0.25">1.25 V</text>
<text x="1746" y="193.5" font-size="13" fill="#20cdd6" text-anchor="end" letter-spacing="0.25">1.25 V</text>
<text x="1747" y="217.5" font-size="13" fill="#000" text-anchor="end" letter-spacing="0.25">750 mV</text>
<text x="1746" y="216.5" font-size="13" fill="#20cdd6" text-anchor="end" letter-spacing="0.25">750 mV</text>
<text x="1747" y="240.5" font-size="13" fill="#000" text-anchor="end" letter-spacing="0.25">250 mV</text>
<text x="1746" y="239.5" font-size="13" fill="#20cdd6" text-anchor="end" letter-spacing="0.25">250 mV</text>
<text x="1747" y="263.5" font-size="13" fill="#000" text-anchor="end" letter-spacing="0.25">-250 mV</text>
<text x="1746" y="262.5" font-size="13" fill="#20cdd6" text-anchor="end" letter-spacing="0.25">-250 mV</text>
<text x="1747" y="286.5" font-size="13" fill="#000" text-anchor="end" letter-spacing="0.25">-750 mV</text>
<text x="1746" y="285.5" font-size="13" fill="#20cdd6" text-anchor="end" letter-spacing="0.25">-750 mV</text>
<text x="1747" y="309.0" font-size="13" fill="#000" text-anchor="end" letter-spacing="0.25">1.80 V</text>
<text x="1746" y="308.0" font-size="13" fill="#e02a56" text-anchor="end" letter-spacing="0.25">1.80 V</text>
<text x="1747" y="332.0" font-size="13" fill="#000" text-anchor="end" letter-spacing="0.25">900 mV</text>
<text x="1746" y="331.0" font-size="13" fill="#e02a56" text-anchor="end" letter-spacing="0.25">900 mV</text>
<text x="1747" y="355.0" font-size="13" fill="#000" text-anchor="end" letter-spacing="0.25">0 V</text>
<text x="1746" y="354.0" font-size="13" fill="#e02a56" text-anchor="end" letter-spacing="0.25">0 V</text>
<text x="1747" y="378.0" font-size="13" fill="#000" text-anchor="end" letter-spacing="0.25">-900 mV</text>
<text x="1746" y="377.0" font-size="13" fill="#e02a56" text-anchor="end" letter-spacing="0.25">-900 mV</text>
<text x="1747" y="401.0" font-size="13" fill="#000" text-anchor="end" letter-spacing="0.25">-1.80 V</text>
<text x="1746" y="400.0" font-size="13" fill="#e02a56" text-anchor="end" letter-spacing="0.25">-1.80 V</text>
<text x="1747" y="426.0" font-size="13" fill="#000" text-anchor="end" letter-spacing="0.25">1 V</text>
<text x="1746" y="425.0" font-size="13" fill="#78c428" text-anchor="end" letter-spacing="0.25">1 V</text>
<text x="1747" y="449.0" font-size="13" fill="#000" text-anchor="end" letter-spacing="0.25">600 mV</text>
<text x="1746" y="448.0" font-size="13" fill="#78c428" text-anchor="end" letter-spacing="0.25">600 mV</text>
<text x="1747" y="472.0" font-size="13" fill="#000" text-anchor="end" letter-spacing="0.25">200 mV</text>
<text x="1746" y="471.0" font-size="13" fill="#78c428" text-anchor="end" letter-spacing="0.25">200 mV</text>
<text x="1747" y="495.0" font-size="13" fill="#000" text-anchor="end" letter-spacing="0.25">-200 mV</text>
<text x="1746" y="494.0" font-size="13" fill="#78c428" text-anchor="end" letter-spacing="0.25">-200 mV</text>
<text x="1747" y="518.0" font-size="13" fill="#000" text-anchor="end" letter-spacing="0.25">-600 mV</text>
<text x="1746" y="517.0" font-size="13" fill="#78c428" text-anchor="end" letter-spacing="0.25">-600 mV</text>
<text x="1747" y="543.0" font-size="13" fill="#000" text-anchor="end" letter-spacing="0.25">4 V</text>
<text x="1746" y="542.0" font-size="13" fill="#f39a28" text-anchor="end" letter-spacing="0.25">4 V</text>
<text x="1747" y="566.0" font-size="13" fill="#000" text-anchor="end" letter-spacing="0.25">2 V</text>
<text x="1746" y="565.0" font-size="13" fill="#f39a28" text-anchor="end" letter-spacing="0.25">2 V</text>
<text x="1747" y="589.0" font-size="13" fill="#000" text-anchor="end" letter-spacing="0.25">0 V</text>
<text x="1746" y="588.0" font-size="13" fill="#f39a28" text-anchor="end" letter-spacing="0.25">0 V</text>
<text x="1747" y="612.0" font-size="13" fill="#000" text-anchor="end" letter-spacing="0.25">-2 V</text>
<text x="1746" y="611.0" font-size="13" fill="#f39a28" text-anchor="end" letter-spacing="0.25">-2 V</text>
<text x="1747" y="635.0" font-size="13" fill="#000" text-anchor="end" letter-spacing="0.25">-4 V</text>
<text x="1746" y="634.0" font-size="13" fill="#f39a28" text-anchor="end" letter-spacing="0.25">-4 V</text>
<text x="1747" y="660.0" font-size="13" fill="#000" text-anchor="end" letter-spacing="0.25">6 V</text>
<text x="1746" y="659.0" font-size="13" fill="#2a2ab8" text-anchor="end" letter-spacing="0.25">6 V</text>
<text x="1747" y="683.0" font-size="13" fill="#000" text-anchor="end" letter-spacing="0.25">4.50 V</text>
<text x="1746" y="682.0" font-size="13" fill="#2a2ab8" text-anchor="end" letter-spacing="0.25">4.50 V</text>
<text x="1747" y="706.0" font-size="13" fill="#000" text-anchor="end" letter-spacing="0.25">3 V</text>
<text x="1746" y="705.0" font-size="13" fill="#2a2ab8" text-anchor="end" letter-spacing="0.25">3 V</text>
<text x="1747" y="729.0" font-size="13" fill="#000" text-anchor="end" letter-spacing="0.25">1.50 V</text>
<text x="1746" y="728.0" font-size="13" fill="#2a2ab8" text-anchor="end" letter-spacing="0.25">1.50 V</text>
<text x="1747" y="752.0" font-size="13" fill="#000" text-anchor="end" letter-spacing="0.25">0 V</text>
<text x="1746" y="751.0" font-size="13" fill="#2a2ab8" text-anchor="end" letter-spacing="0.25">0 V</text>
<text x="1747" y="777.0" font-size="13" fill="#000" text-anchor="end" letter-spacing="0.25">590.254 mT</text>
<text x="1746" y="776.0" font-size="13" fill="#f39a28" text-anchor="end" letter-spacing="0.25">590.254 mT</text>
<text x="1747" y="800.0" font-size="13" fill="#000" text-anchor="end" letter-spacing="0.25">442.691 mT</text>
<text x="1746" y="799.0" font-size="13" fill="#f39a28" text-anchor="end" letter-spacing="0.25">442.691 mT</text>
<text x="1747" y="823.0" font-size="13" fill="#000" text-anchor="end" letter-spacing="0.25">295.127 mT</text>
<text x="1746" y="822.0" font-size="13" fill="#f39a28" text-anchor="end" letter-spacing="0.25">295.127 mT</text>
<text x="1747" y="846.0" font-size="13" fill="#000" text-anchor="end" letter-spacing="0.25">147.564 mT</text>
<text x="1746" y="845.0" font-size="13" fill="#f39a28" text-anchor="end" letter-spacing="0.25">147.564 mT</text>
<text x="1747" y="869.0" font-size="13" fill="#000" text-anchor="end" letter-spacing="0.25">0 T</text>
<text x="1746" y="868.0" font-size="13" fill="#f39a28" text-anchor="end" letter-spacing="0.25">0 T</text>
<text x="1747" y="892.0" font-size="13" fill="#000" text-anchor="end" letter-spacing="0.25">6.373288 kA</text>
<text x="1746" y="891.0" font-size="13" fill="#7a30a8" text-anchor="end" letter-spacing="0.25">6.373288 kA</text>
<text x="1747" y="915.0" font-size="13" fill="#000" text-anchor="end" letter-spacing="0.25">4.779966 kA</text>
<text x="1746" y="914.0" font-size="13" fill="#7a30a8" text-anchor="end" letter-spacing="0.25">4.779966 kA</text>
<text x="1747" y="938.0" font-size="13" fill="#000" text-anchor="end" letter-spacing="0.25">3.186644 kA</text>
<text x="1746" y="937.0" font-size="13" fill="#7a30a8" text-anchor="end" letter-spacing="0.25">3.186644 kA</text>
<text x="1747" y="961.0" font-size="13" fill="#000" text-anchor="end" letter-spacing="0.25">1.593322 kA</text>
<text x="1746" y="960.0" font-size="13" fill="#7a30a8" text-anchor="end" letter-spacing="0.25">1.593322 kA</text>
<text x="1747" y="984.0" font-size="13" fill="#000" text-anchor="end" letter-spacing="0.25">0 A</text>
<text x="1746" y="983.0" font-size="13" fill="#7a30a8" text-anchor="end" letter-spacing="0.25">0 A</text>
<text x="55.9" y="752.5" font-size="13" fill="#222" text-anchor="middle">0 s</text>
<text x="230.7" y="752.5" font-size="13" fill="#222" text-anchor="middle">4 ms</text>
<text x="405.5" y="752.5" font-size="13" fill="#222" text-anchor="middle">8 ms</text>
<text x="580.3" y="752.5" font-size="13" fill="#222" text-anchor="middle">12 ms</text>
<text x="755.1" y="752.5" font-size="13" fill="#222" text-anchor="middle">16 ms</text>
<text x="929.9" y="752.5" font-size="13" fill="#222" text-anchor="middle">20 ms</text>
<text x="1104.7" y="752.5" font-size="13" fill="#222" text-anchor="middle">24 ms</text>
<text x="1279.5" y="752.5" font-size="13" fill="#222" text-anchor="middle">28 ms</text>
<text x="1454.3" y="752.5" font-size="13" fill="#222" text-anchor="middle">32 ms</text>
<text x="1629.1" y="752.5" font-size="13" fill="#222" text-anchor="middle">36 ms</text>
<path d="M1730.5 700.5L1741.5 691V698.8H1751V702.2H1741.5V710Z" fill="#2a2ab8"/>
<path d="M1710 65H1742.5L1744 66.5V98.5Z" fill="#505050" stroke="#111" stroke-width="1.3" stroke-linejoin="round"/>
<circle cx="1737" cy="71.3" r="4" fill="none" stroke="#9a9a9a" stroke-width="1.5"/><path d="M1733.8 74.5L1728.2 79.6" stroke="#9a9a9a" stroke-width="2.2" stroke-linecap="round"/>
</svg>
<style>.btn{position:absolute;border:1px solid #6e665e;border-radius:6px;background:linear-gradient(#3c3c3e,#2c2c2c 35%,#2a2a2a 85%,#222);color:#f0f0f0;font-size:14.5px;text-align:center;line-height:16px;display:flex;align-items:center;justify-content:center}</style>
<div class="a" style="left:1769px;top:29px;width:151px;height:967.5px;border-left:1px solid #6a625c;border-top:1px solid #6a625c;border-bottom:1px solid #6a625c"></div>
<div class="a" style="left:1786px;top:-2.1px;width:140px;color:#fff;font-size:32px;font-weight:bold;line-height:34px;letter-spacing:-1.3px;transform:scaleX(0.89);transform-origin:0 0">Tektronix</div>
<svg class="a" style="left:1810px;top:4.5px" width="30" height="24"><path d="M5.5 20.8H11.5L21 4.5H15Z" fill="#1cb4d8"/></svg>
<div class="a" style="left:1770px;top:29px;width:150px;text-align:center;color:#e8e8e8;font-size:15px;font-weight:bold;line-height:18px;letter-spacing:0.8px">Add New...</div>
<div class="btn" style="left:1778px;top:54px;width:63px;height:37px">Cursors</div>
<div class="btn" style="left:1850px;top:54px;width:63px;height:37px">Callout</div>
<div class="btn" style="left:1778px;top:100px;width:63px;height:37px">Measure</div>
<div class="btn" style="left:1850px;top:100px;width:63px;height:37px">Search</div>
<div class="btn" style="left:1778px;top:146px;width:63px;height:37px">Results<br>Table</div>
<div class="btn" style="left:1850px;top:146px;width:63px;height:37px">Plot</div>
<div class="btn" style="left:1778px;top:196px;width:63px;height:37px"></div>
<div class="btn" style="left:1850px;top:196px;width:63px;height:37px">More...</div>
<div class="a" style="left:1773px;top:189px;width:144px;height:1px;background:#5a544e"></div>
<div class="a" style="left:1773px;top:241px;width:144px;height:1px;background:#5a544e"></div>
<svg class="a" style="left:1795px;top:201px" width="32" height="28"><g fill="#c8c8c8"><rect x="2" y="1.5" width="3" height="3"/><rect x="23" y="1.5" width="3" height="3"/><rect x="2" y="19" width="3" height="3"/><rect x="8" y="1.5" width="4" height="2.6"/><rect x="15.5" y="1.5" width="4" height="2.6"/><rect x="8" y="19.4" width="4" height="2.6"/><rect x="15.5" y="19.4" width="4" height="2.6"/><rect x="2" y="7.5" width="2.6" height="3.5"/><rect x="2" y="13.5" width="2.6" height="3.5"/><rect x="23.4" y="7.5" width="2.6" height="3.5"/><rect x="23.4" y="13.5" width="2.6" height="3.5"/></g><circle cx="16" cy="9.8" r="4.4" fill="none" stroke="#c8c8c8" stroke-width="1.8"/><path d="M12.6 13.4L8.6 16.9" stroke="#c8c8c8" stroke-width="2.6" stroke-linecap="round"/><path d="M20.5 16.3L28.3 21.6L25.4 22.3L27.6 25.4L25.9 26.6L23.7 23.4L21.9 25.3Z" fill="#c8c8c8" stroke="#2c2c2c" stroke-width="0.6"/></svg>
<div class="a" style="left:1759.5px;top:502px;width:5px;height:5px;border-radius:50%;background:#c8c8c8"></div>
<div class="a" style="left:1759.5px;top:510px;width:5px;height:5px;border-radius:50%;background:#c8c8c8"></div>
<div class="a" style="left:1759.5px;top:518px;width:5px;height:5px;border-radius:50%;background:#c8c8c8"></div>
<style>.bd{position:absolute;font-size:14.3px;line-height:19px;color:#111;white-space:nowrap}.hd{position:absolute;font-size:14.5px;line-height:19px;white-space:nowrap;-webkit-text-stroke:0.3px currentColor}</style>
<div class="a" style="left:3px;top:984px;width:90px;height:94px;border-radius:5px;background:#c8c8c8;overflow:hidden">
<div class="a" style="left:0;top:0;width:90px;height:19px;background:#1c1c1c"></div>
<div class="hd" style="left:5.5px;top:-0.5px;color:#f0f050;letter-spacing:0.3px">Ch 1</div>
<div class="a" style="left:0;top:20.5px;width:90px;height:17.5px;background:#ff0000"></div>
<svg class="a" style="left:1px;top:22px" width="17" height="16"><path d="M8.2 1.5L15.5 14.5H1Z" fill="#f2e600" stroke="#4a3a5a" stroke-width="1.2"/><rect x="7.4" y="5.5" width="1.6" height="7" fill="#b8a800"/></svg>
<div class="hd" style="left:17.5px;top:19.5px;color:#fff;letter-spacing:0.55px">Clipping</div>
<div class="bd" style="left:5.5px;top:38.5px;font-weight:normal">5 V/div</div>
<div class="bd" style="left:5.5px;top:57.5px;font-weight:normal">1 M&Omega;</div>
<div class="bd" style="left:5.5px;top:76.5px;font-weight:normal">200 kHz</div>
<div class="a" style="left:73px;top:78px;font-size:9px;line-height:9px;color:#111">B</div>
<div class="a" style="left:79px;top:81px;font-size:9px;line-height:9px;color:#111">w</div>
</div>
<div class="a" style="left:98px;top:984px;width:90px;height:94px;border-radius:5px;background:#c8c8c8;overflow:hidden">
<div class="a" style="left:0;top:0;width:90px;height:19px;background:#1c4042"></div>
<div class="hd" style="left:5.5px;top:-0.5px;color:#20d0d8;letter-spacing:0.3px">Ch 2</div>
<div class="a" style="left:0;top:20.5px;width:90px;height:17.5px;background:#ff0000"></div>
<svg class="a" style="left:1px;top:22px" width="17" height="16"><path d="M8.2 1.5L15.5 14.5H1Z" fill="#f2e600" stroke="#4a3a5a" stroke-width="1.2"/><rect x="7.4" y="5.5" width="1.6" height="7" fill="#b8a800"/></svg>
<div class="hd" style="left:17.5px;top:19.5px;color:#fff;letter-spacing:0.55px">Clipping</div>
<div class="bd" style="left:5.5px;top:38.5px;font-weight:normal">250 mV/div</div>
<div class="bd" style="left:5.5px;top:57.5px;font-weight:normal">1 M&Omega;</div>
<div class="bd" style="left:5.5px;top:76.5px;font-weight:normal">200 kHz</div>
<div class="a" style="left:73px;top:78px;font-size:9px;line-height:9px;color:#111">B</div>
<div class="a" style="left:79px;top:81px;font-size:9px;line-height:9px;color:#111">w</div>
</div>
<div class="a" style="left:193px;top:984px;width:90px;height:94px;border-radius:5px;background:#c8c8c8;overflow:hidden">
<div class="a" style="left:0;top:0;width:90px;height:19px;background:#45262a"></div>
<div class="hd" style="left:5.5px;top:-0.5px;color:#f4f0f0;letter-spacing:0.3px">Ch 3</div>
<div class="a" style="left:0;top:20.5px;width:90px;height:17.5px;background:#ff0000"></div>
<svg class="a" style="left:1px;top:22px" width="17" height="16"><path d="M8.2 1.5L15.5 14.5H1Z" fill="#f2e600" stroke="#4a3a5a" stroke-width="1.2"/><rect x="7.4" y="5.5" width="1.6" height="7" fill="#b8a800"/></svg>
<div class="hd" style="left:17.5px;top:19.5px;color:#fff;letter-spacing:0.55px">Clipping</div>
<div class="bd" style="left:5.5px;top:38.5px;font-weight:normal">450 mV/div</div>
<div class="bd" style="left:5.5px;top:57.5px;font-weight:normal">1 M&Omega;</div>
<div class="bd" style="left:5.5px;top:76.5px;font-weight:normal">200 kHz</div>
<div class="a" style="left:73px;top:78px;font-size:9px;line-height:9px;color:#111">B</div>
<div class="a" style="left:79px;top:81px;font-size:9px;line-height:9px;color:#111">w</div>
</div>
<div class="a" style="left:288px;top:1003px;width:90px;height:75px;border-radius:5px;background:#c8c8c8;overflow:hidden">
<div class="a" style="left:0;top:0;width:90px;height:19px;background:#38402a"></div>
<div class="hd" style="left:5.5px;top:-0.5px;color:#90d040;letter-spacing:0.3px">Ch 4</div>
<div class="bd" style="left:5.5px;top:19.5px;font-weight:normal">200 mV/div</div>
<div class="bd" style="left:5.5px;top:38.5px;font-weight:normal">1 M&Omega;</div>
<div class="bd" style="left:5.5px;top:57.5px;font-weight:normal">200 kHz</div>
<div class="a" style="left:73px;top:59px;font-size:9px;line-height:9px;color:#111">B</div>
<div class="a" style="left:79px;top:62px;font-size:9px;line-height:9px;color:#111">w</div>
</div>
<div class="a" style="left:383px;top:1003px;width:90px;height:75px;border-radius:5px;background:#c8c8c8;overflow:hidden">
<div class="a" style="left:0;top:0;width:90px;height:19px;background:#4a3424"></div>
<div class="hd" style="left:5.5px;top:-0.5px;color:#f0a040;letter-spacing:0.3px">Ch 5</div>
<div class="bd" style="left:5.5px;top:19.5px;font-weight:normal">1 V/div</div>
<div class="bd" style="left:5.5px;top:38.5px;font-weight:normal">1 M&Omega;</div>
<div class="bd" style="left:5.5px;top:57.5px;font-weight:normal">200 kHz</div>
<div class="a" style="left:73px;top:59px;font-size:9px;line-height:9px;color:#111">B</div>
<div class="a" style="left:79px;top:62px;font-size:9px;line-height:9px;color:#111">w</div>
</div>
<div class="a" style="left:478px;top:984px;width:90px;height:94px;border-radius:5px;background:#c8c8c8;overflow:hidden">
<div class="a" style="left:0;top:0;width:90px;height:19px;background:#2a22c0"></div>
<div class="hd" style="left:5.5px;top:-0.5px;color:#ffffff;letter-spacing:0.3px">Ch 6</div>
<div class="a" style="left:0;top:20.5px;width:90px;height:17.5px;background:#ff0000"></div>
<svg class="a" style="left:1px;top:22px" width="17" height="16"><path d="M8.2 1.5L15.5 14.5H1Z" fill="#f2e600" stroke="#4a3a5a" stroke-width="1.2"/><rect x="7.4" y="5.5" width="1.6" height="7" fill="#b8a800"/></svg>
<div class="hd" style="left:17.5px;top:19.5px;color:#fff;letter-spacing:0.55px">Clipping</div>
<div class="bd" style="left:5.5px;top:38.5px;font-weight:normal">750 mV/div</div>
<div class="bd" style="left:5.5px;top:57.5px;font-weight:normal">1 M&Omega;</div>
<div class="bd" style="left:5.5px;top:76.5px;font-weight:normal">200 kHz</div>
<div class="a" style="left:73px;top:78px;font-size:9px;line-height:9px;color:#111">B</div>
<div class="a" style="left:79px;top:81px;font-size:9px;line-height:9px;color:#111">w</div>
</div>
<div class="a" style="left:573px;top:984px;width:90px;height:94px;border-radius:5px;background:#c8c8c8;overflow:hidden">
<div class="a" style="left:0;top:0;width:90px;height:19px;background:#4a3420"></div>
<div class="hd" style="left:5.5px;top:-0.5px;color:#f0a030;letter-spacing:0.3px">Math 1</div>
<div class="a" style="left:0;top:20.5px;width:90px;height:17.5px;background:#ff0000"></div>
<svg class="a" style="left:1px;top:22px" width="17" height="16"><path d="M8.2 1.5L15.5 14.5H1Z" fill="#f2e600" stroke="#4a3a5a" stroke-width="1.2"/><rect x="7.4" y="5.5" width="1.6" height="7" fill="#b8a800"/></svg>
<div class="hd" style="left:17.5px;top:19.5px;color:#fff;letter-spacing:0.55px">Empty i...</div>
<div class="bd" style="left:5.5px;top:38.5px;font-weight:bold">73.7 mT/div</div>
<div class="bd" style="left:5.5px;top:57.5px;font-weight:normal">Intg(Ch2)...</div>
</div>
<div class="a" style="left:668px;top:984px;width:90px;height:94px;border-radius:5px;background:#c8c8c8;overflow:hidden">
<div class="a" style="left:0;top:0;width:90px;height:19px;background:#2e2236"></div>
<div class="hd" style="left:5.5px;top:-0.5px;color:#ffffff;letter-spacing:0.3px">Math 2</div>
<div class="a" style="left:0;top:20.5px;width:90px;height:17.5px;background:#ff0000"></div>
<svg class="a" style="left:1px;top:22px" width="17" height="16"><path d="M8.2 1.5L15.5 14.5H1Z" fill="#f2e600" stroke="#4a3a5a" stroke-width="1.2"/><rect x="7.4" y="5.5" width="1.6" height="7" fill="#b8a800"/></svg>
<div class="hd" style="left:17.5px;top:19.5px;color:#fff;letter-spacing:0.55px">Empty i...</div>
<div class="bd" style="left:5.5px;top:38.5px;font-weight:bold">796.66 A/...</div>
<div class="bd" style="left:5.5px;top:57.5px;font-weight:normal">-Intg(Ch3...</div>
</div>
<div class="btn" style="left:1129px;top:999px;width:40px;height:79px;border-radius:7px;align-items:flex-start;padding-top:19px;line-height:16px">Add<br>New<br>Math</div>
<div class="a" style="left:1133px;top:1007px;width:32px;height:2px;background:#c02020"></div>
<div class="btn" style="left:1174px;top:999px;width:40px;height:79px;border-radius:7px;align-items:flex-start;padding-top:19px;line-height:16px">Add<br>New<br>Ref</div>
<div class="a" style="left:1178px;top:1007px;width:32px;height:2px;background:#c8c8d8"></div>
<div class="btn" style="left:1219px;top:999px;width:40px;height:79px;border-radius:7px;align-items:flex-start;padding-top:19px;line-height:16px">Add<br>New<br>Bus</div>
<div class="a" style="left:1223px;top:1007px;width:32px;height:2px;background:#c040f0"></div>
<div class="a" style="left:1269px;top:1000px;width:1px;height:78px;background:#555"></div>
<div class="a" style="left:1118px;top:1000px;width:1px;height:78px;background:#555"></div>
<div class="a" style="left:1811px;top:1000px;width:1px;height:78px;background:#555"></div>
<div class="a" style="left:1281px;top:1003.5px;width:198px;height:74.5px;border-radius:5px;background:#c8c8c8;overflow:hidden">
<div class="a" style="left:0;top:0;width:198px;height:19.5px;background:#58585a;border-bottom:1.5px solid #a0a0a0"></div>
<div class="hd" style="left:6px;top:0px;color:#f0f0f0;letter-spacing:0.4px">Horizontal</div>
<div class="bd" style="left:4px;top:18px">4 ms/div</div><div class="bd" style="left:110px;top:18px">40 ms</div><div class="bd" style="left:4px;top:37px">SR: 1 MS/s</div><div class="bd" style="left:111px;top:37px">1 &micro;s/pt</div><div class="bd" style="left:4px;top:56px">RL: 40 kpts</div><div class="bd" style="left:124px;top:56px">3%</div><svg class="a" style="left:109px;top:59px" width="12" height="15"><path d="M1.5 1.5H9.5V9.5H7L5.5 12L4 9.5H1.5Z" fill="#000" stroke="#f7921e" stroke-width="1.5"/><text x="5.5" y="8.5" font-size="8" font-weight="bold" fill="#fff" text-anchor="middle" font-family="Liberation Sans">T</text></svg>
</div>
<div class="a" style="left:1486px;top:1003.5px;width:158px;height:74.5px;border-radius:5px;background:#c8c8c8;overflow:hidden">
<div class="a" style="left:0;top:0;width:158px;height:19.5px;background:#58585a;border-bottom:1.5px solid #a0a0a0"></div>
<div class="hd" style="left:6px;top:0px;color:#f0f0f0;letter-spacing:0.4px">Trigger</div>
<div class="a" style="left:4.5px;top:22px;width:29px;height:15.5px;border-radius:5px;background:#2a22c0;border:1px solid #111;color:#fff;font-size:14px;line-height:14px;text-align:center">6</div><svg class="a" style="left:43px;top:22.5px" width="20" height="14"><path d="M1 12.5H5L12 2H17" fill="none" stroke="#3a3a98" stroke-width="1.1"/></svg><div class="bd" style="left:70px;top:19px;letter-spacing:0.8px">3 V</div>
</div>
<div class="a" style="left:1651px;top:1003.5px;width:148px;height:74.5px;border-radius:5px;background:#c8c8c8;overflow:hidden">
<div class="a" style="left:0;top:0;width:148px;height:19.5px;background:#58585a;border-bottom:1.5px solid #a0a0a0"></div>
<div class="hd" style="left:6px;top:0px;color:#f0f0f0;letter-spacing:0.4px">Acquisition</div>
<div class="bd" style="left:3px;top:18px">Manual,</div><div class="bd" style="left:84px;top:18px">Analyze</div><div class="bd" style="left:3px;top:37px">High Res: 16 bits</div><div class="bd" style="left:3px;top:56px">Single: 1 /1</div>
</div>
<div class="a" style="left:1822px;top:999px;width:90px;height:36px;border-radius:6px;background:#f21c24;border:1px solid #8a3a3a;color:#fff;font-size:14px;font-weight:bold;text-align:center;line-height:31px">Stopped</div>
<div class="a" style="left:1822px;top:1040px;width:90px;height:38px;border-radius:5px;background:#c8c8c8;border:1px solid #555;color:#111;font-size:14.3px;text-align:center;line-height:17px;padding-top:1px">24 Apr 2025<br>5:25:27 PM</div>
</body></html>
